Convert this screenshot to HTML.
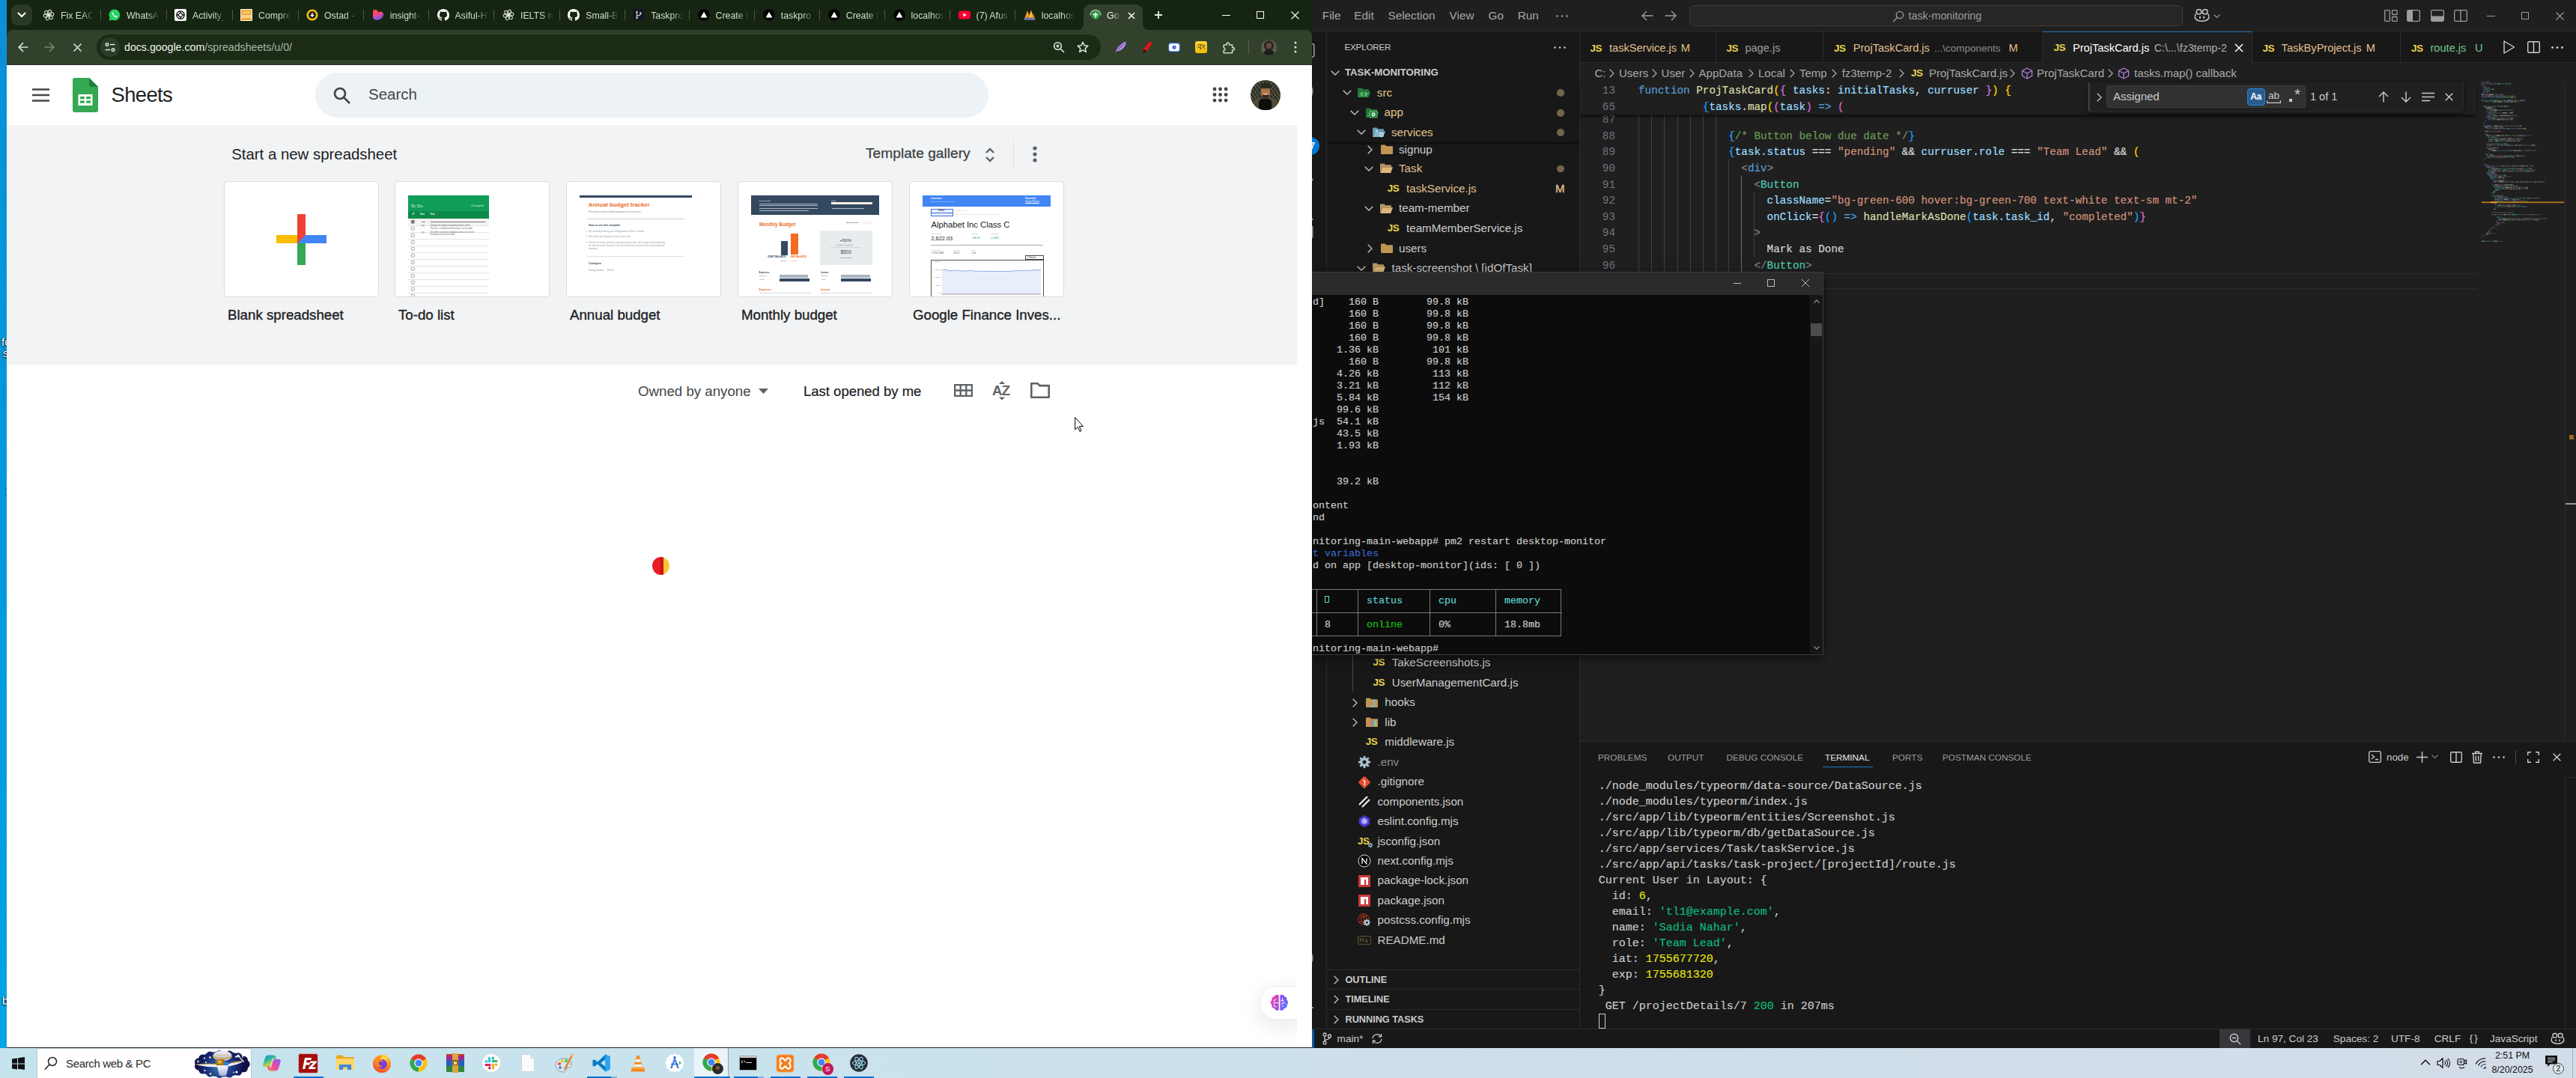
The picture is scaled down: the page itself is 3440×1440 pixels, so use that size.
<!DOCTYPE html>
<html lang="en"><head><meta charset="utf-8"><title>Desktop</title>
<style>
*{box-sizing:border-box;margin:0;padding:0}
html,body{width:3440px;height:1440px;overflow:hidden;background:#0096da;font-family:"Liberation Sans",sans-serif}
.a{position:absolute}
svg{position:absolute;overflow:visible}
#desk{left:0;top:0;width:12px;height:1400px;background:linear-gradient(180deg,#0a90d6 0%,#0098dc 45%,#00a4e4 100%);overflow:hidden}
#desk span{position:absolute;color:#fff;font-size:15px;text-shadow:0 1px 2px #000,0 0 2px #000}

#vs{left:1752px;top:0;width:1688px;height:1400px;background:#1f1f1f;overflow:hidden;color:#ccc;font-size:15.2px}
#vs .title{left:0;top:0;width:1688px;height:42px;background:#1f1f1f;border-bottom:1px solid #2b2b2b}
#vs .menu{position:absolute;top:0;line-height:41px;font-size:15.3px;color:#a6a6a6}
#vs .cc{left:504px;top:6.500px;width:659px;height:28px;border-radius:7px;background:#262626;border:1px solid #3e3e3e}
#vs .actb{left:0;top:42px;width:20px;height:1332px;background:#181818;border-right:1px solid #2b2b2b}
#vs .side{left:20px;top:42px;width:338px;height:1332px;background:#181818;border-right:1px solid #2b2b2b}
#vs .row{position:absolute;left:20px;width:337px;height:26.4px;line-height:26px;white-space:nowrap}
#vs .row .n{position:absolute;top:0}
#vs .row .m{position:absolute;left:307px;top:8.700px;width:9.500px;height:9.500px;border-radius:50%;background:#73654b}
#vs .mod{color:#e2c08d}
#vs .js{position:absolute;font-weight:700;font-size:12px;color:#e8d44d;letter-spacing:-.6px;top:0}
#vs .tabs{left:358px;top:42px;width:1330px;height:42px;background:#181818;border-bottom:1px solid #2b2b2b}
#vs .tab{position:absolute;top:42px;height:42px;border-right:1px solid #2b2b2b;line-height:45px;white-space:nowrap;font-size:14.6px}
#vs .tab span{position:absolute;top:0}
#vs .tab .d{font-size:13.5px;color:#8d8d8d}
#vs .bc{position:absolute;top:84.500px;line-height:26px;font-size:15px;color:#a9a9a9;white-space:nowrap}
#vs .code{position:absolute;left:436px;height:21.6px;line-height:21.6px;font-family:"Liberation Mono",monospace;font-size:14.3px;white-space:pre;color:#d4d4d4;-webkit-text-stroke:.2px}
#vs .ln{position:absolute;left:358px;width:47px;text-align:right;height:21.6px;line-height:21.6px;font-family:"Liberation Mono",monospace;font-size:14.3px;color:#6e7681}
#vs .g{position:absolute;width:1px;background:#404040}
#vs .k{color:#569cd6}#vs .f{color:#dcdcaa}#vs .v{color:#9cdcfe}#vs .s{color:#ce9178}#vs .c{color:#6a9955}#vs .t{color:#4ec9b0}#vs .gr{color:#808080}
#vs .b1{color:#ffd700}#vs .b2{color:#da70d6}#vs .b3{color:#179fff}
#vs .sticky{left:358px;top:110px;width:1197px;height:43.2px;background:#1f1f1f;box-shadow:0 3px 4px rgba(0,0,0,.55)}
#vs .find{left:1036px;top:110px;width:502px;height:40px;background:#202020;border:1px solid #2b2b2b;border-top:none;border-left:3px solid #3a3a3a;border-radius:0 0 5px 5px;box-shadow:0 2px 8px rgba(0,0,0,.5)}
#vs .panel{left:358px;top:990px;width:1330px;height:384px;background:#181818;border-top:1px solid #2b2b2b}
#vs .pt{position:absolute;top:1001px;line-height:22px;font-size:11.75px;color:#9d9d9d;white-space:nowrap}
#vs .tl{position:absolute;left:382.7px;height:21px;line-height:21px;font-family:"Liberation Mono",monospace;font-size:15px;white-space:pre;color:#cccccc;-webkit-text-stroke:.15px}
#vs .y{color:#e5e510}#vs .gn{color:#0dbc79}
#vs .status{left:0;top:1374px;width:1688px;height:26px;background:#181818;border-top:1px solid #2b2b2b}
#vs .st{position:absolute;top:1375px;line-height:25px;font-size:13.6px;color:#ccc;white-space:nowrap}
#vs .sec{position:absolute;left:20px;width:337px;height:26.4px;border-top:1px solid #2b2b2b;font-weight:700;font-size:12.7px;line-height:26px;color:#ccc}
#vs .sec span{position:absolute;left:24.500px}

#tw{left:1752px;top:363px;width:683px;height:512px;background:#0c0c0c;border-right:1px solid #3c3c3c;border-bottom:1px solid #3c3c3c;box-shadow:0 4px 14px rgba(0,0,0,.5);overflow:hidden}
#tw .tt{left:0;top:0;width:683px;height:31px;background:#2b2b2b;border-top:1px solid #3a3a3a}
#tw .sb{left:665px;top:31px;width:17px;height:479px;background:#171717}
#tw .l{position:absolute;left:1px;height:16px;line-height:16px;font-family:"Liberation Mono",monospace;font-size:13.33px;white-space:pre;color:#cccccc;-webkit-text-stroke:.15px}
#tw .bl{color:#3a68cc}#tw .cy{color:#61d6d6}#tw .gn{color:#16c60c}
#tw .tb{position:absolute;border:1px solid #7a7a7a}

#ch{left:9px;top:0;width:1743px;height:1400px;background:#fff;overflow:hidden}
#ch .strip{left:0;top:0;width:1743px;height:52px;background:#152511}
#ch .tsb{left:6px;top:6px;width:28px;height:28px;border-radius:9px;background:#2b3a27}
#ch .tab{position:absolute;top:6px;height:34px;width:87.3px}
#ch .tab .t{position:absolute;left:35px;top:4px;width:46px;height:22px;overflow:hidden;white-space:nowrap;font-size:12.3px;line-height:22px;color:#d3dfcf;-webkit-mask-image:linear-gradient(90deg,#000 62%,transparent 96%);mask-image:linear-gradient(90deg,#000 62%,transparent 96%)}
#ch .tab .sep{position:absolute;left:87px;top:6.500px;width:1px;height:14.500px;background:#48594a}
#ch .tab svg{left:10px;top:6px}
#ch .act{left:1438px;top:6px;width:79px;height:35px;background:#32412b;border-radius:9px 9px 0 0}
#ch .act:before,#ch .act:after{content:"";position:absolute;bottom:0;width:9px;height:9px}
#ch .act:before{left:-9px;background:radial-gradient(circle at 0 0,transparent 8.5px,#32412b 9px)}
#ch .act:after{right:-9px;background:radial-gradient(circle at 100% 0,transparent 8.5px,#32412b 9px)}
#ch .act .t{position:absolute;left:31px;top:4px;width:18px;overflow:hidden;white-space:nowrap;font-size:12.4px;line-height:22px;color:#eef3ec;-webkit-mask-image:linear-gradient(90deg,#000 50%,transparent 100%)}
#ch .bar{left:0;top:40px;width:1743px;height:47px;background:#32412b;border-radius:8px 8px 0 0}
#ch .omni{left:120px;top:46px;width:1341px;height:34px;border-radius:17px;background:#1b2b16}
#ch .omni .ic{position:absolute;left:5px;top:4px;width:26px;height:26px;border-radius:13px;background:#2e3d29}
#ch .omni .url{position:absolute;left:37px;top:0;line-height:34px;font-size:14.2px;color:#a9b6a7;white-space:nowrap}
#ch .omni .url b{font-weight:400;color:#eef3ea}
#ch .tbl{left:0;top:86px;width:1743px;height:1px;background:#2c3528}
#ch .page{left:0;top:87px;width:1743px;height:1313px;background:#fff}
#ch .grey{left:0;top:80px;width:1723px;height:320px;background:#f1f3f4}
#ch .sbox{left:412px;top:10px;width:899px;height:60px;border-radius:30px;background:#edf2f6}
#ch .sbox span{position:absolute;left:71px;top:0;line-height:58px;font-size:20.5px;color:#444746}
#ch .logo-t{left:139.5px;top:17px;font-size:27.4px;line-height:46px;color:#202124;letter-spacing:-.6px}
#ch .h1{left:300.200px;top:104px;font-size:20.4px;line-height:30px;color:#202124}
#ch .tg{left:1147px;top:103px;font-size:19.2px;line-height:30px;color:#3c4043;-webkit-text-stroke:.25px #3c4043}
#ch .vsep{left:1343.5px;top:100px;width:1px;height:39px;background:#dfe1e5}
#ch .card{position:absolute;top:155px;width:207px;height:155px;background:#fff;border:1px solid #dadce0;border-radius:4px;overflow:hidden}
#ch .lbl{position:absolute;top:320px;font-size:18.7px;line-height:28px;color:#202124;font-weight:400;white-space:nowrap;-webkit-text-stroke:.35px #202124}
#ch .flt{position:absolute;top:422px;font-size:18.7px;line-height:28px;white-space:nowrap}
#ch .bclip{left:1560px;top:1160px;width:163px;height:238px;overflow:hidden}
#ch .brain{left:113px;top:69.500px;width:60px;height:45.500px;border-radius:22.500px 0 0 22.500px;background:#fff;border:1px solid #f1f1f1;box-shadow:0 8px 26px 4px rgba(0,0,0,.075)}
#ch .btm{left:0;top:1398.500px;width:1743px;height:1.500px;background:#222}

#tb{left:0;top:1400px;width:3440px;height:40px;background:linear-gradient(90deg,#c5e3ed 0%,#c9e3ed 30%,#cfdfea 60%,#d3dde9 100%)}
#tb .srch{left:49px;top:0;width:287px;height:40px;background:#fff;border:1px solid #b7cbd4;border-bottom:none}
#tb .srch span{position:absolute;left:38px;top:0;line-height:39px;font-size:15px;letter-spacing:-.35px;color:#2b2b2b}
#tb .ul{position:absolute;top:38px;height:2px;background:#0a6fd0}
#tb .clk{position:absolute;left:3305px;width:100px;text-align:center;font-size:12.4px;color:#111;line-height:19px;top:1px}
#tb .ic{position:absolute;top:5px;width:30px;height:30px}
</style></head>
<body>
<div id="desk" class="a"><span style="left:-7px;top:61px">c</span><span style="left:2px;top:448px">fc</span><span style="left:4px;top:463px">s</span><span style="left:7px;top:645px">;</span><span style="left:3px;top:1328px">b</span></div>
<div id="vs" class="a">
<div class="a title"></div>
<div class="menu" style="left:13.8px">File</div>
<div class="menu" style="left:56.3px">Edit</div>
<div class="menu" style="left:101.5px">Selection</div>
<div class="menu" style="left:183.6px">View</div>
<div class="menu" style="left:235.6px">Go</div>
<div class="menu" style="left:274.8px">Run</div>
<svg style="left:326px;top:19.5px" width="16" height="3" viewBox="0 0 16 3"><circle cx="1.500" cy="1.500" r="1.300" fill="#9d9d9d"/><circle cx="8" cy="1.500" r="1.300" fill="#9d9d9d"/><circle cx="14.500" cy="1.500" r="1.300" fill="#9d9d9d"/></svg>
<svg style="left:440px;top:14px" width="16" height="14" viewBox="0 0 16 14"><path d="M15.500 7H1.500M7 1L1 7l6 6" fill="none" stroke="#9d9d9d" stroke-width="1.400"/></svg>
<svg style="left:471px;top:14px" width="16" height="14" viewBox="0 0 16 14"><path d="M.5 7h14M9 1l6 6-6 6" fill="none" stroke="#9d9d9d" stroke-width="1.400"/></svg>
<div class="a cc"><svg style="left:270px;top:6px" width="16" height="16" viewBox="0 0 16 16"><g fill="none" stroke="#9d9d9d" stroke-width="1.300"><circle cx="10" cy="6" r="4.700"/><path d="M6.700 9.300L1 15"/></g></svg><div style="position:absolute;left:291.500px;top:0;line-height:27px;font-size:14.300px;color:#9d9d9d">task-monitoring</div></div>
<svg style="left:1178px;top:11px" width="21" height="19" viewBox="0 0 21 19"><g fill="none" stroke="#c8c8c8" stroke-width="1.500"><rect x="3.200" y="1.800" width="6.400" height="6" rx="2.500"/><rect x="11.400" y="1.800" width="6.400" height="6" rx="2.500"/><path d="M2.500 7.500C1 9 1 11 1.200 13c2 3 5.500 4.300 9.300 4.300s7.300-1.300 9.300-4.300c.200-2 .200-4-1.300-5.500"/></g><rect x="7" y="10.500" width="1.800" height="3.500" rx=".9" fill="#c8c8c8"/><rect x="12.200" y="10.500" width="1.800" height="3.500" rx=".9" fill="#c8c8c8"/></svg>
<svg style="left:1204px;top:18.5px" width="9" height="5.5" viewBox="0 0 9 5.5"><path d="M.6 .6L4.500 4.500 8.400 .6" fill="none" stroke="#9d9d9d" stroke-width="1.200"/></svg>
<svg style="left:1432px;top:13px" width="18" height="16" viewBox="0 0 18 16"><g fill="none" stroke="#9d9d9d" stroke-width="1.300"><rect x=".7" y=".7" width="6.600" height="14.600" rx="1"/><rect x="10.500" y=".7" width="6.600" height="5.800" rx="1"/><rect x="10.500" y="9.500" width="6.600" height="5.800" rx="1"/></g></svg>
<svg style="left:1462px;top:13px" width="18" height="16" viewBox="0 0 18 16"><rect x=".7" y=".7" width="16.600" height="14.600" rx="1.500" fill="none" stroke="#9d9d9d" stroke-width="1.300"/><path d="M1 1h7v14H1z" fill="#9d9d9d"/></svg>
<svg style="left:1493.5px;top:13px" width="18" height="16" viewBox="0 0 18 16"><rect x=".7" y=".7" width="16.600" height="14.600" rx="1.500" fill="none" stroke="#9d9d9d" stroke-width="1.300"/><path d="M1 8.500h16V15H1z" fill="#9d9d9d"/></svg>
<svg style="left:1525px;top:13px" width="18" height="16" viewBox="0 0 18 16"><rect x=".7" y=".7" width="16.600" height="14.600" rx="1.500" fill="none" stroke="#9d9d9d" stroke-width="1.300"/><path d="M9 .7v14.600" stroke="#9d9d9d" stroke-width="1.300"/></svg>
<svg style="left:1568.5px;top:21px" width="11" height="1" viewBox="0 0 11 1"><rect width="11" height="1" fill="#9d9d9d"/></svg>
<svg style="left:1615px;top:16px" width="10" height="10" viewBox="0 0 10 10"><rect x=".5" y=".5" width="9" height="9" fill="none" stroke="#9d9d9d"/></svg>
<svg style="left:1660.5px;top:15.5px" width="11" height="11" viewBox="0 0 11 11"><path d="M.5 .5l10 10M10.500 .5l-10 10" stroke="#9d9d9d" stroke-width="1.100"/></svg>
<div class="a actb"></div><div class="a side"></div>
<svg style="left:-10px;top:58px" width="14" height="20" viewBox="0 0 14 20"><rect x=".8" y=".8" width="12" height="17" rx="2" fill="none" stroke="#9a9a9a" stroke-width="1.600"/></svg>
<svg style="left:-14px;top:108px" width="18" height="30" viewBox="0 0 18 30"><circle cx="4" cy="14" r="11" fill="none" stroke="#8a8a8a" stroke-width="1.600"/></svg>
<div class="a" style="left:-14px;top:183px;width:24px;height:24px;border-radius:50%;background:#0078d4;color:#fff;font-size:12px;line-height:24px;text-align:right;padding-right:6px;font-weight:700">7</div>
<svg style="left:-6px;top:233px" width="8" height="14" viewBox="0 0 8 14"><path d="M1 1l6 6-6 6" fill="none" stroke="#8a8a8a" stroke-width="1.500"/></svg>
<svg style="left:-6px;top:286px" width="8" height="14" viewBox="0 0 8 14"><path d="M1 1l6 6-6 6" fill="none" stroke="#8a8a8a" stroke-width="1.500"/></svg>
<svg style="left:-12px;top:301px" width="14" height="18" viewBox="0 0 14 18"><rect x=".8" y=".8" width="12" height="16" rx="2" fill="none" stroke="#8a8a8a" stroke-width="1.600"/></svg>
<svg style="left:-14px;top:1266px" width="18" height="30" viewBox="0 0 18 30"><circle cx="4" cy="14" r="11" fill="none" stroke="#8a8a8a" stroke-width="1.600"/></svg>
<svg style="left:-10px;top:1334px" width="14" height="26" viewBox="0 0 14 26"><path d="M2 4h6v8h4M8 20H2" fill="none" stroke="#8a8a8a" stroke-width="2.200"/></svg>
<div class="a" style="left:43.5px;top:52px;line-height:22px;font-size:11.700px;color:#ccc;letter-spacing:-.25px">EXPLORER</div>
<svg style="left:323px;top:61.5px" width="16" height="3" viewBox="0 0 16 3"><circle cx="1.500" cy="1.500" r="1.300" fill="#c5c5c5"/><circle cx="8" cy="1.500" r="1.300" fill="#c5c5c5"/><circle cx="14.500" cy="1.500" r="1.300" fill="#c5c5c5"/></svg>
<svg style="left:25px;top:94.0px" width="12" height="7" viewBox="0 0 12 7"><path d="M.7 .7L6 6l5.300-5.300" fill="none" stroke="#c5c5c5" stroke-width="1.300"/></svg>
<div class="a" style="left:44px;top:84px;line-height:26px;font-size:13.200px;font-weight:700;color:#ccc">TASK-MONITORING</div>
<div class="row" style="top:110.8px"><svg style="left:20.6px;top:9.7px" width="12" height="7" viewBox="0 0 12 7"><path d="M.7 .7L6 6l5.300-5.300" fill="none" stroke="#c5c5c5" stroke-width="1.300"/></svg><svg style="left:40px;top:5.199999999999999px" width="18" height="16" viewBox="0 0 18 16"><path d="M1 2.500a1 1 0 0 1 1-1h4.500l1.700 1.800H15a1 1 0 0 1 1 1V6H4.500L1 13z" fill="#2c8f47" opacity=".8"/><path d="M4.300 6.300H18l-2.800 7.700H1z" fill="#2c8f47"/><path d="M7.500 7L5.500 9.500l2 2.500M11 7l2 2.500-2 2.500" fill="none" stroke="#7ee08a" stroke-width="1.200"/></svg><span class="n mod" style="left:66.8px">src</span><span class="m"></span></div>
<div class="row" style="top:137.4px"><svg style="left:31px;top:9.7px" width="12" height="7" viewBox="0 0 12 7"><path d="M.7 .7L6 6l5.300-5.300" fill="none" stroke="#c5c5c5" stroke-width="1.300"/></svg><svg style="left:50.8px;top:5.199999999999999px" width="18" height="16" viewBox="0 0 18 16"><path d="M1 2.500a1 1 0 0 1 1-1h4.500l1.700 1.800H15a1 1 0 0 1 1 1V6H4.500L1 13z" fill="#2c8f47" opacity=".8"/><path d="M4.300 6.300H18l-2.800 7.700H1z" fill="#2c8f47"/><rect x="6.500" y="5.500" width="9.500" height="8.500" fill="#1d7a3a" stroke="#5fd07a" stroke-width=".8"/><rect x="10.72" y="6.83" width="0.97" height="5.94" fill="#d9f5df" transform="rotate(0 11.2 9.8)"/><rect x="10.72" y="6.83" width="0.97" height="5.94" fill="#d9f5df" transform="rotate(45 11.2 9.8)"/><rect x="10.72" y="6.83" width="0.97" height="5.94" fill="#d9f5df" transform="rotate(90 11.2 9.8)"/><rect x="10.72" y="6.83" width="0.97" height="5.94" fill="#d9f5df" transform="rotate(135 11.2 9.8)"/><circle cx="11.2" cy="9.8" r="2.2" fill="#d9f5df"/><circle cx="11.2" cy="9.8" r="0.92" fill="#1d7a3a"/></svg><span class="n mod" style="left:76.6px">app</span><span class="m"></span></div>
<div class="row" style="top:163.8px"><svg style="left:40px;top:9.7px" width="12" height="7" viewBox="0 0 12 7"><path d="M.7 .7L6 6l5.300-5.300" fill="none" stroke="#c5c5c5" stroke-width="1.300"/></svg><svg style="left:60px;top:5.199999999999999px" width="18" height="16" viewBox="0 0 18 16"><path d="M1 2.500a1 1 0 0 1 1-1h4.500l1.700 1.800H15a1 1 0 0 1 1 1V6H4.500L1 13z" fill="#7fb7d6" opacity=".8"/><path d="M4.300 6.300H18l-2.800 7.700H1z" fill="#7fb7d6"/><rect x="11.95" y="7.62" width="1.10" height="6.75" fill="#cfd8dc" transform="rotate(0 12.5 11)"/><rect x="11.95" y="7.62" width="1.10" height="6.75" fill="#cfd8dc" transform="rotate(45 12.5 11)"/><rect x="11.95" y="7.62" width="1.10" height="6.75" fill="#cfd8dc" transform="rotate(90 12.5 11)"/><rect x="11.95" y="7.62" width="1.10" height="6.75" fill="#cfd8dc" transform="rotate(135 12.5 11)"/><circle cx="12.5" cy="11" r="2.5" fill="#cfd8dc"/><circle cx="12.5" cy="11" r="1.05" fill="#6b93ad"/><rect x="6.15" y="3.84" width="0.70" height="4.32" fill="#cfd8dc" transform="rotate(0 6.5 6)"/><rect x="6.15" y="3.84" width="0.70" height="4.32" fill="#cfd8dc" transform="rotate(45 6.5 6)"/><rect x="6.15" y="3.84" width="0.70" height="4.32" fill="#cfd8dc" transform="rotate(90 6.5 6)"/><rect x="6.15" y="3.84" width="0.70" height="4.32" fill="#cfd8dc" transform="rotate(135 6.5 6)"/><circle cx="6.5" cy="6" r="1.6" fill="#cfd8dc"/><circle cx="6.5" cy="6" r="0.67" fill="#6b93ad"/></svg><span class="n mod" style="left:86px">services</span><span class="m"></span></div>
<div class="a" style="left:20px;top:190px;width:337px;height:4px;background:linear-gradient(180deg,rgba(0,0,0,.55),transparent)"></div>
<div class="row" style="top:186.8px"><svg style="left:53.5px;top:7.199999999999999px" width="7" height="12" viewBox="0 0 7 12"><path d="M.7 .7L6 6 .7 11.300" fill="none" stroke="#c5c5c5" stroke-width="1.300"/></svg><svg style="left:71px;top:5.199999999999999px" width="18" height="16" viewBox="0 0 18 16"><path d="M1 2.500a1 1 0 0 1 1-1h4.500l1.700 1.800H16a1 1 0 0 1 1 1V13a1 1 0 0 1-1 1H2a1 1 0 0 1-1-1z" fill="#c09553"/></svg><span class="n" style="left:96px">signup</span></div>
<div class="row" style="top:212.2px"><svg style="left:50px;top:9.7px" width="12" height="7" viewBox="0 0 12 7"><path d="M.7 .7L6 6l5.300-5.300" fill="none" stroke="#c5c5c5" stroke-width="1.300"/></svg><svg style="left:70px;top:5.199999999999999px" width="18" height="16" viewBox="0 0 18 16"><path d="M1 2.500a1 1 0 0 1 1-1h4.500l1.700 1.800H15a1 1 0 0 1 1 1V6H4.500L1 13z" fill="#dcb67a" opacity=".8"/><path d="M4.300 6.300H18l-2.800 7.700H1z" fill="#dcb67a"/></svg><span class="n mod" style="left:96px">Task</span><span class="m"></span></div>
<div class="row" style="top:238.8px"><span class="js" style="left:80.8px;font-size:13.5px">JS</span><span class="n mod" style="left:106px">taskService.js</span><span class="n mod" style="left:305px;font-size:15px;-webkit-text-stroke:.35px">M</span></div>
<div class="row" style="top:265.4px"><svg style="left:50px;top:9.7px" width="12" height="7" viewBox="0 0 12 7"><path d="M.7 .7L6 6l5.300-5.300" fill="none" stroke="#c5c5c5" stroke-width="1.300"/></svg><svg style="left:70px;top:5.199999999999999px" width="18" height="16" viewBox="0 0 18 16"><path d="M1 2.500a1 1 0 0 1 1-1h4.500l1.700 1.800H15a1 1 0 0 1 1 1V6H4.500L1 13z" fill="#dcb67a" opacity=".8"/><path d="M4.300 6.300H18l-2.800 7.700H1z" fill="#dcb67a"/></svg><span class="n" style="left:96px">team-member</span></div>
<div class="row" style="top:292.2px"><span class="js" style="left:80.8px;font-size:13.5px">JS</span><span class="n" style="left:106px">teamMemberService.js</span></div>
<div class="row" style="top:318.6px"><svg style="left:53.5px;top:7.199999999999999px" width="7" height="12" viewBox="0 0 7 12"><path d="M.7 .7L6 6 .7 11.300" fill="none" stroke="#c5c5c5" stroke-width="1.300"/></svg><svg style="left:71px;top:5.199999999999999px" width="18" height="16" viewBox="0 0 18 16"><path d="M1 2.500a1 1 0 0 1 1-1h4.500l1.700 1.800H16a1 1 0 0 1 1 1V13a1 1 0 0 1-1 1H2a1 1 0 0 1-1-1z" fill="#c09553"/></svg><span class="n" style="left:96px">users</span></div>
<div class="row" style="top:345.0px"><svg style="left:40px;top:9.7px" width="12" height="7" viewBox="0 0 12 7"><path d="M.7 .7L6 6l5.300-5.300" fill="none" stroke="#c5c5c5" stroke-width="1.300"/></svg><svg style="left:60px;top:5.199999999999999px" width="18" height="16" viewBox="0 0 18 16"><path d="M1 2.500a1 1 0 0 1 1-1h4.500l1.700 1.800H15a1 1 0 0 1 1 1V6H4.500L1 13z" fill="#dcb67a" opacity=".8"/><path d="M4.300 6.300H18l-2.800 7.700H1z" fill="#dcb67a"/></svg><span class="n" style="left:86.5px">task-screenshot \ [idOfTask]</span></div>
<div class="a" style="left:54.3px;top:870px;width:1px;height:54px;background:#4a4a4a"></div>
<div class="row" style="top:872.3px"><span class="js" style="left:61.599999999999994px;font-size:13.5px">JS</span><span class="n" style="left:86.7px">TakeScreenshots.js</span></div>
<div class="row" style="top:899.0px"><span class="js" style="left:61.599999999999994px;font-size:13.5px">JS</span><span class="n" style="left:86.7px">UserManagementCard.js</span></div>
<div class="row" style="top:925.4px"><svg style="left:33.9px;top:7.199999999999999px" width="7" height="12" viewBox="0 0 7 12"><path d="M.7 .7L6 6 .7 11.300" fill="none" stroke="#c5c5c5" stroke-width="1.300"/></svg><svg style="left:50.8px;top:5.199999999999999px" width="18" height="16" viewBox="0 0 18 16"><path d="M1 2.500a1 1 0 0 1 1-1h4.500l1.700 1.800H16a1 1 0 0 1 1 1V13a1 1 0 0 1-1 1H2a1 1 0 0 1-1-1z" fill="#c09553"/><path d="M12 6v5a2.200 2.200 0 0 1-4.400 0" fill="none" stroke="#6ec1e4" stroke-width="1.400"/><circle cx="12" cy="5" r="1.300" fill="none" stroke="#6ec1e4" stroke-width="1"/></svg><span class="n" style="left:77.3px">hooks</span></div>
<div class="row" style="top:952.0px"><svg style="left:33.9px;top:7.199999999999999px" width="7" height="12" viewBox="0 0 7 12"><path d="M.7 .7L6 6 .7 11.300" fill="none" stroke="#c5c5c5" stroke-width="1.300"/></svg><svg style="left:50.8px;top:5.199999999999999px" width="18" height="16" viewBox="0 0 18 16"><path d="M1 2.500a1 1 0 0 1 1-1h4.500l1.700 1.800H16a1 1 0 0 1 1 1V13a1 1 0 0 1-1 1H2a1 1 0 0 1-1-1z" fill="#c09553"/><rect x="8" y="5.500" width="2" height="8" fill="#e05aa0"/><rect x="10.500" y="5.500" width="2" height="8" fill="#4fb3e8"/><rect x="13" y="5.500" width="2" height="8" fill="#8bd450"/></svg><span class="n" style="left:77.3px">lib</span></div>
<div class="row" style="top:978.4px"><span class="js" style="left:51.8px;font-size:13.5px">JS</span><span class="n" style="left:77.3px">middleware.js</span></div>
<div class="row" style="top:1004.8px"><svg style="left:41.400000000000006px;top:4.199999999999999px" width="18" height="18" viewBox="0 0 18 18"><rect x="7.68" y="0.90" width="2.64" height="16.20" fill="#a9c1cc" transform="rotate(0 9 9)"/><rect x="7.68" y="0.90" width="2.64" height="16.20" fill="#a9c1cc" transform="rotate(45 9 9)"/><rect x="7.68" y="0.90" width="2.64" height="16.20" fill="#a9c1cc" transform="rotate(90 9 9)"/><rect x="7.68" y="0.90" width="2.64" height="16.20" fill="#a9c1cc" transform="rotate(135 9 9)"/><circle cx="9" cy="9" r="6" fill="#a9c1cc"/><circle cx="9" cy="9" r="2.52" fill="#181818"/></svg><span class="n" style="left:67.5px;color:#8c8c8c">.env</span></div>
<div class="row" style="top:1031.4px"><svg style="left:41.400000000000006px;top:4.199999999999999px" width="18" height="18" viewBox="0 0 18 18"><rect x="3" y="3" width="12" height="12" rx="1.500" fill="#e64a33" transform="rotate(45 9 9)"/><path d="M7.500 5.500l3 3M9.300 7.200v5.300" stroke="#fff" stroke-width="1.200" fill="none"/><circle cx="9.300" cy="12.300" r="1" fill="#fff"/></svg><span class="n" style="left:67.5px">.gitignore</span></div>
<div class="row" style="top:1057.8px"><svg style="left:41.400000000000006px;top:4.199999999999999px" width="18" height="18" viewBox="0 0 18 18"><path d="M2 13L13 2M6 16L16 6" stroke="#eee" stroke-width="2.200" fill="none"/></svg><span class="n" style="left:67.5px">components.json</span></div>
<div class="row" style="top:1084.2px"><svg style="left:41.400000000000006px;top:4.199999999999999px" width="18" height="18" viewBox="0 0 18 18"><path d="M9 .8l7.200 4.100v8.200L9 17.200l-7.200-4.100V4.900z" fill="#4b32c3"/><path d="M9 4l4.400 2.500v5L9 14l-4.400-2.500v-5z" fill="#8080f2"/><path d="M9 5.800l2.800 1.600v3.200L9 12.200l-2.800-1.600V7.400z" fill="#b4b4fa"/></svg><span class="n" style="left:67.5px">eslint.config.mjs</span></div>
<div class="row" style="top:1110.6px"><span class="js" style="left:41px;font-size:13.5px">JS</span><svg style="left:54px;top:14px" width="8" height="8" viewBox="0 0 8 8"><rect x="3.47" y="0.76" width="1.06" height="6.48" fill="#8fb5c7" transform="rotate(0 4 4)"/><rect x="3.47" y="0.76" width="1.06" height="6.48" fill="#8fb5c7" transform="rotate(45 4 4)"/><rect x="3.47" y="0.76" width="1.06" height="6.48" fill="#8fb5c7" transform="rotate(90 4 4)"/><rect x="3.47" y="0.76" width="1.06" height="6.48" fill="#8fb5c7" transform="rotate(135 4 4)"/><circle cx="4" cy="4" r="2.4" fill="#8fb5c7"/><circle cx="4" cy="4" r="1.01" fill="#181818"/></svg><span class="n" style="left:67.5px">jsconfig.json</span></div>
<div class="row" style="top:1137.0px"><svg style="left:41.400000000000006px;top:4.199999999999999px" width="18" height="18" viewBox="0 0 18 18"><circle cx="9" cy="9" r="8" fill="#000" stroke="#ddd" stroke-width="1"/><path d="M6 13V5.500l6.500 8M12 5.500v5" stroke="#fff" stroke-width="1.300" fill="none"/></svg><span class="n" style="left:67.5px">next.config.mjs</span></div>
<div class="row" style="top:1163.4px"><svg style="left:41.400000000000006px;top:4.199999999999999px" width="18" height="18" viewBox="0 0 18 18"><rect x="1" y="1" width="16" height="16" fill="#cb3837"/><path d="M4 4h10v10h-2.800V7H9v7H4z" fill="#fff"/></svg><span class="n" style="left:67.5px">package-lock.json</span></div>
<div class="row" style="top:1189.8px"><svg style="left:41.400000000000006px;top:4.199999999999999px" width="18" height="18" viewBox="0 0 18 18"><rect x="1" y="1" width="16" height="16" fill="#cb3837"/><path d="M4 4h10v10h-2.800V7H9v7H4z" fill="#fff"/></svg><span class="n" style="left:67.5px">package.json</span></div>
<div class="row" style="top:1216.2px"><svg style="left:41.400000000000006px;top:4.199999999999999px" width="18" height="18" viewBox="0 0 18 18"><circle cx="8" cy="8" r="7.200" fill="none" stroke="#c3361c" stroke-width="1"/><circle cx="8" cy="8" r="3.800" fill="none" stroke="#c3361c" stroke-width=".9"/><path d="M8 1v14M2 11.500h12M3 4l10 0" stroke="#c3361c" stroke-width=".8"/><rect x="11.55" y="7.71" width="1.50" height="9.18" fill="#b9d0dc" transform="rotate(0 12.3 12.3)"/><rect x="11.55" y="7.71" width="1.50" height="9.18" fill="#b9d0dc" transform="rotate(45 12.3 12.3)"/><rect x="11.55" y="7.71" width="1.50" height="9.18" fill="#b9d0dc" transform="rotate(90 12.3 12.3)"/><rect x="11.55" y="7.71" width="1.50" height="9.18" fill="#b9d0dc" transform="rotate(135 12.3 12.3)"/><circle cx="12.3" cy="12.3" r="3.4" fill="#b9d0dc"/><circle cx="12.3" cy="12.3" r="1.43" fill="#181818"/></svg><span class="n" style="left:67.5px">postcss.config.mjs</span></div>
<div class="row" style="top:1242.6px"><svg style="left:41.400000000000006px;top:7.199999999999999px" width="18" height="12" viewBox="0 0 18 12"><rect x=".6" y=".6" width="16.800" height="10.800" rx="1.500" fill="none" stroke="#5a4a30" stroke-width="1.200"/><path d="M3.500 8.500v-5l2 2.500 2-2.500v5M12 3.500v4.500M10 6.300l2 2.200 2-2.200" fill="none" stroke="#5a4a30" stroke-width="1.200"/></svg><span class="n" style="left:67.5px">README.md</span></div>
<div class="sec" style="top:1295px"><svg style="left:8.5px;top:7px" width="7" height="12" viewBox="0 0 7 12"><path d="M.7 .7L6 6 .7 11.300" fill="none" stroke="#c5c5c5" stroke-width="1.300"/></svg><span>OUTLINE</span></div>
<div class="sec" style="top:1320.5px"><svg style="left:8.5px;top:7px" width="7" height="12" viewBox="0 0 7 12"><path d="M.7 .7L6 6 .7 11.300" fill="none" stroke="#c5c5c5" stroke-width="1.300"/></svg><span>TIMELINE</span></div>
<div class="sec" style="top:1348px"><svg style="left:8.5px;top:7px" width="7" height="12" viewBox="0 0 7 12"><path d="M.7 .7L6 6 .7 11.300" fill="none" stroke="#c5c5c5" stroke-width="1.300"/></svg><span>RUNNING TASKS</span></div>
<div class="a tabs"></div>
<div class="tab" style="left:358px;width:181.6px;"><span class="" style="left:13.5px;font-weight:700;font-size:13.500px;color:#e8d44d;letter-spacing:-.6px">JS</span><span class="mod" style="left:39.0px;">taskService.js</span><span class="mod" style="left:134.7px;">M</span></div>
<div class="tab" style="left:539.6px;width:143.4px;"><span class="" style="left:13.9px;font-weight:700;font-size:13.500px;color:#e8d44d;letter-spacing:-.6px">JS</span><span class="" style="left:38.8px;color:#9d9d9d">page.js</span></div>
<div class="tab" style="left:683px;width:293.0px;"><span class="" style="left:14.0px;font-weight:700;font-size:13.500px;color:#e8d44d;letter-spacing:-.6px">JS</span><span class="mod" style="left:39.7px;">ProjTaskCard.js</span><span class="d" style="left:148.0px;">...\components</span><span class="mod" style="left:247.5px;">M</span></div>
<div class="tab" style="left:976px;width:279.5px;background:#1f1f1f;border-top:1.200px solid #1a6fb5;height:43px;line-height:42px;"><span class="" style="left:14.5px;font-weight:700;font-size:13.500px;color:#e8d44d;letter-spacing:-.6px">JS</span><span class="" style="left:40.0px;color:#fff">ProjTaskCard.js</span><span class="d" style="left:148.8px;color:#b0b0b0;font-size:14.200px">C:\...\fz3temp-2</span></div>
<svg style="left:1232px;top:58px" width="12" height="12" viewBox="0 0 12 12"><path d="M1 1l10 10M11 1L1 11" stroke="#fff" stroke-width="1.500"/></svg>
<div class="tab" style="left:1255.5px;width:198.5px;"><span class="" style="left:14.0px;font-weight:700;font-size:13.500px;color:#e8d44d;letter-spacing:-.6px">JS</span><span class="mod" style="left:39.1px;">TaskByProject.js</span><span class="mod" style="left:152.3px;">M</span></div>
<div class="tab" style="left:1454px;width:129.0px;"><span class="" style="left:14.0px;font-weight:700;font-size:13.500px;color:#e8d44d;letter-spacing:-.6px">JS</span><span class="" style="left:39.5px;color:#73c991">route.js</span><span class="" style="left:99.0px;color:#73c991">U</span></div>
<div class="a" style="left:1582px;top:42px;width:106px;height:41px;background:#181818"></div>
<svg style="left:1591px;top:54px" width="16" height="18" viewBox="0 0 16 18"><path d="M1 1l13.500 8L1 17z" fill="none" stroke="#d0d0d0" stroke-width="1.400" stroke-linejoin="round"/></svg>
<svg style="left:1623px;top:55px" width="17" height="16" viewBox="0 0 17 16"><rect x=".7" y=".7" width="15.600" height="14.600" rx="1.500" fill="none" stroke="#d0d0d0" stroke-width="1.400"/><path d="M8.500 .7v14.600" stroke="#d0d0d0" stroke-width="1.400"/></svg>
<svg style="left:1655px;top:62px" width="16" height="3" viewBox="0 0 16 3"><circle cx="1.500" cy="1.500" r="1.400" fill="#d0d0d0"/><circle cx="8" cy="1.500" r="1.400" fill="#d0d0d0"/><circle cx="14.500" cy="1.500" r="1.400" fill="#d0d0d0"/></svg>
<div class="bc" style="left:377.5px;">C:</div>
<div class="bc" style="left:410px;">Users</div>
<div class="bc" style="left:466.6px;">User</div>
<div class="bc" style="left:516.6px;">AppData</div>
<div class="bc" style="left:596px;">Local</div>
<div class="bc" style="left:651px;">Temp</div>
<div class="bc" style="left:707.7px;">fz3temp-2</div>
<div class="bc" style="left:824px;">ProjTaskCard.js</div>
<div class="bc" style="left:968px;">ProjTaskCard</div>
<div class="bc" style="left:1098px;">tasks.map() callback</div>
<svg style="left:396.5px;top:91.5px" width="7" height="12" viewBox="0 0 7 12"><path d="M.7 .7L6 6 .7 11.300" fill="none" stroke="#a9a9a9" stroke-width="1.300"/></svg>
<svg style="left:453.5px;top:91.5px" width="7" height="12" viewBox="0 0 7 12"><path d="M.7 .7L6 6 .7 11.300" fill="none" stroke="#a9a9a9" stroke-width="1.300"/></svg>
<svg style="left:503.5px;top:91.5px" width="7" height="12" viewBox="0 0 7 12"><path d="M.7 .7L6 6 .7 11.300" fill="none" stroke="#a9a9a9" stroke-width="1.300"/></svg>
<svg style="left:583.0px;top:91.5px" width="7" height="12" viewBox="0 0 7 12"><path d="M.7 .7L6 6 .7 11.300" fill="none" stroke="#a9a9a9" stroke-width="1.300"/></svg>
<svg style="left:637.5px;top:91.5px" width="7" height="12" viewBox="0 0 7 12"><path d="M.7 .7L6 6 .7 11.300" fill="none" stroke="#a9a9a9" stroke-width="1.300"/></svg>
<svg style="left:693.5px;top:91.5px" width="7" height="12" viewBox="0 0 7 12"><path d="M.7 .7L6 6 .7 11.300" fill="none" stroke="#a9a9a9" stroke-width="1.300"/></svg>
<svg style="left:784.0px;top:91.5px" width="7" height="12" viewBox="0 0 7 12"><path d="M.7 .7L6 6 .7 11.300" fill="none" stroke="#a9a9a9" stroke-width="1.300"/></svg>
<svg style="left:932.0px;top:91.5px" width="7" height="12" viewBox="0 0 7 12"><path d="M.7 .7L6 6 .7 11.300" fill="none" stroke="#a9a9a9" stroke-width="1.300"/></svg>
<svg style="left:1062.5px;top:91.5px" width="7" height="12" viewBox="0 0 7 12"><path d="M.7 .7L6 6 .7 11.300" fill="none" stroke="#a9a9a9" stroke-width="1.300"/></svg>
<div class="bc" style="left:800px;font-weight:700;font-size:13.500px;color:#e8d44d;letter-spacing:-.6px">JS</div>
<svg style="left:946.7px;top:89.5px" width="16" height="16" viewBox="0 0 16 16"><g fill="none" stroke="#b180d7" stroke-width="1.300" stroke-linejoin="round"><path d="M8 1l6.500 3.500v7L8 15l-6.500-3.500v-7z"/><path d="M1.500 4.500L8 8l6.500-3.500M8 8v7"/></g></svg>
<svg style="left:1076px;top:89.5px" width="16" height="16" viewBox="0 0 16 16"><g fill="none" stroke="#b180d7" stroke-width="1.300" stroke-linejoin="round"><path d="M8 1l6.500 3.500v7L8 15l-6.500-3.500v-7z"/><path d="M1.500 4.500L8 8l6.500-3.500M8 8v7"/></g></svg>
<div class="ln" style="top:150.1px">87</div><div class="code" style="top:150.1px"></div>
<div class="ln" style="top:171.7px">88</div><div class="code" style="top:171.7px">              <span class="b3">{</span><span class="c">/* Button below due date */</span><span class="b3">}</span></div>
<div class="ln" style="top:193.3px">89</div><div class="code" style="top:193.3px">              <span class="b3">{</span><span class="v">task.status</span> === <span class="s">"pending"</span> &amp;&amp; <span class="v">curruser.role</span> === <span class="s">"Team Lead"</span> &amp;&amp; <span class="b1">(</span></div>
<div class="ln" style="top:214.9px">90</div><div class="code" style="top:214.9px">                <span class="gr">&lt;</span><span class="k">div</span><span class="gr">&gt;</span></div>
<div class="ln" style="top:236.5px">91</div><div class="code" style="top:236.5px">                  <span class="gr">&lt;</span><span class="t">Button</span></div>
<div class="ln" style="top:258.1px">92</div><div class="code" style="top:258.1px">                    <span class="v">className</span>=<span class="s">"bg-green-600 hover:bg-green-700 text-white text-sm mt-2"</span></div>
<div class="ln" style="top:279.7px">93</div><div class="code" style="top:279.7px">                    <span class="v">onClick</span>=<span class="b2">{</span><span class="b3">()</span> <span class="k">=&gt;</span> <span class="f">handleMarkAsDone</span><span class="b3">(</span><span class="v">task.task_id</span>, <span class="s">"completed"</span><span class="b3">)</span><span class="b2">}</span></div>
<div class="ln" style="top:301.3px">94</div><div class="code" style="top:301.3px">                  <span class="gr">&gt;</span></div>
<div class="ln" style="top:322.9px">95</div><div class="code" style="top:322.9px">                    Mark as Done</div>
<div class="ln" style="top:344.5px">96</div><div class="code" style="top:344.5px">                  <span class="gr">&lt;/</span><span class="t">Button</span><span class="gr">&gt;</span></div>
<div class="g" style="left:436.0px;top:148px;height:217px;background:#404040"></div>
<div class="g" style="left:453.2px;top:148px;height:217px;background:#404040"></div>
<div class="g" style="left:470.3px;top:148px;height:217px;background:#404040"></div>
<div class="g" style="left:487.5px;top:148px;height:217px;background:#404040"></div>
<div class="g" style="left:504.6px;top:148px;height:217px;background:#404040"></div>
<div class="g" style="left:521.8px;top:148px;height:217px;background:#404040"></div>
<div class="g" style="left:538.9px;top:148px;height:217px;background:#404040"></div>
<div class="g" style="left:556.1px;top:213.4px;height:151.6px;background:#404040"></div>
<div class="g" style="left:573.2px;top:235px;height:130px;background:#6a6a6a"></div>
<div class="g" style="left:590.4px;top:256.6px;height:86.59999999999997px;background:#404040"></div>
<div class="a" style="left:358px;top:364.600px;width:1197px;height:21.600px;border-top:1.500px solid #2c2c2c;border-bottom:1.500px solid #2c2c2c"></div>
<div class="a sticky"></div>
<div class="ln" style="top:111.2px">13</div><div class="code" style="top:111.2px"><span class="k">function</span> <span class="f">ProjTaskCard</span><span class="b1">(</span><span class="b2">{</span> <span class="v">tasks</span>: <span class="v">initialTasks</span>, <span class="v">curruser</span> <span class="b2">}</span><span class="b1">)</span> <span class="b1">{</span></div>
<div class="ln" style="top:132.8px">65</div><div class="code" style="top:132.8px">          <span class="b3">{</span><span class="v">tasks</span>.<span class="f">map</span><span class="b1">(</span><span class="b2">(</span><span class="v">task</span><span class="b2">)</span> <span class="k">=&gt;</span> <span class="b2">(</span></div>
<div class="a find"><svg style="left:9.0px;top:14px" width="7" height="12" viewBox="0 0 7 12"><path d="M.7 .7L6 6 .7 11.300" fill="none" stroke="#c5c5c5" stroke-width="1.300"/></svg><div style="position:absolute;left:22px;top:4px;width:266px;height:30px;background:#313131;border:1px solid #3c3c3c;border-radius:3px"></div><div style="position:absolute;left:31px;top:4px;line-height:29px;font-size:15px;color:#ccc">Assigned</div><div style="position:absolute;left:209.500px;top:8px;width:24px;height:23px;border-radius:4px;background:#2a5d8f;border:1px solid #2488db;color:#fff;font-size:12px;font-weight:700;line-height:21px;text-align:center;letter-spacing:-.5px">Aa</div><div style="position:absolute;left:238px;top:6.500px;font-size:13.500px;line-height:22px;color:#ccc">ab</div><svg style="left:235.5px;top:24px" width="19" height="4" viewBox="0 0 19 4"><path d="M.6 0v3.400h17.800V0" fill="none" stroke="#ccc" stroke-width="1.200"/></svg><div style="position:absolute;left:271px;top:8px;font-size:20px;line-height:22px;color:#ccc;font-family:'Liberation Mono',monospace">*</div><div style="position:absolute;left:265.500px;top:21.500px;width:4.500px;height:4.500px;background:#ccc"></div><div style="position:absolute;left:294px;top:5px;line-height:29px;font-size:14.500px;color:#ccc">1 of 1</div><svg style="left:385px;top:12px" width="14" height="15" viewBox="0 0 14 15"><path d="M7 14.500V1.500M1 7l6-6 6 6" fill="none" stroke="#ccc" stroke-width="1.400"/></svg><svg style="left:415px;top:12px" width="14" height="15" viewBox="0 0 14 15"><path d="M7 .5v13M1 8l6 6 6-6" fill="none" stroke="#ccc" stroke-width="1.400"/></svg><svg style="left:443px;top:13px" width="17" height="13" viewBox="0 0 17 13"><path d="M0 1.500h17M0 6.500h17M0 11.500h11" stroke="#ccc" stroke-width="1.400"/></svg><svg style="left:474px;top:14px" width="11" height="11" viewBox="0 0 11 11"><path d="M.7 .7l9.600 9.600M10.300 .7L.7 10.300" stroke="#ccc" stroke-width="1.400"/></svg></div>
<svg style="left:1555px;top:0" width="118" height="400" viewBox="0 0 118 400"><rect x="6.8" y="109.0" width="2.4" height="1.300" fill="#c586c0" opacity="0.43"/><rect x="10.1" y="109.0" width="0.9" height="1.300" fill="#9cdcfe" opacity="0.42"/><rect x="11.9" y="109.0" width="0.9" height="1.300" fill="#dcdcaa" opacity="0.31"/><rect x="13.7" y="109.0" width="3.0" height="1.300" fill="#9cdcfe" opacity="0.38"/><rect x="17.6" y="109.0" width="0.8" height="1.300" fill="#569cd6" opacity="0.56"/><rect x="6.8" y="111.2" width="1.3" height="1.300" fill="#c586c0" opacity="0.50"/><rect x="9.0" y="111.2" width="3.8" height="1.300" fill="#569cd6" opacity="0.48"/><rect x="13.7" y="111.2" width="2.8" height="1.300" fill="#dcdcaa" opacity="0.31"/><rect x="17.4" y="111.2" width="5.3" height="1.300" fill="#c586c0" opacity="0.43"/><rect x="23.6" y="111.2" width="3.6" height="1.300" fill="#c586c0" opacity="0.48"/><rect x="28.1" y="111.2" width="4.4" height="1.300" fill="#9cdcfe" opacity="0.49"/><rect x="33.3" y="111.2" width="4.1" height="1.300" fill="#4ec9b0" opacity="0.33"/><rect x="38.3" y="111.2" width="4.5" height="1.300" fill="#569cd6" opacity="0.50"/><rect x="43.8" y="111.2" width="1.8" height="1.300" fill="#d4d4d4" opacity="0.55"/><rect x="6.8" y="113.0" width="2.0" height="1.300" fill="#4ec9b0" opacity="0.42"/><rect x="9.3" y="115.0" width="2.0" height="1.300" fill="#c586c0" opacity="0.52"/><rect x="12.1" y="115.0" width="0.8" height="1.300" fill="#c586c0" opacity="0.47"/><rect x="9.3" y="116.8" width="5.4" height="1.300" fill="#4ec9b0" opacity="0.39"/><rect x="15.6" y="116.8" width="2.1" height="1.300" fill="#9cdcfe" opacity="0.46"/><rect x="9.3" y="118.6" width="1.5" height="1.300" fill="#9cdcfe" opacity="0.35"/><rect x="11.7" y="118.6" width="3.3" height="1.300" fill="#569cd6" opacity="0.61"/><rect x="15.9" y="118.6" width="1.0" height="1.300" fill="#4ec9b0" opacity="0.41"/><rect x="17.8" y="118.6" width="2.5" height="1.300" fill="#6a9955" opacity="0.49"/><rect x="21.2" y="118.6" width="2.1" height="1.300" fill="#9cdcfe" opacity="0.60"/><rect x="9.3" y="120.4" width="3.2" height="1.300" fill="#569cd6" opacity="0.32"/><rect x="13.4" y="120.4" width="4.3" height="1.300" fill="#6a9955" opacity="0.39"/><rect x="9.3" y="122.1" width="2.7" height="1.300" fill="#9cdcfe" opacity="0.31"/><rect x="12.9" y="122.1" width="3.1" height="1.300" fill="#ce9178" opacity="0.50"/><rect x="16.9" y="122.1" width="0.8" height="1.300" fill="#dcdcaa" opacity="0.55"/><rect x="6.8" y="123.9" width="1.3" height="1.300" fill="#c586c0" opacity="0.43"/><rect x="9.0" y="123.9" width="2.0" height="1.300" fill="#6a9955" opacity="0.33"/><rect x="6.8" y="125.7" width="3.1" height="1.300" fill="#9cdcfe" opacity="0.58"/><rect x="10.8" y="125.7" width="5.1" height="1.300" fill="#c586c0" opacity="0.53"/><rect x="16.8" y="125.7" width="6.0" height="1.300" fill="#d4d4d4" opacity="0.61"/><rect x="23.7" y="125.7" width="1.4" height="1.300" fill="#ce9178" opacity="0.35"/><rect x="26.0" y="125.7" width="4.2" height="1.300" fill="#569cd6" opacity="0.46"/><rect x="31.2" y="125.7" width="3.8" height="1.300" fill="#c586c0" opacity="0.39"/><rect x="35.9" y="125.7" width="0.8" height="1.300" fill="#4ec9b0" opacity="0.50"/><rect x="6.8" y="127.5" width="2.4" height="1.300" fill="#c586c0" opacity="0.52"/><rect x="10.1" y="127.5" width="3.4" height="1.300" fill="#569cd6" opacity="0.45"/><rect x="14.4" y="127.5" width="5.4" height="1.300" fill="#d4d4d4" opacity="0.43"/><rect x="20.7" y="127.5" width="2.8" height="1.300" fill="#6a9955" opacity="0.50"/><rect x="24.4" y="127.5" width="0.9" height="1.300" fill="#9cdcfe" opacity="0.62"/><rect x="26.2" y="127.5" width="3.0" height="1.300" fill="#9cdcfe" opacity="0.41"/><rect x="30.1" y="127.5" width="0.9" height="1.300" fill="#569cd6" opacity="0.48"/><rect x="31.9" y="127.5" width="3.6" height="1.300" fill="#4ec9b0" opacity="0.50"/><rect x="36.4" y="127.5" width="1.0" height="1.300" fill="#dcdcaa" opacity="0.50"/><rect x="38.3" y="127.5" width="1.4" height="1.300" fill="#c586c0" opacity="0.61"/><rect x="40.6" y="127.5" width="3.9" height="1.300" fill="#6a9955" opacity="0.34"/><rect x="45.4" y="127.5" width="5.3" height="1.300" fill="#6a9955" opacity="0.45"/><rect x="6.8" y="129.3" width="2.3" height="1.300" fill="#c586c0" opacity="0.33"/><rect x="10.0" y="129.3" width="2.5" height="1.300" fill="#c586c0" opacity="0.45"/><rect x="13.4" y="129.3" width="4.4" height="1.300" fill="#569cd6" opacity="0.37"/><rect x="18.7" y="129.3" width="5.8" height="1.300" fill="#4ec9b0" opacity="0.35"/><rect x="25.5" y="129.3" width="3.6" height="1.300" fill="#569cd6" opacity="0.54"/><rect x="29.9" y="129.3" width="2.2" height="1.300" fill="#9cdcfe" opacity="0.52"/><rect x="33.1" y="129.3" width="2.0" height="1.300" fill="#4ec9b0" opacity="0.59"/><rect x="36.0" y="129.3" width="2.6" height="1.300" fill="#dcdcaa" opacity="0.47"/><rect x="39.5" y="129.3" width="4.9" height="1.300" fill="#4ec9b0" opacity="0.50"/><rect x="45.3" y="129.3" width="4.0" height="1.300" fill="#dcdcaa" opacity="0.56"/><rect x="50.1" y="129.3" width="3.2" height="1.300" fill="#dcdcaa" opacity="0.36"/><rect x="6.8" y="133.5" width="3.3" height="1.300" fill="#569cd6" opacity="0.62"/><rect x="11.0" y="133.5" width="4.9" height="1.300" fill="#6a9955" opacity="0.38"/><rect x="16.9" y="133.5" width="4.4" height="1.300" fill="#4ec9b0" opacity="0.44"/><rect x="22.2" y="133.5" width="5.8" height="1.300" fill="#4ec9b0" opacity="0.61"/><rect x="28.8" y="133.5" width="2.6" height="1.300" fill="#dcdcaa" opacity="0.33"/><rect x="32.3" y="133.5" width="3.2" height="1.300" fill="#4ec9b0" opacity="0.37"/><rect x="36.4" y="133.5" width="4.0" height="1.300" fill="#569cd6" opacity="0.45"/><rect x="41.4" y="133.5" width="4.2" height="1.300" fill="#9cdcfe" opacity="0.57"/><rect x="46.4" y="133.5" width="1.3" height="1.300" fill="#d4d4d4" opacity="0.55"/><rect x="48.6" y="133.5" width="4.7" height="1.300" fill="#6a9955" opacity="0.58"/><rect x="54.2" y="133.5" width="3.0" height="1.300" fill="#4ec9b0" opacity="0.33"/><rect x="58.1" y="133.5" width="5.8" height="1.300" fill="#d4d4d4" opacity="0.45"/><rect x="64.8" y="133.5" width="0.8" height="1.300" fill="#9cdcfe" opacity="0.53"/><rect x="9.3" y="135.3" width="1.5" height="1.300" fill="#c586c0" opacity="0.31"/><rect x="11.7" y="135.3" width="3.8" height="1.300" fill="#6a9955" opacity="0.56"/><rect x="16.4" y="135.3" width="1.4" height="1.300" fill="#6a9955" opacity="0.51"/><rect x="18.8" y="135.3" width="2.5" height="1.300" fill="#ce9178" opacity="0.31"/><rect x="22.2" y="135.3" width="5.0" height="1.300" fill="#9cdcfe" opacity="0.47"/><rect x="28.1" y="135.3" width="5.7" height="1.300" fill="#d4d4d4" opacity="0.62"/><rect x="34.7" y="135.3" width="1.7" height="1.300" fill="#dcdcaa" opacity="0.31"/><rect x="37.3" y="135.3" width="1.8" height="1.300" fill="#dcdcaa" opacity="0.54"/><rect x="40.0" y="135.3" width="2.4" height="1.300" fill="#d4d4d4" opacity="0.57"/><rect x="43.2" y="135.3" width="0.9" height="1.300" fill="#4ec9b0" opacity="0.59"/><rect x="45.1" y="135.3" width="4.2" height="1.300" fill="#d4d4d4" opacity="0.56"/><rect x="50.2" y="135.3" width="5.4" height="1.300" fill="#ce9178" opacity="0.47"/><rect x="56.6" y="135.3" width="0.8" height="1.300" fill="#569cd6" opacity="0.58"/><rect x="9.3" y="141.3" width="4.9" height="1.300" fill="#569cd6" opacity="0.55"/><rect x="15.0" y="141.3" width="1.4" height="1.300" fill="#ce9178" opacity="0.45"/><rect x="17.4" y="141.3" width="4.6" height="1.300" fill="#569cd6" opacity="0.40"/><rect x="22.8" y="141.3" width="3.5" height="1.300" fill="#6a9955" opacity="0.55"/><rect x="27.2" y="141.3" width="1.2" height="1.300" fill="#569cd6" opacity="0.38"/><rect x="29.3" y="141.3" width="2.1" height="1.300" fill="#9cdcfe" opacity="0.46"/><rect x="32.3" y="141.3" width="3.7" height="1.300" fill="#9cdcfe" opacity="0.44"/><rect x="36.9" y="141.3" width="4.0" height="1.300" fill="#dcdcaa" opacity="0.52"/><rect x="41.8" y="141.3" width="2.7" height="1.300" fill="#6a9955" opacity="0.46"/><rect x="11.5" y="143.1" width="2.0" height="1.300" fill="#9cdcfe" opacity="0.60"/><rect x="14.4" y="143.1" width="5.5" height="1.300" fill="#dcdcaa" opacity="0.57"/><rect x="20.8" y="143.1" width="1.4" height="1.300" fill="#9cdcfe" opacity="0.43"/><rect x="23.0" y="143.1" width="0.8" height="1.300" fill="#dcdcaa" opacity="0.44"/><rect x="13.7" y="144.8" width="1.8" height="1.300" fill="#9cdcfe" opacity="0.55"/><rect x="16.4" y="144.8" width="5.5" height="1.300" fill="#ce9178" opacity="0.60"/><rect x="22.8" y="144.8" width="3.8" height="1.300" fill="#4ec9b0" opacity="0.35"/><rect x="15.9" y="146.6" width="5.5" height="1.300" fill="#4ec9b0" opacity="0.37"/><rect x="22.3" y="146.6" width="5.8" height="1.300" fill="#d4d4d4" opacity="0.58"/><rect x="29.0" y="146.6" width="1.5" height="1.300" fill="#dcdcaa" opacity="0.35"/><rect x="31.4" y="146.6" width="3.0" height="1.300" fill="#d4d4d4" opacity="0.41"/><rect x="35.3" y="146.6" width="1.7" height="1.300" fill="#4ec9b0" opacity="0.33"/><rect x="37.9" y="146.6" width="2.6" height="1.300" fill="#4ec9b0" opacity="0.48"/><rect x="41.4" y="146.6" width="3.0" height="1.300" fill="#569cd6" opacity="0.42"/><rect x="45.3" y="146.6" width="3.4" height="1.300" fill="#c586c0" opacity="0.46"/><rect x="13.7" y="148.4" width="1.0" height="1.300" fill="#c586c0" opacity="0.61"/><rect x="15.6" y="148.4" width="1.2" height="1.300" fill="#c586c0" opacity="0.39"/><rect x="17.6" y="148.4" width="5.6" height="1.300" fill="#ce9178" opacity="0.39"/><rect x="24.1" y="148.4" width="1.3" height="1.300" fill="#d4d4d4" opacity="0.57"/><rect x="26.3" y="148.4" width="0.8" height="1.300" fill="#c586c0" opacity="0.43"/><rect x="15.9" y="150.2" width="3.6" height="1.300" fill="#4ec9b0" opacity="0.52"/><rect x="20.4" y="150.2" width="1.1" height="1.300" fill="#569cd6" opacity="0.56"/><rect x="22.4" y="150.2" width="1.6" height="1.300" fill="#9cdcfe" opacity="0.39"/><rect x="24.9" y="150.2" width="0.8" height="1.300" fill="#9cdcfe" opacity="0.56"/><rect x="26.5" y="150.2" width="1.1" height="1.300" fill="#dcdcaa" opacity="0.32"/><rect x="28.4" y="150.2" width="5.3" height="1.300" fill="#6a9955" opacity="0.30"/><rect x="34.7" y="150.2" width="6.1" height="1.300" fill="#d4d4d4" opacity="0.60"/><rect x="41.7" y="150.2" width="2.1" height="1.300" fill="#ce9178" opacity="0.31"/><rect x="44.6" y="150.2" width="4.2" height="1.300" fill="#9cdcfe" opacity="0.61"/><rect x="13.7" y="152.0" width="2.0" height="1.300" fill="#c586c0" opacity="0.36"/><rect x="16.7" y="152.0" width="2.3" height="1.300" fill="#c586c0" opacity="0.47"/><rect x="19.9" y="152.0" width="1.7" height="1.300" fill="#6a9955" opacity="0.46"/><rect x="22.5" y="152.0" width="1.6" height="1.300" fill="#4ec9b0" opacity="0.56"/><rect x="15.9" y="153.8" width="6.1" height="1.300" fill="#569cd6" opacity="0.30"/><rect x="22.9" y="153.8" width="4.6" height="1.300" fill="#dcdcaa" opacity="0.46"/><rect x="28.4" y="153.8" width="2.0" height="1.300" fill="#6a9955" opacity="0.33"/><rect x="31.3" y="153.8" width="5.1" height="1.300" fill="#d4d4d4" opacity="0.51"/><rect x="37.3" y="153.8" width="3.6" height="1.300" fill="#d4d4d4" opacity="0.61"/><rect x="41.8" y="153.8" width="2.3" height="1.300" fill="#dcdcaa" opacity="0.61"/><rect x="45.0" y="153.8" width="2.5" height="1.300" fill="#ce9178" opacity="0.43"/><rect x="48.4" y="153.8" width="2.5" height="1.300" fill="#569cd6" opacity="0.57"/><rect x="51.8" y="153.8" width="0.8" height="1.300" fill="#c586c0" opacity="0.44"/><rect x="53.4" y="153.8" width="0.8" height="1.300" fill="#d4d4d4" opacity="0.58"/><rect x="13.7" y="155.5" width="4.3" height="1.300" fill="#9cdcfe" opacity="0.49"/><rect x="18.9" y="155.5" width="4.4" height="1.300" fill="#569cd6" opacity="0.45"/><rect x="24.2" y="155.5" width="1.5" height="1.300" fill="#6a9955" opacity="0.30"/><rect x="26.6" y="155.5" width="0.8" height="1.300" fill="#4ec9b0" opacity="0.61"/><rect x="15.9" y="157.3" width="3.6" height="1.300" fill="#c586c0" opacity="0.31"/><rect x="20.4" y="157.3" width="5.5" height="1.300" fill="#dcdcaa" opacity="0.41"/><rect x="26.8" y="157.3" width="0.8" height="1.300" fill="#d4d4d4" opacity="0.33"/><rect x="28.3" y="157.3" width="2.1" height="1.300" fill="#dcdcaa" opacity="0.38"/><rect x="31.3" y="157.3" width="4.9" height="1.300" fill="#9cdcfe" opacity="0.38"/><rect x="37.1" y="157.3" width="1.1" height="1.300" fill="#d4d4d4" opacity="0.49"/><rect x="39.1" y="157.3" width="2.8" height="1.300" fill="#c586c0" opacity="0.40"/><rect x="42.8" y="157.3" width="1.9" height="1.300" fill="#ce9178" opacity="0.51"/><rect x="45.6" y="157.3" width="3.3" height="1.300" fill="#d4d4d4" opacity="0.54"/><rect x="15.9" y="159.1" width="4.6" height="1.300" fill="#4ec9b0" opacity="0.35"/><rect x="21.4" y="159.1" width="4.6" height="1.300" fill="#ce9178" opacity="0.31"/><rect x="26.9" y="159.1" width="5.2" height="1.300" fill="#d4d4d4" opacity="0.53"/><rect x="33.0" y="159.1" width="5.1" height="1.300" fill="#ce9178" opacity="0.59"/><rect x="38.9" y="159.1" width="4.7" height="1.300" fill="#569cd6" opacity="0.56"/><rect x="44.6" y="159.1" width="3.8" height="1.300" fill="#dcdcaa" opacity="0.33"/><rect x="11.5" y="161.3" width="0.8" height="1.300" fill="#9cdcfe" opacity="0.61"/><rect x="9.3" y="163.5" width="0.8" height="1.300" fill="#4ec9b0" opacity="0.48"/><rect x="9.3" y="167.6" width="4.1" height="1.300" fill="#c586c0" opacity="0.46"/><rect x="14.2" y="167.6" width="0.8" height="1.300" fill="#9cdcfe" opacity="0.54"/><rect x="15.7" y="167.6" width="3.4" height="1.300" fill="#9cdcfe" opacity="0.51"/><rect x="20.0" y="167.6" width="1.0" height="1.300" fill="#6a9955" opacity="0.38"/><rect x="21.9" y="167.6" width="1.0" height="1.300" fill="#c586c0" opacity="0.38"/><rect x="23.8" y="167.6" width="4.8" height="1.300" fill="#dcdcaa" opacity="0.54"/><rect x="29.4" y="167.6" width="6.0" height="1.300" fill="#6a9955" opacity="0.57"/><rect x="36.3" y="167.6" width="1.0" height="1.300" fill="#c586c0" opacity="0.55"/><rect x="38.2" y="167.6" width="4.0" height="1.300" fill="#dcdcaa" opacity="0.32"/><rect x="43.1" y="167.6" width="1.4" height="1.300" fill="#c586c0" opacity="0.51"/><rect x="45.4" y="167.6" width="4.4" height="1.300" fill="#ce9178" opacity="0.30"/><rect x="50.7" y="167.6" width="0.9" height="1.300" fill="#c586c0" opacity="0.61"/><rect x="52.6" y="167.6" width="1.1" height="1.300" fill="#dcdcaa" opacity="0.52"/><rect x="54.6" y="167.6" width="2.2" height="1.300" fill="#c586c0" opacity="0.45"/><rect x="57.7" y="167.6" width="2.3" height="1.300" fill="#9cdcfe" opacity="0.62"/><rect x="11.5" y="169.3" width="3.6" height="1.300" fill="#9cdcfe" opacity="0.61"/><rect x="16.0" y="169.3" width="5.7" height="1.300" fill="#569cd6" opacity="0.39"/><rect x="22.7" y="169.3" width="1.0" height="1.300" fill="#6a9955" opacity="0.62"/><rect x="24.6" y="169.3" width="2.7" height="1.300" fill="#dcdcaa" opacity="0.32"/><rect x="28.2" y="169.3" width="1.1" height="1.300" fill="#c586c0" opacity="0.60"/><rect x="30.2" y="169.3" width="1.3" height="1.300" fill="#c586c0" opacity="0.58"/><rect x="32.4" y="169.3" width="3.1" height="1.300" fill="#dcdcaa" opacity="0.46"/><rect x="13.7" y="171.1" width="5.4" height="1.300" fill="#4ec9b0" opacity="0.31"/><rect x="20.0" y="171.1" width="0.8" height="1.300" fill="#6a9955" opacity="0.52"/><rect x="21.6" y="171.1" width="2.8" height="1.300" fill="#ce9178" opacity="0.43"/><rect x="25.3" y="171.1" width="2.7" height="1.300" fill="#9cdcfe" opacity="0.57"/><rect x="28.9" y="171.1" width="0.8" height="1.300" fill="#4ec9b0" opacity="0.57"/><rect x="30.4" y="171.1" width="1.3" height="1.300" fill="#dcdcaa" opacity="0.53"/><rect x="32.5" y="171.1" width="5.6" height="1.300" fill="#c586c0" opacity="0.38"/><rect x="39.0" y="171.1" width="1.0" height="1.300" fill="#d4d4d4" opacity="0.62"/><rect x="40.8" y="171.1" width="3.8" height="1.300" fill="#4ec9b0" opacity="0.60"/><rect x="45.6" y="171.1" width="4.8" height="1.300" fill="#569cd6" opacity="0.39"/><rect x="51.2" y="171.1" width="0.9" height="1.300" fill="#c586c0" opacity="0.50"/><rect x="53.0" y="171.1" width="1.4" height="1.300" fill="#c586c0" opacity="0.44"/><rect x="55.3" y="171.1" width="2.3" height="1.300" fill="#4ec9b0" opacity="0.55"/><rect x="58.6" y="171.1" width="3.0" height="1.300" fill="#569cd6" opacity="0.56"/><rect x="62.4" y="171.1" width="4.1" height="1.300" fill="#dcdcaa" opacity="0.53"/><rect x="11.5" y="173.1" width="0.8" height="1.300" fill="#4ec9b0" opacity="0.44"/><rect x="11.5" y="174.9" width="4.7" height="1.300" fill="#9cdcfe" opacity="0.46"/><rect x="17.1" y="174.9" width="5.6" height="1.300" fill="#ce9178" opacity="0.35"/><rect x="23.6" y="174.9" width="2.9" height="1.300" fill="#c586c0" opacity="0.40"/><rect x="27.4" y="174.9" width="4.7" height="1.300" fill="#c586c0" opacity="0.43"/><rect x="33.0" y="174.9" width="0.8" height="1.300" fill="#6a9955" opacity="0.48"/><rect x="11.5" y="178.7" width="2.8" height="1.300" fill="#c586c0" opacity="0.51"/><rect x="15.2" y="178.7" width="0.8" height="1.300" fill="#6a9955" opacity="0.48"/><rect x="13.7" y="180.5" width="3.1" height="1.300" fill="#9cdcfe" opacity="0.62"/><rect x="17.7" y="180.5" width="3.1" height="1.300" fill="#ce9178" opacity="0.48"/><rect x="21.7" y="180.5" width="1.9" height="1.300" fill="#ce9178" opacity="0.41"/><rect x="24.5" y="180.5" width="1.1" height="1.300" fill="#dcdcaa" opacity="0.42"/><rect x="26.5" y="180.5" width="5.1" height="1.300" fill="#dcdcaa" opacity="0.58"/><rect x="32.5" y="180.5" width="4.7" height="1.300" fill="#d4d4d4" opacity="0.42"/><rect x="38.1" y="180.5" width="4.7" height="1.300" fill="#dcdcaa" opacity="0.42"/><rect x="43.7" y="180.5" width="2.5" height="1.300" fill="#569cd6" opacity="0.46"/><rect x="47.1" y="180.5" width="3.8" height="1.300" fill="#4ec9b0" opacity="0.34"/><rect x="51.7" y="180.5" width="3.4" height="1.300" fill="#dcdcaa" opacity="0.33"/><rect x="56.0" y="180.5" width="5.5" height="1.300" fill="#d4d4d4" opacity="0.43"/><rect x="62.4" y="180.5" width="3.1" height="1.300" fill="#c586c0" opacity="0.57"/><rect x="66.4" y="180.5" width="5.4" height="1.300" fill="#569cd6" opacity="0.34"/><rect x="72.7" y="180.5" width="0.8" height="1.300" fill="#6a9955" opacity="0.61"/><rect x="15.9" y="182.5" width="3.3" height="1.300" fill="#569cd6" opacity="0.43"/><rect x="20.1" y="182.5" width="5.7" height="1.300" fill="#6a9955" opacity="0.61"/><rect x="26.7" y="182.5" width="0.8" height="1.300" fill="#9cdcfe" opacity="0.37"/><rect x="15.9" y="184.2" width="1.4" height="1.300" fill="#569cd6" opacity="0.60"/><rect x="18.3" y="184.2" width="4.6" height="1.300" fill="#6a9955" opacity="0.33"/><rect x="23.7" y="184.2" width="4.9" height="1.300" fill="#569cd6" opacity="0.55"/><rect x="29.5" y="184.2" width="1.9" height="1.300" fill="#569cd6" opacity="0.51"/><rect x="32.3" y="184.2" width="2.3" height="1.300" fill="#ce9178" opacity="0.50"/><rect x="35.5" y="184.2" width="3.5" height="1.300" fill="#d4d4d4" opacity="0.52"/><rect x="39.9" y="184.2" width="1.2" height="1.300" fill="#9cdcfe" opacity="0.40"/><rect x="42.0" y="184.2" width="5.8" height="1.300" fill="#dcdcaa" opacity="0.42"/><rect x="48.7" y="184.2" width="1.8" height="1.300" fill="#569cd6" opacity="0.30"/><rect x="51.4" y="184.2" width="2.3" height="1.300" fill="#6a9955" opacity="0.39"/><rect x="54.6" y="184.2" width="2.3" height="1.300" fill="#dcdcaa" opacity="0.45"/><rect x="57.8" y="184.2" width="1.9" height="1.300" fill="#dcdcaa" opacity="0.31"/><rect x="60.6" y="184.2" width="1.6" height="1.300" fill="#c586c0" opacity="0.32"/><rect x="15.9" y="186.0" width="1.7" height="1.300" fill="#4ec9b0" opacity="0.33"/><rect x="18.5" y="186.0" width="1.9" height="1.300" fill="#d4d4d4" opacity="0.60"/><rect x="21.3" y="186.0" width="1.8" height="1.300" fill="#569cd6" opacity="0.52"/><rect x="24.0" y="186.0" width="4.6" height="1.300" fill="#4ec9b0" opacity="0.52"/><rect x="29.5" y="186.0" width="1.7" height="1.300" fill="#c586c0" opacity="0.54"/><rect x="32.0" y="186.0" width="3.4" height="1.300" fill="#dcdcaa" opacity="0.46"/><rect x="36.3" y="186.0" width="1.7" height="1.300" fill="#dcdcaa" opacity="0.37"/><rect x="38.9" y="186.0" width="1.8" height="1.300" fill="#c586c0" opacity="0.33"/><rect x="41.6" y="186.0" width="4.0" height="1.300" fill="#ce9178" opacity="0.59"/><rect x="46.6" y="186.0" width="3.3" height="1.300" fill="#569cd6" opacity="0.60"/><rect x="50.7" y="186.0" width="1.4" height="1.300" fill="#d4d4d4" opacity="0.32"/><rect x="53.0" y="186.0" width="0.8" height="1.300" fill="#ce9178" opacity="0.43"/><rect x="54.7" y="186.0" width="4.5" height="1.300" fill="#ce9178" opacity="0.43"/><rect x="60.1" y="186.0" width="0.8" height="1.300" fill="#4ec9b0" opacity="0.53"/><rect x="15.9" y="187.8" width="6.1" height="1.300" fill="#c586c0" opacity="0.41"/><rect x="22.9" y="187.8" width="1.6" height="1.300" fill="#6a9955" opacity="0.31"/><rect x="25.4" y="187.8" width="4.3" height="1.300" fill="#d4d4d4" opacity="0.57"/><rect x="30.6" y="187.8" width="6.0" height="1.300" fill="#6a9955" opacity="0.35"/><rect x="37.5" y="187.8" width="0.8" height="1.300" fill="#c586c0" opacity="0.33"/><rect x="39.0" y="187.8" width="2.9" height="1.300" fill="#9cdcfe" opacity="0.48"/><rect x="42.8" y="187.8" width="4.8" height="1.300" fill="#d4d4d4" opacity="0.41"/><rect x="48.5" y="187.8" width="5.1" height="1.300" fill="#d4d4d4" opacity="0.33"/><rect x="54.5" y="187.8" width="3.2" height="1.300" fill="#dcdcaa" opacity="0.42"/><rect x="13.7" y="189.8" width="0.8" height="1.300" fill="#c586c0" opacity="0.40"/><rect x="13.7" y="191.6" width="4.7" height="1.300" fill="#4ec9b0" opacity="0.31"/><rect x="19.3" y="191.6" width="2.9" height="1.300" fill="#d4d4d4" opacity="0.31"/><rect x="23.0" y="191.6" width="0.8" height="1.300" fill="#9cdcfe" opacity="0.56"/><rect x="24.7" y="191.6" width="0.9" height="1.300" fill="#dcdcaa" opacity="0.54"/><rect x="26.6" y="191.6" width="5.5" height="1.300" fill="#4ec9b0" opacity="0.42"/><rect x="33.0" y="191.6" width="2.4" height="1.300" fill="#569cd6" opacity="0.38"/><rect x="36.3" y="191.6" width="4.5" height="1.300" fill="#4ec9b0" opacity="0.60"/><rect x="41.8" y="191.6" width="0.8" height="1.300" fill="#9cdcfe" opacity="0.31"/><rect x="13.7" y="193.4" width="1.9" height="1.300" fill="#4ec9b0" opacity="0.53"/><rect x="16.5" y="193.4" width="3.2" height="1.300" fill="#d4d4d4" opacity="0.55"/><rect x="20.6" y="193.4" width="5.6" height="1.300" fill="#6a9955" opacity="0.34"/><rect x="27.1" y="193.4" width="3.3" height="1.300" fill="#569cd6" opacity="0.56"/><rect x="31.3" y="193.4" width="4.7" height="1.300" fill="#ce9178" opacity="0.49"/><rect x="36.9" y="193.4" width="2.4" height="1.300" fill="#4ec9b0" opacity="0.45"/><rect x="40.2" y="193.4" width="4.9" height="1.300" fill="#9cdcfe" opacity="0.46"/><rect x="46.0" y="193.4" width="2.8" height="1.300" fill="#ce9178" opacity="0.38"/><rect x="49.6" y="193.4" width="1.0" height="1.300" fill="#569cd6" opacity="0.45"/><rect x="51.5" y="193.4" width="3.6" height="1.300" fill="#ce9178" opacity="0.61"/><rect x="56.0" y="193.4" width="5.5" height="1.300" fill="#9cdcfe" opacity="0.38"/><rect x="62.4" y="193.4" width="1.1" height="1.300" fill="#9cdcfe" opacity="0.43"/><rect x="64.3" y="193.4" width="6.0" height="1.300" fill="#6a9955" opacity="0.36"/><rect x="71.3" y="193.4" width="1.3" height="1.300" fill="#6a9955" opacity="0.50"/><rect x="73.5" y="193.4" width="4.3" height="1.300" fill="#9cdcfe" opacity="0.55"/><rect x="78.7" y="193.4" width="1.3" height="1.300" fill="#c586c0" opacity="0.48"/><rect x="13.7" y="196.9" width="2.7" height="1.300" fill="#9cdcfe" opacity="0.36"/><rect x="17.3" y="196.9" width="2.0" height="1.300" fill="#dcdcaa" opacity="0.38"/><rect x="20.1" y="196.9" width="2.1" height="1.300" fill="#dcdcaa" opacity="0.40"/><rect x="23.2" y="196.9" width="2.8" height="1.300" fill="#dcdcaa" opacity="0.46"/><rect x="26.9" y="196.9" width="1.9" height="1.300" fill="#9cdcfe" opacity="0.51"/><rect x="29.6" y="196.9" width="0.8" height="1.300" fill="#9cdcfe" opacity="0.30"/><rect x="15.9" y="198.7" width="5.5" height="1.300" fill="#c586c0" opacity="0.57"/><rect x="22.3" y="198.7" width="2.1" height="1.300" fill="#569cd6" opacity="0.58"/><rect x="18.2" y="200.5" width="1.9" height="1.300" fill="#569cd6" opacity="0.36"/><rect x="20.9" y="200.5" width="6.0" height="1.300" fill="#dcdcaa" opacity="0.60"/><rect x="27.8" y="200.5" width="2.6" height="1.300" fill="#ce9178" opacity="0.44"/><rect x="31.3" y="200.5" width="2.0" height="1.300" fill="#569cd6" opacity="0.33"/><rect x="34.3" y="200.5" width="3.9" height="1.300" fill="#4ec9b0" opacity="0.37"/><rect x="39.1" y="200.5" width="2.6" height="1.300" fill="#ce9178" opacity="0.31"/><rect x="42.6" y="200.5" width="6.1" height="1.300" fill="#569cd6" opacity="0.49"/><rect x="49.6" y="200.5" width="4.2" height="1.300" fill="#dcdcaa" opacity="0.56"/><rect x="54.7" y="200.5" width="5.1" height="1.300" fill="#d4d4d4" opacity="0.52"/><rect x="60.7" y="200.5" width="1.6" height="1.300" fill="#c586c0" opacity="0.32"/><rect x="63.2" y="200.5" width="0.8" height="1.300" fill="#6a9955" opacity="0.48"/><rect x="64.9" y="200.5" width="0.9" height="1.300" fill="#9cdcfe" opacity="0.55"/><rect x="66.7" y="200.5" width="4.3" height="1.300" fill="#ce9178" opacity="0.50"/><rect x="71.9" y="200.5" width="1.1" height="1.300" fill="#ce9178" opacity="0.43"/><rect x="73.9" y="200.5" width="2.1" height="1.300" fill="#c586c0" opacity="0.51"/><rect x="76.9" y="200.5" width="2.9" height="1.300" fill="#569cd6" opacity="0.40"/><rect x="15.9" y="202.3" width="0.8" height="1.300" fill="#9cdcfe" opacity="0.43"/><rect x="11.5" y="205.8" width="0.8" height="1.300" fill="#9cdcfe" opacity="0.51"/><rect x="13.1" y="205.8" width="2.7" height="1.300" fill="#d4d4d4" opacity="0.37"/><rect x="16.7" y="205.8" width="0.8" height="1.300" fill="#ce9178" opacity="0.44"/><rect x="18.3" y="205.8" width="2.8" height="1.300" fill="#d4d4d4" opacity="0.48"/><rect x="13.7" y="207.6" width="2.6" height="1.300" fill="#c586c0" opacity="0.34"/><rect x="17.2" y="207.6" width="0.9" height="1.300" fill="#ce9178" opacity="0.51"/><rect x="19.0" y="207.6" width="5.6" height="1.300" fill="#9cdcfe" opacity="0.48"/><rect x="25.5" y="207.6" width="5.7" height="1.300" fill="#ce9178" opacity="0.35"/><rect x="32.1" y="207.6" width="2.2" height="1.300" fill="#ce9178" opacity="0.60"/><rect x="35.2" y="207.6" width="1.2" height="1.300" fill="#6a9955" opacity="0.54"/><rect x="37.3" y="207.6" width="5.0" height="1.300" fill="#dcdcaa" opacity="0.40"/><rect x="43.1" y="207.6" width="5.2" height="1.300" fill="#569cd6" opacity="0.61"/><rect x="49.2" y="207.6" width="3.3" height="1.300" fill="#569cd6" opacity="0.49"/><rect x="53.4" y="207.6" width="4.1" height="1.300" fill="#9cdcfe" opacity="0.59"/><rect x="58.4" y="207.6" width="4.0" height="1.300" fill="#ce9178" opacity="0.50"/><rect x="63.3" y="207.6" width="1.2" height="1.300" fill="#d4d4d4" opacity="0.50"/><rect x="13.7" y="209.4" width="1.7" height="1.300" fill="#4ec9b0" opacity="0.36"/><rect x="16.3" y="209.4" width="1.8" height="1.300" fill="#d4d4d4" opacity="0.60"/><rect x="19.0" y="209.4" width="1.5" height="1.300" fill="#4ec9b0" opacity="0.34"/><rect x="21.4" y="209.4" width="2.0" height="1.300" fill="#dcdcaa" opacity="0.31"/><rect x="24.2" y="209.4" width="3.7" height="1.300" fill="#569cd6" opacity="0.51"/><rect x="28.8" y="209.4" width="2.4" height="1.300" fill="#d4d4d4" opacity="0.49"/><rect x="32.1" y="209.4" width="3.6" height="1.300" fill="#c586c0" opacity="0.51"/><rect x="36.6" y="209.4" width="2.3" height="1.300" fill="#dcdcaa" opacity="0.44"/><rect x="39.8" y="209.4" width="4.2" height="1.300" fill="#6a9955" opacity="0.46"/><rect x="44.9" y="209.4" width="1.6" height="1.300" fill="#569cd6" opacity="0.50"/><rect x="47.4" y="209.4" width="2.6" height="1.300" fill="#dcdcaa" opacity="0.44"/><rect x="11.5" y="211.2" width="0.8" height="1.300" fill="#4ec9b0" opacity="0.57"/><rect x="9.3" y="213.0" width="0.8" height="1.300" fill="#4ec9b0" opacity="0.33"/><rect x="9.3" y="219.2" width="1.3" height="1.300" fill="#4ec9b0" opacity="0.42"/><rect x="11.5" y="219.2" width="4.0" height="1.300" fill="#569cd6" opacity="0.31"/><rect x="11.5" y="221.0" width="1.3" height="1.300" fill="#9cdcfe" opacity="0.55"/><rect x="13.7" y="221.0" width="3.4" height="1.300" fill="#569cd6" opacity="0.54"/><rect x="18.0" y="221.0" width="5.5" height="1.300" fill="#ce9178" opacity="0.31"/><rect x="24.4" y="221.0" width="1.0" height="1.300" fill="#9cdcfe" opacity="0.36"/><rect x="26.3" y="221.0" width="6.0" height="1.300" fill="#6a9955" opacity="0.39"/><rect x="33.2" y="221.0" width="5.1" height="1.300" fill="#ce9178" opacity="0.52"/><rect x="39.2" y="221.0" width="4.6" height="1.300" fill="#dcdcaa" opacity="0.32"/><rect x="44.6" y="221.0" width="2.5" height="1.300" fill="#c586c0" opacity="0.35"/><rect x="48.1" y="221.0" width="5.5" height="1.300" fill="#c586c0" opacity="0.59"/><rect x="54.5" y="221.0" width="3.1" height="1.300" fill="#c586c0" opacity="0.46"/><rect x="58.5" y="221.0" width="5.7" height="1.300" fill="#dcdcaa" opacity="0.49"/><rect x="65.1" y="221.0" width="4.0" height="1.300" fill="#dcdcaa" opacity="0.40"/><rect x="69.9" y="221.0" width="0.8" height="1.300" fill="#ce9178" opacity="0.43"/><rect x="71.7" y="221.0" width="3.9" height="1.300" fill="#c586c0" opacity="0.52"/><rect x="13.7" y="222.7" width="5.5" height="1.300" fill="#c586c0" opacity="0.55"/><rect x="20.1" y="222.7" width="2.1" height="1.300" fill="#569cd6" opacity="0.50"/><rect x="23.1" y="222.7" width="1.3" height="1.300" fill="#6a9955" opacity="0.48"/><rect x="15.9" y="224.5" width="3.8" height="1.300" fill="#569cd6" opacity="0.38"/><rect x="20.6" y="224.5" width="3.5" height="1.300" fill="#d4d4d4" opacity="0.54"/><rect x="25.1" y="224.5" width="2.6" height="1.300" fill="#d4d4d4" opacity="0.62"/><rect x="28.6" y="224.5" width="3.8" height="1.300" fill="#4ec9b0" opacity="0.41"/><rect x="33.3" y="224.5" width="1.0" height="1.300" fill="#dcdcaa" opacity="0.36"/><rect x="35.2" y="224.5" width="4.7" height="1.300" fill="#569cd6" opacity="0.39"/><rect x="40.8" y="224.5" width="3.4" height="1.300" fill="#c586c0" opacity="0.50"/><rect x="45.2" y="224.5" width="6.0" height="1.300" fill="#4ec9b0" opacity="0.53"/><rect x="52.1" y="224.5" width="4.7" height="1.300" fill="#dcdcaa" opacity="0.35"/><rect x="57.7" y="224.5" width="4.0" height="1.300" fill="#d4d4d4" opacity="0.43"/><rect x="62.6" y="224.5" width="2.6" height="1.300" fill="#569cd6" opacity="0.34"/><rect x="66.1" y="224.5" width="1.8" height="1.300" fill="#569cd6" opacity="0.31"/><rect x="68.8" y="224.5" width="0.8" height="1.300" fill="#4ec9b0" opacity="0.40"/><rect x="70.3" y="224.5" width="3.5" height="1.300" fill="#dcdcaa" opacity="0.43"/><rect x="74.7" y="224.5" width="0.9" height="1.300" fill="#ce9178" opacity="0.37"/><rect x="15.9" y="226.3" width="4.0" height="1.300" fill="#4ec9b0" opacity="0.35"/><rect x="20.9" y="226.3" width="0.8" height="1.300" fill="#dcdcaa" opacity="0.53"/><rect x="22.4" y="226.3" width="3.1" height="1.300" fill="#9cdcfe" opacity="0.50"/><rect x="26.4" y="226.3" width="5.4" height="1.300" fill="#c586c0" opacity="0.43"/><rect x="32.7" y="226.3" width="2.1" height="1.300" fill="#569cd6" opacity="0.32"/><rect x="35.7" y="226.3" width="5.1" height="1.300" fill="#4ec9b0" opacity="0.49"/><rect x="41.7" y="226.3" width="3.8" height="1.300" fill="#6a9955" opacity="0.38"/><rect x="46.4" y="226.3" width="5.6" height="1.300" fill="#569cd6" opacity="0.32"/><rect x="52.8" y="226.3" width="0.8" height="1.300" fill="#ce9178" opacity="0.38"/><rect x="54.5" y="226.3" width="0.9" height="1.300" fill="#9cdcfe" opacity="0.30"/><rect x="56.3" y="226.3" width="3.6" height="1.300" fill="#dcdcaa" opacity="0.35"/><rect x="60.8" y="226.3" width="1.7" height="1.300" fill="#d4d4d4" opacity="0.56"/><rect x="63.4" y="226.3" width="1.6" height="1.300" fill="#c586c0" opacity="0.32"/><rect x="65.9" y="226.3" width="4.0" height="1.300" fill="#6a9955" opacity="0.53"/><rect x="70.8" y="226.3" width="0.8" height="1.300" fill="#d4d4d4" opacity="0.54"/><rect x="72.4" y="226.3" width="3.2" height="1.300" fill="#6a9955" opacity="0.36"/><rect x="76.4" y="226.3" width="2.5" height="1.300" fill="#c586c0" opacity="0.37"/><rect x="15.9" y="228.1" width="0.8" height="1.300" fill="#9cdcfe" opacity="0.59"/><rect x="17.7" y="228.1" width="5.7" height="1.300" fill="#c586c0" opacity="0.53"/><rect x="24.2" y="228.1" width="2.1" height="1.300" fill="#d4d4d4" opacity="0.52"/><rect x="27.2" y="228.1" width="5.6" height="1.300" fill="#c586c0" opacity="0.39"/><rect x="33.8" y="228.1" width="5.7" height="1.300" fill="#dcdcaa" opacity="0.33"/><rect x="40.4" y="228.1" width="3.4" height="1.300" fill="#ce9178" opacity="0.38"/><rect x="44.6" y="228.1" width="1.9" height="1.300" fill="#dcdcaa" opacity="0.60"/><rect x="47.4" y="228.1" width="4.7" height="1.300" fill="#4ec9b0" opacity="0.36"/><rect x="53.1" y="228.1" width="2.7" height="1.300" fill="#dcdcaa" opacity="0.42"/><rect x="56.7" y="228.1" width="5.3" height="1.300" fill="#6a9955" opacity="0.45"/><rect x="62.9" y="228.1" width="3.5" height="1.300" fill="#569cd6" opacity="0.57"/><rect x="67.3" y="228.1" width="3.0" height="1.300" fill="#dcdcaa" opacity="0.48"/><rect x="71.2" y="228.1" width="2.3" height="1.300" fill="#dcdcaa" opacity="0.43"/><rect x="74.4" y="228.1" width="3.4" height="1.300" fill="#ce9178" opacity="0.35"/><rect x="13.7" y="229.9" width="0.8" height="1.300" fill="#569cd6" opacity="0.50"/><rect x="15.4" y="229.9" width="1.5" height="1.300" fill="#ce9178" opacity="0.52"/><rect x="17.8" y="229.9" width="0.8" height="1.300" fill="#ce9178" opacity="0.52"/><rect x="19.4" y="229.9" width="4.1" height="1.300" fill="#9cdcfe" opacity="0.54"/><rect x="24.4" y="229.9" width="0.8" height="1.300" fill="#4ec9b0" opacity="0.36"/><rect x="13.7" y="231.7" width="5.9" height="1.300" fill="#569cd6" opacity="0.58"/><rect x="20.5" y="231.7" width="4.8" height="1.300" fill="#d4d4d4" opacity="0.33"/><rect x="26.1" y="231.7" width="0.8" height="1.300" fill="#9cdcfe" opacity="0.31"/><rect x="15.9" y="233.4" width="5.8" height="1.300" fill="#569cd6" opacity="0.56"/><rect x="22.7" y="233.4" width="4.1" height="1.300" fill="#c586c0" opacity="0.45"/><rect x="27.6" y="233.4" width="1.3" height="1.300" fill="#dcdcaa" opacity="0.39"/><rect x="29.9" y="233.4" width="2.5" height="1.300" fill="#c586c0" opacity="0.31"/><rect x="33.2" y="233.4" width="2.0" height="1.300" fill="#c586c0" opacity="0.32"/><rect x="36.1" y="233.4" width="3.8" height="1.300" fill="#4ec9b0" opacity="0.55"/><rect x="18.2" y="235.2" width="3.9" height="1.300" fill="#4ec9b0" opacity="0.57"/><rect x="23.0" y="235.2" width="4.0" height="1.300" fill="#569cd6" opacity="0.55"/><rect x="27.9" y="235.2" width="0.8" height="1.300" fill="#9cdcfe" opacity="0.41"/><rect x="29.5" y="235.2" width="4.5" height="1.300" fill="#dcdcaa" opacity="0.53"/><rect x="34.9" y="235.2" width="5.2" height="1.300" fill="#c586c0" opacity="0.35"/><rect x="41.0" y="235.2" width="0.8" height="1.300" fill="#dcdcaa" opacity="0.39"/><rect x="42.5" y="235.2" width="4.2" height="1.300" fill="#569cd6" opacity="0.30"/><rect x="18.2" y="237.0" width="3.3" height="1.300" fill="#4ec9b0" opacity="0.52"/><rect x="22.4" y="237.0" width="5.1" height="1.300" fill="#6a9955" opacity="0.49"/><rect x="28.4" y="237.0" width="5.9" height="1.300" fill="#c586c0" opacity="0.48"/><rect x="35.2" y="237.0" width="1.5" height="1.300" fill="#dcdcaa" opacity="0.60"/><rect x="37.5" y="237.0" width="0.8" height="1.300" fill="#ce9178" opacity="0.34"/><rect x="20.4" y="238.8" width="2.9" height="1.300" fill="#569cd6" opacity="0.46"/><rect x="22.6" y="240.6" width="6.1" height="1.300" fill="#569cd6" opacity="0.50"/><rect x="29.6" y="240.6" width="2.6" height="1.300" fill="#d4d4d4" opacity="0.60"/><rect x="33.0" y="240.6" width="4.7" height="1.300" fill="#9cdcfe" opacity="0.44"/><rect x="22.6" y="242.3" width="4.2" height="1.300" fill="#9cdcfe" opacity="0.37"/><rect x="27.7" y="242.3" width="2.0" height="1.300" fill="#ce9178" opacity="0.42"/><rect x="30.6" y="242.3" width="5.5" height="1.300" fill="#dcdcaa" opacity="0.60"/><rect x="37.0" y="242.3" width="1.3" height="1.300" fill="#569cd6" opacity="0.41"/><rect x="39.2" y="242.3" width="2.4" height="1.300" fill="#ce9178" opacity="0.58"/><rect x="42.5" y="242.3" width="3.1" height="1.300" fill="#4ec9b0" opacity="0.35"/><rect x="46.5" y="242.3" width="3.0" height="1.300" fill="#c586c0" opacity="0.49"/><rect x="50.4" y="242.3" width="1.3" height="1.300" fill="#6a9955" opacity="0.51"/><rect x="52.6" y="242.3" width="4.4" height="1.300" fill="#dcdcaa" opacity="0.39"/><rect x="57.9" y="242.3" width="4.8" height="1.300" fill="#ce9178" opacity="0.53"/><rect x="63.5" y="242.3" width="6.0" height="1.300" fill="#4ec9b0" opacity="0.49"/><rect x="70.4" y="242.3" width="2.5" height="1.300" fill="#dcdcaa" opacity="0.40"/><rect x="73.8" y="242.3" width="1.6" height="1.300" fill="#9cdcfe" opacity="0.35"/><rect x="76.4" y="242.3" width="4.2" height="1.300" fill="#dcdcaa" opacity="0.42"/><rect x="81.5" y="242.3" width="6.0" height="1.300" fill="#c586c0" opacity="0.53"/><rect x="88.4" y="242.3" width="2.8" height="1.300" fill="#dcdcaa" opacity="0.33"/><rect x="20.4" y="244.1" width="0.8" height="1.300" fill="#9cdcfe" opacity="0.37"/><rect x="20.4" y="246.3" width="2.7" height="1.300" fill="#569cd6" opacity="0.30"/><rect x="24.0" y="246.3" width="5.3" height="1.300" fill="#d4d4d4" opacity="0.52"/><rect x="30.2" y="246.3" width="3.4" height="1.300" fill="#c586c0" opacity="0.45"/><rect x="34.5" y="246.3" width="1.4" height="1.300" fill="#d4d4d4" opacity="0.30"/><rect x="36.8" y="246.3" width="1.9" height="1.300" fill="#d4d4d4" opacity="0.52"/><rect x="39.6" y="246.3" width="3.8" height="1.300" fill="#d4d4d4" opacity="0.57"/><rect x="44.3" y="246.3" width="4.3" height="1.300" fill="#dcdcaa" opacity="0.52"/><rect x="49.5" y="246.3" width="0.8" height="1.300" fill="#6a9955" opacity="0.44"/><rect x="22.6" y="248.1" width="2.0" height="1.300" fill="#569cd6" opacity="0.59"/><rect x="25.5" y="248.1" width="1.9" height="1.300" fill="#d4d4d4" opacity="0.53"/><rect x="28.4" y="248.1" width="4.1" height="1.300" fill="#c586c0" opacity="0.57"/><rect x="33.3" y="248.1" width="3.3" height="1.300" fill="#569cd6" opacity="0.50"/><rect x="37.5" y="248.1" width="2.9" height="1.300" fill="#ce9178" opacity="0.59"/><rect x="41.2" y="248.1" width="2.4" height="1.300" fill="#569cd6" opacity="0.42"/><rect x="44.6" y="248.1" width="3.3" height="1.300" fill="#9cdcfe" opacity="0.31"/><rect x="48.7" y="248.1" width="3.6" height="1.300" fill="#ce9178" opacity="0.53"/><rect x="53.2" y="248.1" width="2.3" height="1.300" fill="#dcdcaa" opacity="0.47"/><rect x="24.8" y="249.9" width="1.2" height="1.300" fill="#4ec9b0" opacity="0.47"/><rect x="26.9" y="249.9" width="4.5" height="1.300" fill="#569cd6" opacity="0.50"/><rect x="32.3" y="249.9" width="5.2" height="1.300" fill="#4ec9b0" opacity="0.43"/><rect x="38.4" y="249.9" width="5.8" height="1.300" fill="#dcdcaa" opacity="0.62"/><rect x="45.1" y="249.9" width="1.6" height="1.300" fill="#9cdcfe" opacity="0.53"/><rect x="47.6" y="249.9" width="4.0" height="1.300" fill="#569cd6" opacity="0.38"/><rect x="52.5" y="249.9" width="2.7" height="1.300" fill="#569cd6" opacity="0.30"/><rect x="56.1" y="249.9" width="2.9" height="1.300" fill="#d4d4d4" opacity="0.50"/><rect x="59.9" y="249.9" width="4.3" height="1.300" fill="#c586c0" opacity="0.33"/><rect x="65.1" y="249.9" width="2.3" height="1.300" fill="#d4d4d4" opacity="0.60"/><rect x="68.3" y="249.9" width="0.8" height="1.300" fill="#dcdcaa" opacity="0.62"/><rect x="24.8" y="251.7" width="5.9" height="1.300" fill="#4ec9b0" opacity="0.37"/><rect x="31.6" y="251.7" width="1.3" height="1.300" fill="#9cdcfe" opacity="0.56"/><rect x="33.8" y="251.7" width="4.1" height="1.300" fill="#6a9955" opacity="0.51"/><rect x="38.8" y="251.7" width="4.6" height="1.300" fill="#ce9178" opacity="0.41"/><rect x="44.3" y="251.7" width="4.1" height="1.300" fill="#d4d4d4" opacity="0.45"/><rect x="49.3" y="251.7" width="2.2" height="1.300" fill="#ce9178" opacity="0.55"/><rect x="52.4" y="251.7" width="3.2" height="1.300" fill="#dcdcaa" opacity="0.39"/><rect x="56.5" y="251.7" width="2.7" height="1.300" fill="#c586c0" opacity="0.61"/><rect x="60.1" y="251.7" width="4.3" height="1.300" fill="#6a9955" opacity="0.30"/><rect x="65.3" y="251.7" width="3.6" height="1.300" fill="#c586c0" opacity="0.41"/><rect x="24.8" y="253.5" width="4.2" height="1.300" fill="#9cdcfe" opacity="0.45"/><rect x="29.9" y="253.5" width="0.8" height="1.300" fill="#9cdcfe" opacity="0.51"/><rect x="22.6" y="255.2" width="2.6" height="1.300" fill="#9cdcfe" opacity="0.57"/><rect x="20.4" y="257.0" width="0.9" height="1.300" fill="#9cdcfe" opacity="0.55"/><rect x="22.2" y="257.0" width="1.4" height="1.300" fill="#4ec9b0" opacity="0.50"/><rect x="24.5" y="257.0" width="0.8" height="1.300" fill="#569cd6" opacity="0.37"/><rect x="20.4" y="260.6" width="1.0" height="1.300" fill="#9cdcfe" opacity="0.38"/><rect x="22.3" y="260.6" width="1.2" height="1.300" fill="#ce9178" opacity="0.57"/><rect x="24.3" y="260.6" width="1.6" height="1.300" fill="#6a9955" opacity="0.41"/><rect x="26.9" y="260.6" width="1.4" height="1.300" fill="#d4d4d4" opacity="0.55"/><rect x="29.2" y="260.6" width="1.5" height="1.300" fill="#9cdcfe" opacity="0.51"/><rect x="31.6" y="260.6" width="5.0" height="1.300" fill="#c586c0" opacity="0.36"/><rect x="22.6" y="262.4" width="4.4" height="1.300" fill="#569cd6" opacity="0.54"/><rect x="27.9" y="262.4" width="3.0" height="1.300" fill="#9cdcfe" opacity="0.48"/><rect x="31.8" y="262.4" width="2.1" height="1.300" fill="#dcdcaa" opacity="0.56"/><rect x="34.8" y="262.4" width="3.2" height="1.300" fill="#569cd6" opacity="0.45"/><rect x="38.9" y="262.4" width="3.3" height="1.300" fill="#6a9955" opacity="0.38"/><rect x="24.8" y="264.1" width="1.5" height="1.300" fill="#569cd6" opacity="0.35"/><rect x="27.2" y="264.1" width="2.4" height="1.300" fill="#6a9955" opacity="0.51"/><rect x="30.5" y="264.1" width="5.2" height="1.300" fill="#4ec9b0" opacity="0.44"/><rect x="36.6" y="264.1" width="6.1" height="1.300" fill="#9cdcfe" opacity="0.36"/><rect x="43.6" y="264.1" width="2.6" height="1.300" fill="#569cd6" opacity="0.31"/><rect x="47.1" y="264.1" width="0.9" height="1.300" fill="#4ec9b0" opacity="0.56"/><rect x="48.9" y="264.1" width="1.1" height="1.300" fill="#6a9955" opacity="0.46"/><rect x="50.9" y="264.1" width="5.5" height="1.300" fill="#569cd6" opacity="0.37"/><rect x="57.3" y="264.1" width="2.9" height="1.300" fill="#ce9178" opacity="0.41"/><rect x="61.1" y="264.1" width="5.3" height="1.300" fill="#4ec9b0" opacity="0.41"/><rect x="67.3" y="264.1" width="4.9" height="1.300" fill="#dcdcaa" opacity="0.39"/><rect x="73.1" y="264.1" width="2.5" height="1.300" fill="#c586c0" opacity="0.48"/><rect x="76.5" y="264.1" width="5.1" height="1.300" fill="#c586c0" opacity="0.41"/><rect x="82.6" y="264.1" width="1.9" height="1.300" fill="#4ec9b0" opacity="0.46"/><rect x="24.8" y="265.9" width="2.1" height="1.300" fill="#9cdcfe" opacity="0.61"/><rect x="27.8" y="265.9" width="4.2" height="1.300" fill="#9cdcfe" opacity="0.41"/><rect x="32.9" y="265.9" width="2.3" height="1.300" fill="#c586c0" opacity="0.34"/><rect x="36.2" y="265.9" width="6.0" height="1.300" fill="#9cdcfe" opacity="0.55"/><rect x="43.0" y="265.9" width="0.8" height="1.300" fill="#d4d4d4" opacity="0.47"/><rect x="44.8" y="265.9" width="0.9" height="1.300" fill="#c586c0" opacity="0.33"/><rect x="46.5" y="265.9" width="0.9" height="1.300" fill="#6a9955" opacity="0.49"/><rect x="48.3" y="265.9" width="4.2" height="1.300" fill="#d4d4d4" opacity="0.50"/><rect x="53.4" y="265.9" width="4.0" height="1.300" fill="#9cdcfe" opacity="0.37"/><rect x="58.3" y="265.9" width="0.8" height="1.300" fill="#6a9955" opacity="0.50"/><rect x="24.8" y="268.2" width="1.6" height="1.300" fill="#c586c0" opacity="0.58"/><rect x="27.3" y="268.2" width="2.9" height="1.300" fill="#9cdcfe" opacity="0.59"/><rect x="31.1" y="268.2" width="4.2" height="1.300" fill="#4ec9b0" opacity="0.58"/><rect x="36.2" y="268.2" width="1.4" height="1.300" fill="#c586c0" opacity="0.48"/><rect x="38.5" y="268.2" width="2.0" height="1.300" fill="#c586c0" opacity="0.36"/><rect x="41.4" y="268.2" width="0.8" height="1.300" fill="#569cd6" opacity="0.44"/><rect x="43.1" y="268.2" width="4.1" height="1.300" fill="#569cd6" opacity="0.46"/><rect x="48.1" y="268.2" width="3.5" height="1.300" fill="#9cdcfe" opacity="0.55"/><rect x="52.5" y="268.2" width="2.9" height="1.300" fill="#d4d4d4" opacity="0.44"/><rect x="56.3" y="268.2" width="0.8" height="1.300" fill="#d4d4d4" opacity="0.49"/><rect x="57.9" y="268.2" width="6.1" height="1.300" fill="#ce9178" opacity="0.45"/><rect x="64.9" y="268.2" width="2.9" height="1.300" fill="#9cdcfe" opacity="0.33"/><rect x="68.6" y="268.2" width="0.8" height="1.300" fill="#ce9178" opacity="0.50"/><rect x="24.8" y="271.7" width="1.8" height="1.300" fill="#569cd6" opacity="0.52"/><rect x="24.8" y="273.5" width="1.3" height="1.300" fill="#569cd6" opacity="0.37"/><rect x="27.0" y="273.5" width="1.3" height="1.300" fill="#6a9955" opacity="0.31"/><rect x="29.2" y="273.5" width="4.6" height="1.300" fill="#dcdcaa" opacity="0.44"/><rect x="34.6" y="273.5" width="4.7" height="1.300" fill="#569cd6" opacity="0.42"/><rect x="40.2" y="273.5" width="4.7" height="1.300" fill="#ce9178" opacity="0.53"/><rect x="45.8" y="273.5" width="1.1" height="1.300" fill="#6a9955" opacity="0.45"/><rect x="47.8" y="273.5" width="5.7" height="1.300" fill="#c586c0" opacity="0.59"/><rect x="54.4" y="273.5" width="0.9" height="1.300" fill="#569cd6" opacity="0.30"/><rect x="56.2" y="273.5" width="0.8" height="1.300" fill="#9cdcfe" opacity="0.42"/><rect x="57.8" y="273.5" width="1.1" height="1.300" fill="#ce9178" opacity="0.61"/><rect x="27.1" y="275.3" width="5.2" height="1.300" fill="#569cd6" opacity="0.40"/><rect x="33.2" y="275.3" width="5.8" height="1.300" fill="#6a9955" opacity="0.45"/><rect x="39.9" y="275.3" width="1.5" height="1.300" fill="#9cdcfe" opacity="0.42"/><rect x="42.3" y="275.3" width="4.1" height="1.300" fill="#d4d4d4" opacity="0.45"/><rect x="47.3" y="275.3" width="4.9" height="1.300" fill="#6a9955" opacity="0.60"/><rect x="53.1" y="275.3" width="4.9" height="1.300" fill="#4ec9b0" opacity="0.39"/><rect x="58.9" y="275.3" width="0.9" height="1.300" fill="#4ec9b0" opacity="0.58"/><rect x="60.8" y="275.3" width="4.6" height="1.300" fill="#569cd6" opacity="0.57"/><rect x="66.3" y="275.3" width="1.5" height="1.300" fill="#c586c0" opacity="0.49"/><rect x="24.8" y="277.1" width="1.8" height="1.300" fill="#c586c0" opacity="0.42"/><rect x="22.6" y="278.8" width="2.9" height="1.300" fill="#c586c0" opacity="0.56"/><rect x="20.4" y="283.3" width="2.2" height="1.300" fill="#569cd6" opacity="0.40"/><rect x="23.4" y="283.3" width="2.1" height="1.300" fill="#ce9178" opacity="0.49"/><rect x="26.4" y="283.3" width="5.1" height="1.300" fill="#569cd6" opacity="0.39"/><rect x="32.4" y="283.3" width="1.4" height="1.300" fill="#ce9178" opacity="0.39"/><rect x="34.7" y="283.3" width="5.3" height="1.300" fill="#6a9955" opacity="0.41"/><rect x="40.9" y="283.3" width="1.1" height="1.300" fill="#6a9955" opacity="0.56"/><rect x="42.8" y="283.3" width="1.7" height="1.300" fill="#dcdcaa" opacity="0.40"/><rect x="45.4" y="283.3" width="0.9" height="1.300" fill="#d4d4d4" opacity="0.45"/><rect x="47.3" y="283.3" width="1.6" height="1.300" fill="#c586c0" opacity="0.49"/><rect x="20.4" y="286.0" width="0.8" height="1.300" fill="#4ec9b0" opacity="0.45"/><rect x="21.9" y="286.0" width="1.1" height="1.300" fill="#4ec9b0" opacity="0.55"/><rect x="23.9" y="286.0" width="1.9" height="1.300" fill="#c586c0" opacity="0.58"/><rect x="26.7" y="286.0" width="3.5" height="1.300" fill="#6a9955" opacity="0.46"/><rect x="31.1" y="286.0" width="1.7" height="1.300" fill="#dcdcaa" opacity="0.36"/><rect x="33.7" y="286.0" width="1.6" height="1.300" fill="#c586c0" opacity="0.42"/><rect x="36.2" y="286.0" width="3.7" height="1.300" fill="#d4d4d4" opacity="0.55"/><rect x="40.8" y="286.0" width="5.3" height="1.300" fill="#dcdcaa" opacity="0.31"/><rect x="47.0" y="286.0" width="6.1" height="1.300" fill="#4ec9b0" opacity="0.58"/><rect x="54.0" y="286.0" width="2.6" height="1.300" fill="#6a9955" opacity="0.55"/><rect x="57.5" y="286.0" width="1.5" height="1.300" fill="#569cd6" opacity="0.41"/><rect x="59.9" y="286.0" width="3.5" height="1.300" fill="#569cd6" opacity="0.33"/><rect x="64.2" y="286.0" width="1.7" height="1.300" fill="#6a9955" opacity="0.49"/><rect x="66.9" y="286.0" width="1.8" height="1.300" fill="#c586c0" opacity="0.44"/><rect x="69.5" y="286.0" width="5.8" height="1.300" fill="#ce9178" opacity="0.38"/><rect x="76.2" y="286.0" width="0.8" height="1.300" fill="#dcdcaa" opacity="0.62"/><rect x="78.0" y="286.0" width="2.7" height="1.300" fill="#569cd6" opacity="0.32"/><rect x="81.5" y="286.0" width="2.9" height="1.300" fill="#6a9955" opacity="0.46"/><rect x="24.8" y="287.7" width="0.8" height="1.300" fill="#569cd6" opacity="0.58"/><rect x="27.1" y="289.5" width="4.1" height="1.300" fill="#569cd6" opacity="0.53"/><rect x="32.1" y="289.5" width="0.8" height="1.300" fill="#4ec9b0" opacity="0.48"/><rect x="29.3" y="291.3" width="4.1" height="1.300" fill="#4ec9b0" opacity="0.36"/><rect x="34.3" y="291.3" width="5.3" height="1.300" fill="#4ec9b0" opacity="0.61"/><rect x="40.5" y="291.3" width="6.1" height="1.300" fill="#dcdcaa" opacity="0.36"/><rect x="47.4" y="291.3" width="5.8" height="1.300" fill="#4ec9b0" opacity="0.32"/><rect x="54.1" y="291.3" width="3.6" height="1.300" fill="#569cd6" opacity="0.57"/><rect x="58.7" y="291.3" width="0.9" height="1.300" fill="#6a9955" opacity="0.32"/><rect x="60.4" y="291.3" width="1.4" height="1.300" fill="#569cd6" opacity="0.60"/><rect x="62.7" y="291.3" width="4.3" height="1.300" fill="#c586c0" opacity="0.49"/><rect x="67.9" y="291.3" width="3.0" height="1.300" fill="#9cdcfe" opacity="0.45"/><rect x="71.9" y="291.3" width="2.6" height="1.300" fill="#d4d4d4" opacity="0.34"/><rect x="75.4" y="291.3" width="3.2" height="1.300" fill="#ce9178" opacity="0.44"/><rect x="79.6" y="291.3" width="5.0" height="1.300" fill="#569cd6" opacity="0.45"/><rect x="85.5" y="291.3" width="5.6" height="1.300" fill="#569cd6" opacity="0.35"/><rect x="92.0" y="291.3" width="1.4" height="1.300" fill="#9cdcfe" opacity="0.60"/><rect x="29.3" y="293.1" width="5.4" height="1.300" fill="#c586c0" opacity="0.55"/><rect x="35.6" y="293.1" width="5.9" height="1.300" fill="#d4d4d4" opacity="0.57"/><rect x="42.3" y="293.1" width="4.1" height="1.300" fill="#6a9955" opacity="0.61"/><rect x="47.3" y="293.1" width="2.4" height="1.300" fill="#dcdcaa" opacity="0.45"/><rect x="50.6" y="293.1" width="4.1" height="1.300" fill="#ce9178" opacity="0.41"/><rect x="55.5" y="293.1" width="4.6" height="1.300" fill="#ce9178" opacity="0.53"/><rect x="61.1" y="293.1" width="3.6" height="1.300" fill="#ce9178" opacity="0.44"/><rect x="65.6" y="293.1" width="1.4" height="1.300" fill="#d4d4d4" opacity="0.43"/><rect x="67.9" y="293.1" width="1.5" height="1.300" fill="#c586c0" opacity="0.48"/><rect x="70.3" y="293.1" width="2.2" height="1.300" fill="#ce9178" opacity="0.38"/><rect x="73.4" y="293.1" width="1.2" height="1.300" fill="#6a9955" opacity="0.59"/><rect x="75.5" y="293.1" width="1.2" height="1.300" fill="#569cd6" opacity="0.50"/><rect x="77.6" y="293.1" width="4.9" height="1.300" fill="#dcdcaa" opacity="0.48"/><rect x="83.5" y="293.1" width="1.0" height="1.300" fill="#9cdcfe" opacity="0.38"/><rect x="27.1" y="294.9" width="0.8" height="1.300" fill="#9cdcfe" opacity="0.44"/><rect x="27.1" y="296.6" width="2.0" height="1.300" fill="#c586c0" opacity="0.60"/><rect x="30.0" y="296.6" width="1.1" height="1.300" fill="#c586c0" opacity="0.43"/><rect x="32.0" y="296.6" width="1.5" height="1.300" fill="#c586c0" opacity="0.35"/><rect x="34.4" y="296.6" width="3.3" height="1.300" fill="#6a9955" opacity="0.56"/><rect x="27.1" y="298.4" width="2.5" height="1.300" fill="#c586c0" opacity="0.44"/><rect x="30.4" y="298.4" width="1.7" height="1.300" fill="#c586c0" opacity="0.36"/><rect x="24.8" y="300.2" width="3.0" height="1.300" fill="#4ec9b0" opacity="0.37"/><rect x="28.7" y="300.2" width="0.8" height="1.300" fill="#ce9178" opacity="0.57"/><rect x="22.6" y="302.0" width="0.8" height="1.300" fill="#c586c0" opacity="0.53"/><rect x="20.4" y="303.8" width="1.7" height="1.300" fill="#569cd6" opacity="0.57"/><rect x="23.0" y="303.8" width="1.4" height="1.300" fill="#6a9955" opacity="0.54"/><rect x="18.2" y="305.5" width="1.6" height="1.300" fill="#c586c0" opacity="0.50"/><rect x="15.9" y="307.3" width="1.8" height="1.300" fill="#c586c0" opacity="0.49"/><rect x="15.9" y="309.1" width="1.7" height="1.300" fill="#569cd6" opacity="0.52"/><rect x="18.6" y="309.1" width="0.8" height="1.300" fill="#569cd6" opacity="0.47"/><rect x="13.7" y="310.9" width="2.5" height="1.300" fill="#9cdcfe" opacity="0.57"/><rect x="17.1" y="310.9" width="5.4" height="1.300" fill="#6a9955" opacity="0.33"/><rect x="23.4" y="310.9" width="2.1" height="1.300" fill="#6a9955" opacity="0.34"/><rect x="11.5" y="312.7" width="4.3" height="1.300" fill="#c586c0" opacity="0.36"/><rect x="16.6" y="312.7" width="1.1" height="1.300" fill="#4ec9b0" opacity="0.31"/><rect x="9.3" y="314.4" width="1.8" height="1.300" fill="#569cd6" opacity="0.41"/><rect x="6.8" y="316.2" width="0.9" height="1.300" fill="#569cd6" opacity="0.34"/><rect x="6.8" y="321.6" width="4.5" height="1.300" fill="#9cdcfe" opacity="0.55"/><rect x="12.2" y="321.6" width="5.4" height="1.300" fill="#569cd6" opacity="0.39"/><rect x="18.5" y="321.6" width="1.2" height="1.300" fill="#6a9955" opacity="0.44"/><rect x="20.6" y="321.6" width="0.8" height="1.300" fill="#ce9178" opacity="0.31"/><rect x="22.3" y="321.6" width="5.9" height="1.300" fill="#dcdcaa" opacity="0.50"/><rect x="29.1" y="321.6" width="1.5" height="1.300" fill="#c586c0" opacity="0.38"/><rect x="31.5" y="321.6" width="2.9" height="1.300" fill="#569cd6" opacity="0.31"/><rect x="6.800" y="269.4" width="110.200" height="1.800" fill="#b8771f"/><rect x="19" y="269.4" width="8" height="1.800" fill="#e8a030"/></svg>
<div class="a" style="left:1673px;top:110px;width:15px;height:880px;border-left:1px solid #2b2b2b"></div>
<div class="a" style="left:1679px;top:581px;width:6px;height:6px;background:#9a6a1f"></div>
<div class="a" style="left:1674px;top:672px;width:14px;height:2px;background:#9a9a9a"></div>
<div class="a panel"></div>
<div class="pt" style="left:382px">PROBLEMS</div>
<div class="pt" style="left:475px">OUTPUT</div>
<div class="pt" style="left:553.6px">DEBUG CONSOLE</div>
<div class="pt" style="left:775px">PORTS</div>
<div class="pt" style="left:842px">POSTMAN CONSOLE</div>
<div class="pt" style="left:685px;color:#e7e7e7">TERMINAL</div>
<div class="a" style="left:682px;top:1024px;width:67px;height:1.200px;background:#1a78c8"></div>
<svg style="left:1411px;top:1003px" width="17" height="16" viewBox="0 0 17 16"><rect x=".7" y=".7" width="15.600" height="14.600" rx="2" fill="none" stroke="#ccc" stroke-width="1.300"/><path d="M4 5l3.500 3L4 11M9 11.500h4" fill="none" stroke="#ccc" stroke-width="1.300"/></svg>
<div class="pt" style="left:1435px;color:#ccc;font-size:13.300px;top:1000.500px">node</div>
<svg style="left:1475px;top:1003.5px" width="15" height="15" viewBox="0 0 15 15"><path d="M7.500 0v15M0 7.500h15" stroke="#ccc" stroke-width="1.400"/></svg>
<svg style="left:1495px;top:1007.5px" width="9" height="5.300" viewBox="0 0 12 7"><path d="M.7 .7L6 6l5.300-5.300" fill="none" stroke="#ccc" stroke-width="1.300"/></svg>
<svg style="left:1520px;top:1003.5px" width="16" height="15" viewBox="0 0 16 15"><rect x=".7" y=".7" width="14.600" height="13.600" rx="1.500" fill="none" stroke="#ccc" stroke-width="1.400"/><path d="M8 .7v13.600" stroke="#ccc" stroke-width="1.400"/></svg>
<svg style="left:1549px;top:1002.5px" width="14" height="17" viewBox="0 0 14 17"><path d="M0 3.500h14M4.500 3.500V1.200h5v2.300M1.800 3.500l.7 12.500h9l.7-12.500M5.300 6.500v7M8.700 6.500v7" fill="none" stroke="#ccc" stroke-width="1.400"/></svg>
<svg style="left:1577px;top:1010px" width="16" height="3" viewBox="0 0 16 3"><circle cx="1.500" cy="1.500" r="1.300" fill="#ccc"/><circle cx="8" cy="1.500" r="1.300" fill="#ccc"/><circle cx="14.500" cy="1.500" r="1.300" fill="#ccc"/></svg>
<div class="a" style="left:1607px;top:1002px;width:1px;height:19px;background:#4a4a4a"></div>
<svg style="left:1623px;top:1004px" width="16" height="15" viewBox="0 0 16 15"><path d="M.7 5V.7H5M11 .7h4.300V5M15.300 10v4.300H11M5 14.300H.7V10" fill="none" stroke="#ccc" stroke-width="1.400"/></svg>
<svg style="left:1656.5px;top:1006px" width="11" height="11" viewBox="0 0 11 11"><path d="M.7 .7l9.600 9.600M10.300 .7L.7 10.300" stroke="#ccc" stroke-width="1.400"/></svg>
<div class="a" style="left:1673px;top:1038px;width:15px;height:336px;border-left:1px solid #2b2b2b;border-top:1px solid #2b2b2b"></div>
<div class="tl" style="top:1040.2px">./node_modules/typeorm/data-source/DataSource.js</div>
<div class="tl" style="top:1061.2px">./node_modules/typeorm/index.js</div>
<div class="tl" style="top:1082.2px">./src/app/lib/typeorm/entities/Screenshot.js</div>
<div class="tl" style="top:1103.2px">./src/app/lib/typeorm/db/getDataSource.js</div>
<div class="tl" style="top:1124.2px">./src/app/services/Task/taskService.js</div>
<div class="tl" style="top:1145.2px">./src/app/api/tasks/task-project/[projectId]/route.js</div>
<div class="tl" style="top:1166.2px">Current User in Layout: {</div>
<div class="tl" style="top:1187.2px">  id: <span class="y">6</span>,</div>
<div class="tl" style="top:1208.2px">  email: <span class="gn">'tl1@example.com'</span>,</div>
<div class="tl" style="top:1229.2px">  name: <span class="gn">'Sadia Nahar'</span>,</div>
<div class="tl" style="top:1250.2px">  role: <span class="gn">'Team Lead'</span>,</div>
<div class="tl" style="top:1271.2px">  iat: <span class="y">1755677720</span>,</div>
<div class="tl" style="top:1292.2px">  exp: <span class="y">1755681320</span></div>
<div class="tl" style="top:1313.2px">}</div>
<div class="tl" style="top:1334.2px"> GET /projectDetails/7 <span class="gn">200</span> in 207ms</div>
<div class="a" style="left:383px;top:1354px;width:9px;height:20px;border:1px solid #ccc"></div>
<div class="a status"></div>
<div class="a" style="left:0;top:1375px;width:3px;height:25px;background:#0a5a9c"></div>
<svg style="left:14px;top:1379px" width="12" height="17" viewBox="0 0 12 17"><g fill="none" stroke="#ccc" stroke-width="1.300"><circle cx="3" cy="3" r="2"/><circle cx="3" cy="14" r="2"/><circle cx="9.500" cy="5" r="2"/><path d="M3 5v7M9.500 7c0 3-6.500 2-6.500 5"/></g></svg>
<div class="st" style="left:33.6px">main*</div>
<svg style="left:79px;top:1380px" width="16" height="15" viewBox="0 0 16 15"><g fill="none" stroke="#ccc" stroke-width="1.300"><path d="M2 7a6 6 0 0 1 11-2.500M14 8a6 6 0 0 1-11 2.500"/><path d="M13.500 1v3.800H9.800M2.500 14v-3.800h3.700"/></g></svg>
<div class="a" style="left:1212px;top:1375px;width:41px;height:25px;background:#35373a"></div>
<svg style="left:1225px;top:1380px" width="16" height="16" viewBox="0 0 16 16"><g fill="none" stroke="#ccc" stroke-width="1.400"><circle cx="6.500" cy="6.500" r="5.200"/><path d="M10.500 10.500L15 15M4 6.500h5"/></g></svg>
<div class="st" style="left:1263px">Ln 97, Col 23</div>
<div class="st" style="left:1363.8px">Spaces: 2</div>
<div class="st" style="left:1441px">UTF-8</div>
<div class="st" style="left:1498.7px">CRLF</div>
<div class="st" style="left:1573px">JavaScript</div>
<div class="st" style="left:1545.8px;font-size:13.500px;letter-spacing:2px;top:1374px">{}</div>
<svg style="left:1654px;top:1379px" width="19" height="17" viewBox="0 0 19 17"><g fill="none" stroke="#ccc" stroke-width="1.400"><rect x="3" y="1.500" width="5.600" height="5.400" rx="2.200"/><rect x="10.400" y="1.500" width="5.600" height="5.400" rx="2.200"/><path d="M2.300 6.800C1 8 1 10 1.200 11.500c1.800 2.700 5 3.800 8.300 3.800s6.500-1.100 8.300-3.800c.2-1.500.2-3.500-1.100-4.700"/></g><rect x="6.300" y="9.300" width="1.600" height="3" rx=".8" fill="#ccc"/><rect x="11.100" y="9.300" width="1.600" height="3" rx=".8" fill="#ccc"/></svg>
</div>
<div id="tw" class="a">
<div class="a tt"></div>
<div class="a sb"></div>
<svg style="left:563px;top:15px" width="10" height="1" viewBox="0 0 10 1"><rect width="10" height="1" fill="#bbb"/></svg>
<svg style="left:608px;top:10px" width="10" height="10" viewBox="0 0 10 10"><rect x=".5" y=".5" width="9" height="9" fill="none" stroke="#bbb"/></svg>
<svg style="left:654px;top:10px" width="10" height="10" viewBox="0 0 10 10"><path d="M0 0l10 10M10 0L0 10" stroke="#bbb" stroke-width="1"/></svg>
<svg style="left:669.5px;top:37px" width="8" height="5" viewBox="0 0 8 5"><path d="M.5 4.500L4 1l3.500 3.500" fill="none" stroke="#8a8a8a" stroke-width="1.300"/></svg>
<svg style="left:669.5px;top:500px" width="8" height="5" viewBox="0 0 8 5"><path d="M.5 .5L4 4l3.500-3.500" fill="none" stroke="#8a8a8a" stroke-width="1.300"/></svg>
<div class="a" style="left:666px;top:69px;width:15px;height:17px;background:#4d4d4d"></div>
<div class="l" style="top:32.7px">d]    160 B        99.8 kB</div>
<div class="l" style="top:48.7px">      160 B        99.8 kB</div>
<div class="l" style="top:64.7px">      160 B        99.8 kB</div>
<div class="l" style="top:80.7px">      160 B        99.8 kB</div>
<div class="l" style="top:96.7px">    1.36 kB         101 kB</div>
<div class="l" style="top:112.7px">      160 B        99.8 kB</div>
<div class="l" style="top:128.7px">    4.26 kB         113 kB</div>
<div class="l" style="top:144.7px">    3.21 kB         112 kB</div>
<div class="l" style="top:160.7px">    5.84 kB         154 kB</div>
<div class="l" style="top:176.7px">    99.6 kB</div>
<div class="l" style="top:192.7px">js  54.1 kB</div>
<div class="l" style="top:208.7px">    43.5 kB</div>
<div class="l" style="top:224.7px">    1.93 kB</div>
<div class="l" style="top:272.7px">    39.2 kB</div>
<div class="l" style="top:304.7px">ontent</div>
<div class="l" style="top:320.7px">nd</div>
<div class="l" style="top:352.7px">nitoring-main-webapp# pm2 restart desktop-monitor</div>
<div class="l bl" style="top:368.7px">t variables</div>
<div class="l" style="top:384.7px">d on app [desktop-monitor](ids: [ 0 ])</div>
<div class="tb" style="left:5.599999999999909px;top:423.5px;width:327.9000000000001px;height:63.799999999999955px"></div>
<div class="a" style="left:-5px;top:423.5px;width:10.599999999999909px;height:63.799999999999955px;border-top:1px solid #7a7a7a;border-bottom:1px solid #7a7a7a"></div>
<div class="a" style="left:-5px;top:455.29999999999995px;width:338.5px;height:1px;background:#7a7a7a"></div>
<div class="a" style="left:61px;top:423.5px;width:1px;height:63.799999999999955px;background:#7a7a7a"></div>
<div class="a" style="left:157px;top:423.5px;width:1px;height:63.799999999999955px;background:#7a7a7a"></div>
<div class="a" style="left:245px;top:423.5px;width:1px;height:63.799999999999955px;background:#7a7a7a"></div>
<div class="l cy" style="left:17px;top:432.20000000000005px"><span style="font-size:9px;border:1px solid #61d6d6;line-height:9px;display:inline-block;width:6px;height:9px;vertical-align:1px"></span></div>
<div class="l cy" style="left:73px;top:432.20000000000005px">status</div>
<div class="l cy" style="left:169px;top:432.20000000000005px">cpu</div>
<div class="l cy" style="left:257px;top:432.20000000000005px">memory</div>
<div class="l " style="left:17px;top:464.20000000000005px">8</div>
<div class="l gn" style="left:73px;top:464.20000000000005px">online</div>
<div class="l " style="left:169px;top:464.20000000000005px">0%</div>
<div class="l " style="left:257px;top:464.20000000000005px">18.8mb</div>
<div class="l" style="top:496px">nitoring-main-webapp#</div>
</div>
<div id="ch" class="a">
<div class="a strip"></div>
<div class="a tsb"><svg style="left:8px;top:10px" width="12" height="8" viewBox="0 0 12 8" ><path d="M1.500 1.500L6 6l4.500-4.500" fill="none" stroke="#fff" stroke-width="2" stroke-linecap="round" stroke-linejoin="round"/></svg></div>
<div class="tab" style="left:37.0px"><svg style="left:11px;top:6px" width="16" height="16" viewBox="0 0 16 16" ><g fill="none" stroke="#e8efe6" stroke-width="1"><ellipse cx="8" cy="4.700" rx="2.300" ry="3.700" transform="rotate(18 8 8)"/><ellipse cx="8" cy="4.700" rx="2.300" ry="3.700" transform="rotate(78 8 8)"/><ellipse cx="8" cy="4.700" rx="2.300" ry="3.700" transform="rotate(138 8 8)"/><ellipse cx="8" cy="4.700" rx="2.300" ry="3.700" transform="rotate(198 8 8)"/><ellipse cx="8" cy="4.700" rx="2.300" ry="3.700" transform="rotate(258 8 8)"/><ellipse cx="8" cy="4.700" rx="2.300" ry="3.700" transform="rotate(318 8 8)"/></g></svg><div class="t">Fix EAC(</div><div class="sep" style="left:87.5px"></div></div>
<div class="tab" style="left:125.0px"><svg style="left:11px;top:6px" width="16" height="16" viewBox="0 0 16 16" ><path d="M8 .5a7.4 7.4 0 0 0-6.4 11.2L.5 15.6l4-1.1A7.4 7.4 0 1 0 8 .5z" fill="#25d366"/><path d="M5.6 4.3c-.5.3-1 1-.8 2 .3 1.600 2 3.800 4.200 4.700 1 .4 1.800 0 2.200-.600.3-.5.200-.9-.100-1l-1.400-.7c-.3-.1-.5 0-.7.300-.2.300-.5.300-.800.100-.800-.400-1.600-1.200-2-2-.1-.3 0-.5.200-.7.300-.3.300-.5.200-.8l-.5-1.200c-.100-.3-.3-.3-.5-.1z" fill="#fff"/></svg><div class="t">WhatsA</div><div class="sep" style="left:87.5px"></div></div>
<div class="tab" style="left:213.0px"><svg style="left:11px;top:6px" width="16" height="16" viewBox="0 0 16 16" ><rect width="16" height="16" rx="2" fill="#fff"/><g fill="none" stroke="#111" stroke-width="1.3"><circle cx="8" cy="8" r="5.200"/><path d="M8 4.600l3.400 3.400L8 11.400 4.600 8z"/><path d="M8 2.800v1.800M8 11.400v1.800M2.800 8h1.800M11.400 8h1.800"/></g></svg><div class="t">Activity_</div><div class="sep" style="left:87.5px"></div></div>
<div class="tab" style="left:301.0px"><svg style="left:11px;top:6px" width="16" height="16" viewBox="0 0 16 16" ><rect width="16" height="16" rx="1" fill="#fdf6e8"/><rect x="1.200" y="1.200" width="13.600" height="13.600" fill="#f5a21f"/><rect x="3" y="3.200" width="10" height="3.200" fill="#f9c877"/><text x="8" y="12" font-size="4.800" font-weight="700" fill="#fff" text-anchor="middle" font-family="Liberation Sans,sans-serif">JOBS</text></svg><div class="t">Compre</div><div class="sep" style="left:87.5px"></div></div>
<div class="tab" style="left:389.0px"><svg style="left:11px;top:6px" width="16" height="16" viewBox="0 0 16 16" ><circle cx="8" cy="8" r="7.600" fill="#f6c21a"/><circle cx="8" cy="8" r="5" fill="#1c1c1c"/><path d="M8 5v4.500M5.800 7.800L8 10l2.200-2.200" stroke="#fff" stroke-width="1.400" fill="none"/></svg><div class="t">Ostad -</div><div class="sep" style="left:87.2px"></div></div>
<div class="tab" style="left:476.7px"><svg style="left:11px;top:6px" width="16" height="16" viewBox="0 0 16 16" ><defs><linearGradient id="lgI" x1=".3" y1="0" x2=".6" y2="1"><stop offset="0" stop-color="#ff4a3d"/><stop offset=".45" stop-color="#f2468c"/><stop offset="1" stop-color="#5a5cf9"/></linearGradient></defs><path d="M3.500 .8c3.200 0 4.600 2.200 4.600 4.200 1-1.200 2.600-1.700 4.200-1.200 2.400.8 3.400 3.200 2.400 5.400-1.200 2.600-4.200 5.600-8.400 5.600-3.200 0-5.300-1.700-5.300-4.400V3.800C1 2 2 .8 3.500 .8z" fill="url(#lgI)"/></svg><div class="t">insight-</div><div class="sep" style="left:86.4px"></div></div>
<div class="tab" style="left:563.6px"><svg style="left:11px;top:6px" width="16" height="16" viewBox="0 0 16 16" ><path d="M8 0C3.58 0 0 3.58 0 8c0 3.54 2.29 6.53 5.47 7.59.4.070.55-.17.55-.38 0-.19-.010-.82-.010-1.490-2.010.37-2.530-.49-2.690-.94-.090-.23-.48-.94-.82-1.130-.28-.15-.68-.52-.010-.53.63-.010 1.080.58 1.230.82.72 1.210 1.870.87 2.330.66.070-.52.28-.87.51-1.070-1.780-.2-3.640-.89-3.640-3.950 0-.87.31-1.590.82-2.150-.080-.2-.36-1.020.080-2.120 0 0 .67-.21 2.200.82.64-.18 1.320-.27 2-.27.68 0 1.360.090 2 .27 1.530-1.040 2.200-.82 2.200-.82.44 1.100.16 1.920.080 2.120.51.56.82 1.270.82 2.150 0 3.070-1.870 3.750-3.650 3.950.29.25.54.73.54 1.480 0 1.070-.010 1.930-.010 2.200 0 .21.15.46.55.38A8.013 8.013 0 0 0 16 8c0-4.420-3.580-8-8-8z" fill="#fff"/></svg><div class="t">Asiful-H</div><div class="sep" style="left:86.9px"></div></div>
<div class="tab" style="left:651.0px"><svg style="left:11px;top:6px" width="16" height="16" viewBox="0 0 16 16" ><g fill="none" stroke="#e8efe6" stroke-width="1"><ellipse cx="8" cy="4.700" rx="2.300" ry="3.700" transform="rotate(18 8 8)"/><ellipse cx="8" cy="4.700" rx="2.300" ry="3.700" transform="rotate(78 8 8)"/><ellipse cx="8" cy="4.700" rx="2.300" ry="3.700" transform="rotate(138 8 8)"/><ellipse cx="8" cy="4.700" rx="2.300" ry="3.700" transform="rotate(198 8 8)"/><ellipse cx="8" cy="4.700" rx="2.300" ry="3.700" transform="rotate(258 8 8)"/><ellipse cx="8" cy="4.700" rx="2.300" ry="3.700" transform="rotate(318 8 8)"/></g></svg><div class="t">IELTS re</div><div class="sep" style="left:86.7px"></div></div>
<div class="tab" style="left:738.2px"><svg style="left:11px;top:6px" width="16" height="16" viewBox="0 0 16 16" ><path d="M8 0C3.58 0 0 3.58 0 8c0 3.54 2.29 6.53 5.47 7.59.4.070.55-.17.55-.38 0-.19-.010-.82-.010-1.490-2.010.37-2.530-.49-2.690-.94-.090-.23-.48-.94-.82-1.130-.28-.15-.68-.52-.010-.53.63-.010 1.080.58 1.230.82.72 1.210 1.870.87 2.330.66.070-.52.28-.87.51-1.070-1.780-.2-3.640-.89-3.640-3.950 0-.87.31-1.590.82-2.150-.080-.2-.36-1.020.080-2.120 0 0 .67-.21 2.200.82.64-.18 1.320-.27 2-.27.68 0 1.360.090 2 .27 1.530-1.040 2.200-.82 2.200-.82.44 1.100.16 1.920.080 2.120.51.56.82 1.270.82 2.150 0 3.070-1.870 3.750-3.650 3.950.29.25.54.73.54 1.480 0 1.070-.010 1.930-.010 2.200 0 .21.15.46.55.38A8.013 8.013 0 0 0 16 8c0-4.420-3.580-8-8-8z" fill="#fff"/></svg><div class="t">Small-B</div><div class="sep" style="left:86.5px"></div></div>
<div class="tab" style="left:825.2px"><svg style="left:11px;top:6px" width="16" height="16" viewBox="0 0 16 16" ><rect width="16" height="16" rx="3" fill="#161822"/><g stroke="#d8dbe8" stroke-width="1.200" fill="none"><path d="M5.500 4.500v7M5.500 9c3 0 5-.5 5-3"/></g><circle cx="5.500" cy="4" r="1.200" fill="#d8dbe8"/><circle cx="5.500" cy="12" r="1.200" fill="#d8dbe8"/><circle cx="10.500" cy="5.500" r="1.200" fill="#d8dbe8"/></svg><div class="t">Taskpro</div><div class="sep" style="left:85.9px"></div></div>
<div class="tab" style="left:911.6px"><svg style="left:11px;top:6px" width="16" height="16" viewBox="0 0 16 16" ><circle cx="8" cy="8" r="7.800" fill="#000"/><path d="M8 3.800l4.400 7.600H3.600z" fill="#fff"/></svg><div class="t">Create I</div><div class="sep" style="left:86.7px"></div></div>
<div class="tab" style="left:998.8px"><svg style="left:11px;top:6px" width="16" height="16" viewBox="0 0 16 16" ><circle cx="8" cy="8" r="7.800" fill="#000"/><path d="M8 3.800l4.400 7.600H3.600z" fill="#fff"/></svg><div class="t">taskpro</div><div class="sep" style="left:86.5px"></div></div>
<div class="tab" style="left:1085.8px"><svg style="left:11px;top:6px" width="16" height="16" viewBox="0 0 16 16" ><circle cx="8" cy="8" r="7.800" fill="#000"/><path d="M8 3.800l4.400 7.600H3.600z" fill="#fff"/></svg><div class="t">Create I</div><div class="sep" style="left:86.3px"></div></div>
<div class="tab" style="left:1172.6px"><svg style="left:11px;top:6px" width="16" height="16" viewBox="0 0 16 16" ><circle cx="8" cy="8" r="7.800" fill="#000"/><path d="M8 3.800l4.400 7.600H3.600z" fill="#fff"/></svg><div class="t">localhos</div><div class="sep" style="left:86.5px"></div></div>
<div class="tab" style="left:1259.6px"><svg style="left:11px;top:6px" width="16" height="16" viewBox="0 0 16 16" ><rect x="0" y="2.400" width="16" height="11.200" rx="3" fill="#ff0033"/><path d="M6.400 5.400l4.400 2.600-4.400 2.600z" fill="#fff"/></svg><div class="t">(7) Afus</div><div class="sep" style="left:86.7px"></div></div>
<div class="tab" style="left:1346.8px"><svg style="left:11px;top:6px" width="16" height="16" viewBox="0 0 16 16" ><path d="M.5 14.500L5 2l3 8z" fill="#f39a1e"/><path d="M5.500 14.500L10 1.500l3.500 10z" fill="#f7b648"/><path d="M10.500 14.500l2.500-8 2.500 8z" fill="#e8861a"/><rect x="1" y="11.500" width="14" height="3.500" fill="#6c78af" opacity=".85"/></svg><div class="t">localhos</div></div>
<div class="a bar"></div>
<div class="a act"><svg style="left:7.5px;top:5px" width="16" height="16" viewBox="0 0 16 16" ><path d="M1 9.500a7 7 0 0 1 14 0" fill="none" stroke="#9fdc9a" stroke-width="1.400"/><circle cx="8" cy="9.300" r="5.400" fill="#2ea44f"/><path d="M8 5.800v7M4.800 8.600h6.400" stroke="#fff" stroke-width="1.500"/></svg><div class="t">Goo</div><svg style="left:58.5px;top:9.5px" width="10" height="10" viewBox="0 0 10 10" ><path d="M1 1l8 8M9 1l-8 8" stroke="#fff" stroke-width="1.500"/></svg></div>
<svg style="left:1533px;top:15px" width="10" height="10" viewBox="0 0 10 10" ><path d="M5 0v10M0 5h10" stroke="#e6ede4" stroke-width="1.900"/></svg>
<svg style="left:1622.5px;top:20px" width="11" height="1" viewBox="0 0 11 1" ><rect width="11" height="1" fill="#fff"/></svg>
<svg style="left:1669px;top:15px" width="10" height="10" viewBox="0 0 10 10" ><rect x=".5" y=".5" width="9" height="9" fill="none" stroke="#fff" stroke-width="1"/></svg>
<svg style="left:1714.5px;top:14.5px" width="11" height="11" viewBox="0 0 11 11" ><path d="M.5 .5l10 10M10.500 .5l-10 10" stroke="#fff" stroke-width="1.100"/></svg>
<svg style="left:15px;top:56px" width="14" height="14" viewBox="0 0 14 14" ><path d="M13.500 7H1.500M7 1.200L1.200 7 7 12.800" fill="none" stroke="#d5dfd3" stroke-width="1.700"/></svg>
<svg style="left:50px;top:56px" width="14" height="14" viewBox="0 0 14 14" ><path d="M.5 7h12M7 1.200L12.800 7 7 12.800" fill="none" stroke="#75866f" stroke-width="1.700"/></svg>
<svg style="left:88.5px;top:57.5px" width="11" height="11" viewBox="0 0 11 11" ><path d="M.5 .5l10 10M10.500 .5l-10 10" stroke="#d5dfd3" stroke-width="1.700"/></svg>
<div class="a omni"><div class="ic"><svg style="left:6px;top:7px" width="14" height="12" viewBox="0 0 14 12" ><g fill="none" stroke="#e3ebe0" stroke-width="1.400"><circle cx="3" cy="2.500" r="1.800"/><path d="M7 2.500h6.500"/><circle cx="11" cy="9.500" r="1.800"/><path d="M.5 9.500H7"/></g></svg></div><div class="url"><b>docs.google.com</b>/spreadsheets/u/0/</div></div>
<svg style="left:1397px;top:55px" width="16" height="16" viewBox="0 0 16 16" ><g fill="none" stroke="#dfe8dc" stroke-width="1.600"><circle cx="6.500" cy="6.500" r="4.800"/><path d="M10.200 10.200L15 15M4.300 6.500h4.400M6.500 4.300v4.400"/></g></svg>
<svg style="left:1429px;top:55px" width="16" height="16" viewBox="0 0 16 16" ><path d="M8 1.300l2 4.500 4.900.5-3.700 3.300 1.100 4.800L8 11.900l-4.300 2.500 1.100-4.800L1.100 6.300l4.900-.5z" fill="none" stroke="#dfe8dc" stroke-width="1.500" stroke-linejoin="round"/></svg>
<svg style="left:1480px;top:55px" width="16" height="16" viewBox="0 0 16 16" ><path d="M.5 15.500C2 9 7 3 14.500 .5c.5 4-2 8.500-6 11-2 1.200-4 1.500-5.500 1.500z" fill="#a97fe0"/><path d="M.5 15.500L10 5" stroke="#6a3fb0" stroke-width=".9"/><path d="M3 13c4-1 8-4 11-9" stroke="#d9c2f5" stroke-width=".7" fill="none"/></svg>
<svg style="left:1517px;top:55px" width="14" height="17" viewBox="0 0 14 17" ><path d="M9.500 0l3.500 2.800-7.500 10.500-3.800-.8-.2-2.500z" fill="#e01515"/><path d="M1.500 10.500l3.500 2.800-4.500 3.200z" fill="#3a0a0a"/></svg>
<svg style="left:1551px;top:57px" width="16" height="12.5" viewBox="0 0 16 12.5" ><rect x=".6" y=".6" width="14.800" height="11.300" rx="3" fill="#fff" stroke="#2f6fe0" stroke-width="1.200"/><circle cx="8" cy="6.250" r="2.500" fill="#4a4fd8"/><circle cx="8" cy="6.250" r="1" fill="#8f93f0"/></svg>
<div class="a" style="left:1587px;top:55px;width:16px;height:15.500px;border-radius:3px;background:linear-gradient(180deg,#fcd535,#f2b90c);color:#222;font-size:11px;line-height:15.500px;text-align:center;font-family:'Liberation Sans','DejaVu Sans',sans-serif;font-weight:400">বং</div>
<svg style="left:1623.5px;top:54.5px" width="17" height="17" viewBox="0 0 17 17" ><path d="M1.200 5h4V3.700a1.700 1.700 0 1 1 3.400 0V5h4v3.600h1.200a1.700 1.700 0 1 1 0 3.400h-1.200v3.800H1.200v-3.600c2.200 0 2.200-3.400 0-3.400z" fill="none" stroke="#c9d7c4" stroke-width="1.600" stroke-linejoin="round"/></svg>
<div class="a" style="left:1657.500px;top:54px;width:1px;height:18px;background:#53644f"></div>
<div class="a" style="left:1675px;top:53px;width:21px;height:21px;border-radius:50%;background:radial-gradient(circle at 50% 38%,#6b4a36 0 22%,#2b2a25 23% 40%,#5a5d4f 41%);overflow:hidden"><div style="position:absolute;left:3px;top:13px;width:15px;height:12px;border-radius:7px 7px 0 0;background:#1d1d1b"></div></div>
<svg style="left:1719px;top:55px" width="4" height="16" viewBox="0 0 4 16" ><circle cx="2" cy="2" r="1.500" fill="#dfe8dc"/><circle cx="2" cy="8" r="1.500" fill="#dfe8dc"/><circle cx="2" cy="14" r="1.500" fill="#dfe8dc"/></svg>
<div class="a tbl"></div>
<div class="a page">
<div class="a grey"></div>
<svg style="left:34px;top:31px" width="23" height="18" viewBox="0 0 23 18" ><path d="M0 1.500h23M0 9h23M0 16.500h23" stroke="#444746" stroke-width="2.600"/></svg>
<svg style="left:88px;top:17px" width="34" height="46" viewBox="0 0 34 46" ><path d="M3 0h19l12 12v31a3 3 0 0 1-3 3H3a3 3 0 0 1-3-3V3a3 3 0 0 1 3-3z" fill="#34a853"/><path d="M22 0l12 12H25a3 3 0 0 1-3-3z" fill="#188038"/><path d="M7.500 22h19v15h-19z" fill="#fff"/><path d="M10 25h5.800v3.200H10zM18.200 25H24v3.200h-5.800zM10 30.600h5.800v3.200H10zM18.200 30.600H24v3.200h-5.800z" fill="#34a853"/></svg>
<div class="a logo-t">Sheets</div>
<div class="a sbox"><svg style="left:24px;top:19px" width="24" height="24" viewBox="0 0 24 24" ><g fill="none" stroke="#444746" stroke-width="2.700"><circle cx="9" cy="9" r="7"/><path d="M14 14l8 8"/></g></svg><span>Search</span></div>
<svg style="left:1610.3px;top:29.3px" width="22" height="22" viewBox="0 0 22 22" ><circle cx="3.00" cy="3.00" r="2.450" fill="#444746"/><circle cx="3.00" cy="10.55" r="2.450" fill="#444746"/><circle cx="3.00" cy="18.10" r="2.450" fill="#444746"/><circle cx="10.55" cy="3.00" r="2.450" fill="#444746"/><circle cx="10.55" cy="10.55" r="2.450" fill="#444746"/><circle cx="10.55" cy="18.10" r="2.450" fill="#444746"/><circle cx="18.10" cy="3.00" r="2.450" fill="#444746"/><circle cx="18.10" cy="10.55" r="2.450" fill="#444746"/><circle cx="18.10" cy="18.10" r="2.450" fill="#444746"/></svg>
<div class="a" style="left:1661px;top:19.500px;width:40px;height:40.500px;border-radius:50%;overflow:hidden;background:repeating-linear-gradient(55deg,rgba(15,15,10,.6) 0 1.500px,transparent 1.500px 4px),repeating-linear-gradient(-50deg,rgba(140,140,110,.3) 0 1px,transparent 1px 4.500px),#47473a"><div style="position:absolute;left:-2px;top:24px;width:44px;height:22px;border-radius:16px 16px 0 0;background:#4f4b36"></div><div style="position:absolute;left:11px;top:25px;width:17px;height:20px;border-radius:5px 5px 0 0;background:#0d0d0c"></div><div style="position:absolute;left:13.500px;top:8px;width:12.500px;height:17px;border-radius:6px 6px 6.500px 6.500px;background:linear-gradient(180deg,#8a5d3c,#b37a52 45%,#8f5f40)"></div><div style="position:absolute;left:12.500px;top:4.500px;width:14.500px;height:7px;border-radius:7px 7px 2px 2px;background:#2b2a22"></div><div style="position:absolute;left:15px;top:20px;width:9.500px;height:5px;border-radius:0 0 5px 5px;background:#3a2a1e"></div><div style="position:absolute;left:16.500px;top:18px;width:6.500px;height:1.600px;border-radius:1px;background:#e8ddd0"></div></div>
<div class="a h1">Start a new spreadsheet</div>
<div class="a tg">Template gallery</div>
<svg style="left:1306px;top:109.5px" width="14" height="20" viewBox="0 0 14 20" ><path d="M2 7l5-5 5 5M2 13l5 5 5-5" fill="none" stroke="#5f6368" stroke-width="2.400"/></svg>
<div class="a vsep"></div>
<svg style="left:1370px;top:108px" width="6" height="22" viewBox="0 0 6 22" ><circle cx="3" cy="3" r="2.600" fill="#5f6368"/><circle cx="3" cy="11" r="2.600" fill="#5f6368"/><circle cx="3" cy="19" r="2.600" fill="#5f6368"/></svg>
<div class="card" style="left:290px"><div style="position:absolute;left:97.4px;top:42.7px;width:11.0px;height:28.0px;background:#ea4335;"></div><div style="position:absolute;left:97.4px;top:82.4px;width:11.0px;height:28.3px;background:#34a853;"></div><div style="position:absolute;left:69.3px;top:70.7px;width:28.1px;height:11.7px;background:#fbbc04;"></div><div style="position:absolute;left:97.4px;top:70.7px;width:39.1px;height:11.7px;background:#4285f4;"></div><div style="position:absolute;left:97.4px;top:70.7px;width:0;height:0;border-left:11px solid #ea4335;border-bottom:11.7px solid transparent"></div></div>
<div class="lbl" style="left:295px">Blank spreadsheet</div>
<div class="card" style="left:518px"><div style="position:absolute;left:17.0px;top:18.0px;width:108.0px;height:20.5px;background:#0f9d58;"></div><div style="position:absolute;left:17.0px;top:38.5px;width:108.0px;height:10.5px;background:#0b8a4b;"></div><div style="position:absolute;left:17.0px;top:49.0px;width:108.0px;height:9.0px;background:#f3f3f3;"></div><div style="position:absolute;left:20.5px;top:28.5px;font-size:6.2px;line-height:6.2px;color:#d9f2e4;white-space:nowrap;">To Do</div><div style="position:absolute;left:101.0px;top:31.5px;font-size:2.6px;line-height:2.6px;color:#d9f2e4;white-space:nowrap;">1/3 completed</div><div style="position:absolute;left:33.0px;top:42.0px;font-size:2.8px;line-height:2.8px;color:#e6f6ec;white-space:nowrap;font-weight:700">Date</div><div style="position:absolute;left:46.5px;top:42.0px;font-size:2.8px;line-height:2.8px;color:#e6f6ec;white-space:nowrap;font-weight:700">Task</div><div style="position:absolute;left:21.5px;top:42.0px;width:3.5px;height:1.0px;background:#fff;transform:rotate(-45deg)"></div><div style="position:absolute;left:17.0px;top:58.0px;width:108.0px;height:0.6px;background:#e4e4e4;"></div><div style="position:absolute;left:17.0px;top:67.0px;width:108.0px;height:0.6px;background:#e4e4e4;"></div><div style="position:absolute;left:17.0px;top:76.0px;width:108.0px;height:0.6px;background:#e4e4e4;"></div><div style="position:absolute;left:17.0px;top:85.0px;width:108.0px;height:0.6px;background:#e4e4e4;"></div><div style="position:absolute;left:17.0px;top:94.0px;width:108.0px;height:0.6px;background:#e4e4e4;"></div><div style="position:absolute;left:17.0px;top:103.0px;width:108.0px;height:0.6px;background:#e4e4e4;"></div><div style="position:absolute;left:17.0px;top:112.0px;width:108.0px;height:0.6px;background:#e4e4e4;"></div><div style="position:absolute;left:17.0px;top:121.0px;width:108.0px;height:0.6px;background:#e4e4e4;"></div><div style="position:absolute;left:17.0px;top:130.0px;width:108.0px;height:0.6px;background:#e4e4e4;"></div><div style="position:absolute;left:17.0px;top:139.0px;width:108.0px;height:0.6px;background:#e4e4e4;"></div><div style="position:absolute;left:17.0px;top:148.0px;width:108.0px;height:0.6px;background:#e4e4e4;"></div><div style="position:absolute;left:17.0px;top:157.0px;width:108.0px;height:0.6px;background:#e4e4e4;"></div><svg style="left:0px;top:-1px" width="60" height="160" viewBox="0 0 60 160"><rect x="21.300" y="52.3" width="4" height="4" rx=".6" fill="#777" stroke="#666" stroke-width=".55"/><rect x="21.300" y="61.3" width="4" height="4" rx=".6" fill="#fff" stroke="#666" stroke-width=".55"/><rect x="21.300" y="70.3" width="4" height="4" rx=".6" fill="#fff" stroke="#666" stroke-width=".55"/><rect x="21.300" y="79.3" width="4" height="4" rx=".6" fill="#fff" stroke="#666" stroke-width=".55"/><rect x="21.300" y="88.3" width="4" height="4" rx=".6" fill="#fff" stroke="#666" stroke-width=".55"/><rect x="21.300" y="97.3" width="4" height="4" rx=".6" fill="#fff" stroke="#666" stroke-width=".55"/><rect x="21.300" y="106.3" width="4" height="4" rx=".6" fill="#fff" stroke="#666" stroke-width=".55"/><rect x="21.300" y="115.3" width="4" height="4" rx=".6" fill="#fff" stroke="#666" stroke-width=".55"/><rect x="21.300" y="124.3" width="4" height="4" rx=".6" fill="#fff" stroke="#666" stroke-width=".55"/><rect x="21.300" y="133.3" width="4" height="4" rx=".6" fill="#fff" stroke="#666" stroke-width=".55"/><rect x="21.300" y="142.3" width="4" height="4" rx=".6" fill="#fff" stroke="#666" stroke-width=".55"/><rect x="21.300" y="151.3" width="4" height="4" rx=".6" fill="#fff" stroke="#666" stroke-width=".55"/></svg><div style="position:absolute;left:46.5px;top:53.0px;width:73.0px;height:0.7px;background:#777;"></div><div style="position:absolute;left:35.0px;top:53.0px;width:5.0px;height:0.7px;background:#888;"></div><div style="position:absolute;left:35.0px;top:58.8px;font-size:2.6px;line-height:2.6px;color:#777;white-space:nowrap;">8/9</div><div style="position:absolute;left:35.0px;top:67.8px;font-size:2.6px;line-height:2.6px;color:#777;white-space:nowrap;">8/9</div><div style="position:absolute;left:46.5px;top:57.5px;font-size:2.7px;line-height:2.7px;color:#666;white-space:nowrap;">Change the styling of completed items under</div><div style="position:absolute;left:46.5px;top:61.5px;font-size:2.7px;line-height:2.7px;color:#666;white-space:nowrap;">"Format &gt; Conditional Formatting" (on the web)</div><div style="position:absolute;left:46.5px;top:66.5px;font-size:2.7px;line-height:2.7px;color:#666;white-space:nowrap;">Sort items using the dropdown arrows next to the</div><div style="position:absolute;left:46.5px;top:70.3px;font-size:2.7px;line-height:2.7px;color:#666;white-space:nowrap;">heading name (on the web)</div></div>
<div class="lbl" style="left:523px">To-do list</div>
<div class="card" style="left:747px"><div style="position:absolute;left:17.3px;top:17.8px;width:149.7px;height:2.8px;background:#334960;"></div><div style="position:absolute;left:28.8px;top:26.8px;font-size:7.9px;line-height:7.9px;color:#e8702a;white-space:nowrap;font-weight:700;letter-spacing:-.1px">Annual budget tracker</div><div style="position:absolute;left:29.0px;top:38.5px;font-size:2.8px;line-height:2.8px;color:#7a8794;white-space:nowrap;">Plan and track your monthly spending for the entire year.</div><div style="position:absolute;left:27.0px;top:49.0px;width:130.0px;height:0.6px;background:#c9d1d8;"></div><div style="position:absolute;left:29.0px;top:56.5px;font-size:3.6px;line-height:3.6px;color:#334960;white-space:nowrap;font-weight:700">How to use this template</div><div style="position:absolute;left:25.0px;top:65.5px;font-size:2.7px;line-height:2.7px;color:#8a96a2;white-space:nowrap;">1.&nbsp; Get started by entering your starting balance in Row 1 3 below.</div><div style="position:absolute;left:25.0px;top:73.3px;font-size:2.7px;line-height:2.7px;color:#8a96a2;white-space:nowrap;">2.&nbsp; Then, fill out the "Expenses" and "Income" tabs.</div><div style="position:absolute;left:25.0px;top:81.0px;font-size:2.7px;line-height:2.7px;color:#8a96a2;white-space:nowrap;">3.&nbsp; Feel free to rename or delete categories in these tabs. Your changes will automatically</div><div style="position:absolute;left:29.0px;top:85.2px;font-size:2.7px;line-height:2.7px;color:#8a96a2;white-space:nowrap;">be reflected on the "Summary" tab, which shows an overview of your projected/actual</div><div style="position:absolute;left:29.0px;top:89.0px;font-size:2.7px;line-height:2.7px;color:#8a96a2;white-space:nowrap;">spending.</div><div style="position:absolute;left:27.0px;top:99.0px;width:130.0px;height:0.6px;background:#dde2e6;"></div><div style="position:absolute;left:29.0px;top:108.0px;font-size:3.6px;line-height:3.6px;color:#334960;white-space:nowrap;font-weight:700">Configure</div><div style="position:absolute;left:29.0px;top:116.5px;font-size:2.8px;line-height:2.8px;color:#8a96a2;white-space:nowrap;">Starting balance: &nbsp;&nbsp;&nbsp; $5,000</div></div>
<div class="lbl" style="left:752px">Annual budget</div>
<div class="card" style="left:976px"><div style="position:absolute;left:17.3px;top:17.8px;width:170.7px;height:26.4px;background:#334960;"></div><div style="position:absolute;left:27.5px;top:23.5px;font-size:2.2px;line-height:2.2px;color:#fff;white-space:nowrap;font-weight:700">GET STARTED</div><div style="position:absolute;left:27.5px;top:28.5px;width:78.0px;height:1.1px;background:#aeb8c4;"></div><div style="position:absolute;left:27.5px;top:31.0px;width:78.0px;height:1.1px;background:#aeb8c4;"></div><div style="position:absolute;left:27.5px;top:35.3px;width:78.0px;height:1.1px;background:#aeb8c4;"></div><div style="position:absolute;left:27.5px;top:38.0px;width:66.0px;height:1.1px;background:#aeb8c4;"></div><div style="position:absolute;left:124.0px;top:23.5px;font-size:2.2px;line-height:2.2px;color:#fff;white-space:nowrap;font-weight:700">NOTE</div><div style="position:absolute;left:123.5px;top:27.0px;width:55.0px;height:3.4px;background:#fdf0e8;"></div><div style="position:absolute;left:124.5px;top:34.5px;width:43.0px;height:1.0px;background:#aeb8c4;"></div><div style="position:absolute;left:28.0px;top:53.5px;font-size:6.4px;line-height:6.4px;color:#e8702a;white-space:nowrap;font-weight:700">Monthly Budget</div><div style="position:absolute;left:144.0px;top:53.0px;font-size:2.2px;line-height:2.2px;color:#334960;white-space:nowrap;font-weight:700">Monthly balance</div><div style="position:absolute;left:164.5px;top:52.5px;width:14.0px;height:3.6px;background:#fdf0e8;"></div><div style="position:absolute;left:56.6px;top:79.0px;width:9.6px;height:18.5px;background:#334960;"></div><div style="position:absolute;left:70.3px;top:68.7px;width:9.7px;height:28.8px;background:#f26b21;"></div><div style="position:absolute;left:39.0px;top:99.0px;font-size:2.9px;line-height:2.9px;color:#334960;white-space:nowrap;font-weight:700">START BALANCE</div><div style="position:absolute;left:70.0px;top:99.0px;font-size:2.9px;line-height:2.9px;color:#f26b21;white-space:nowrap;font-weight:700">END BALANCE</div><div style="position:absolute;left:57.0px;top:104.5px;font-size:2.5px;line-height:2.5px;color:#334960;white-space:nowrap;">$1,000</div><div style="position:absolute;left:71.0px;top:104.5px;font-size:2.5px;line-height:2.5px;color:#f26b21;white-space:nowrap;">$1,500</div><div style="position:absolute;left:109.0px;top:65.0px;width:70.4px;height:46.0px;background:#e8eced;"></div><div style="position:absolute;left:135.5px;top:74.5px;font-size:6px;line-height:6px;color:#334960;white-space:nowrap;">+50%</div><div style="position:absolute;left:131.0px;top:83.0px;font-size:2.1px;line-height:2.1px;color:#334960;white-space:nowrap;">Increase in total savings</div><div style="position:absolute;left:123.0px;top:87.0px;width:42.0px;height:0.5px;background:#d0d6da;"></div><div style="position:absolute;left:136.5px;top:90.5px;font-size:6.4px;line-height:6.4px;color:#334960;white-space:nowrap;">$500</div><div style="position:absolute;left:135.0px;top:99.5px;font-size:2.1px;line-height:2.1px;color:#334960;white-space:nowrap;">Saved this month</div><div style="position:absolute;left:27.5px;top:119.5px;font-size:3px;line-height:3px;color:#334960;white-space:nowrap;font-weight:700">Expenses</div><div style="position:absolute;left:110.0px;top:119.5px;font-size:3px;line-height:3px;color:#334960;white-space:nowrap;font-weight:700">Income</div><div style="position:absolute;left:27.5px;top:125.0px;font-size:2.4px;line-height:2.4px;color:#556;white-space:nowrap;">Planned</div><div style="position:absolute;left:27.5px;top:130.0px;font-size:2.4px;line-height:2.4px;color:#556;white-space:nowrap;">Actual</div><div style="position:absolute;left:110.0px;top:125.0px;font-size:2.4px;line-height:2.4px;color:#556;white-space:nowrap;">Planned</div><div style="position:absolute;left:110.0px;top:130.0px;font-size:2.4px;line-height:2.4px;color:#556;white-space:nowrap;">Actual</div><div style="position:absolute;left:55.3px;top:124.0px;width:38.0px;height:3.6px;background:#a9b3bd;"></div><div style="position:absolute;left:55.3px;top:129.0px;width:40.0px;height:3.6px;background:#334960;"></div><div style="position:absolute;left:137.4px;top:124.0px;width:38.8px;height:3.6px;background:#a9b3bd;"></div><div style="position:absolute;left:137.4px;top:129.0px;width:39.8px;height:3.6px;background:#334960;"></div><div style="position:absolute;left:27.5px;top:142.5px;font-size:3.6px;line-height:3.6px;color:#e8702a;white-space:nowrap;font-weight:700">Expenses</div><div style="position:absolute;left:110.0px;top:142.5px;font-size:3.6px;line-height:3.6px;color:#e8702a;white-space:nowrap;font-weight:700">Income</div><div style="position:absolute;left:27.5px;top:148.0px;width:69.0px;height:0.8px;background:#d5dade;"></div><div style="position:absolute;left:110.0px;top:148.0px;width:69.0px;height:0.8px;background:#d5dade;"></div></div>
<div class="lbl" style="left:981px">Monthly budget</div>
<div class="card" style="left:1205px"><div style="position:absolute;left:17.3px;top:17.8px;width:171.0px;height:14.8px;background:#4285f4;"></div><div style="position:absolute;left:28.0px;top:22.0px;font-size:2.6px;line-height:2.6px;color:#fff;white-space:nowrap;font-weight:700">Instructions</div><div style="position:absolute;left:28.0px;top:25.5px;font-size:2.5px;line-height:2.5px;color:#dbe7fd;white-space:nowrap;">Enter stock symbol in cell B4</div><div style="position:absolute;left:154.0px;top:22.0px;font-size:2.6px;line-height:2.6px;color:#fff;white-space:nowrap;font-weight:700">Powered by</div><div style="position:absolute;left:154.0px;top:26.0px;font-size:2.7px;line-height:2.7px;color:#fff;white-space:nowrap;text-decoration:underline">Google Finance</div><div style="position:absolute;left:27.5px;top:36px;width:30.500px;height:10.400px;border:.8px solid #3f6fd1;background:#e9effc"></div><div style="position:absolute;left:27.5px;top:40.5px;width:30.5px;height:0.8px;background:#3f6fd1;"></div><div style="position:absolute;left:38.0px;top:37.5px;font-size:2.6px;line-height:2.6px;color:#333;white-space:nowrap;font-weight:700">GOOG</div><div style="position:absolute;left:60.0px;top:37.8px;font-size:2.5px;line-height:2.5px;color:#bbb;white-space:nowrap;">&lt; enter a symbol</div><div style="position:absolute;left:60.0px;top:42.8px;font-size:2.5px;line-height:2.5px;color:#bbb;white-space:nowrap;">&lt; optionally, enter an exchange (ex: NASDAQ, NYSE)</div><div style="position:absolute;left:28.4px;top:51.5px;font-size:11.25px;line-height:11.25px;color:#202124;white-space:nowrap;">Alphabet Inc Class C</div><div style="position:absolute;left:28.5px;top:68.5px;font-size:2.4px;line-height:2.4px;color:#888;white-space:nowrap;">Current Price</div><div style="position:absolute;left:82.5px;top:68.5px;font-size:2.4px;line-height:2.4px;color:#888;white-space:nowrap;">Change</div><div style="position:absolute;left:107.0px;top:68.5px;font-size:2.4px;line-height:2.4px;color:#888;white-space:nowrap;">% Change</div><div style="position:absolute;left:28.4px;top:72.3px;font-size:7.4px;line-height:7.4px;color:#202124;white-space:nowrap;">2,622.03</div><div style="position:absolute;left:82.5px;top:74.3px;font-size:3.6px;line-height:3.6px;color:#0f9d58;white-space:nowrap;">+36.95</div><div style="position:absolute;left:107.0px;top:74.3px;font-size:3.6px;line-height:3.6px;color:#0f9d58;white-space:nowrap;">+1.43%</div><div style="position:absolute;left:27.7px;top:84.3px;width:150.6px;height:1.1px;background:#aaa;"></div><div style="position:absolute;left:28.5px;top:90.0px;font-size:2.3px;line-height:2.3px;color:#999;white-space:nowrap;">Market Cap</div><div style="position:absolute;left:58.5px;top:90.0px;font-size:2.3px;line-height:2.3px;color:#999;white-space:nowrap;">P/E Ratio</div><div style="position:absolute;left:82.5px;top:90.0px;font-size:2.3px;line-height:2.3px;color:#999;white-space:nowrap;">Beta</div><div style="position:absolute;left:28.5px;top:93.5px;font-size:3.1px;line-height:3.1px;color:#555;white-space:nowrap;">1,733,754M</div><div style="position:absolute;left:58.5px;top:93.5px;font-size:3.1px;line-height:3.1px;color:#555;white-space:nowrap;">33.15</div><div style="position:absolute;left:82.5px;top:93.5px;font-size:3.1px;line-height:3.1px;color:#555;white-space:nowrap;">1.00</div><div style="position:absolute;left:153.500px;top:97.500px;width:25.500px;height:6.500px;border:.8px solid #444;background:#fff;font-size:2.600px;line-height:5px;color:#333;padding-left:2px">12 Months</div><div style="position:absolute;left:27.700px;top:103.500px;width:151.300px;height:60px;border:.9px solid #555;background:#fff"></div><svg style="left:43.400px;top:107px" width="132" height="44" viewBox="0 0 132 44"><path d="M0 10.500 6 10 8 11.600 20 11.300 30 12 40 11.300 44 12.300 60 12.500 90 12.500 100 11.500 120 11.300 124 10.300 128 10.800 132 10V43H0z" fill="#e8eefb"/><path d="M0 10.500 6 10 8 11.600 20 11.300 30 12 40 11.300 44 12.300 60 12.500 90 12.500 100 11.500 120 11.300 124 10.300 128 10.800 132 10" fill="none" stroke="#4a86e8" stroke-width=".7"/><path d="M0 1.500H132M0 12H132M0 22.500H132M0 33H132" stroke="#e3e6ee" stroke-width=".4"/><path d="M0 43H132" stroke="#666" stroke-width=".7"/></svg><div style="position:absolute;left:30.0px;top:106.0px;font-size:2.4px;line-height:2.4px;color:#666;white-space:nowrap;width:12px;text-align:right">2000.00</div><div style="position:absolute;left:30.0px;top:116.5px;font-size:2.4px;line-height:2.4px;color:#666;white-space:nowrap;width:12px;text-align:right">1500.00</div><div style="position:absolute;left:30.0px;top:127.0px;font-size:2.4px;line-height:2.4px;color:#666;white-space:nowrap;width:12px;text-align:right">1000.00</div><div style="position:absolute;left:30.0px;top:137.5px;font-size:2.4px;line-height:2.4px;color:#666;white-space:nowrap;width:12px;text-align:right">500.00</div><div style="position:absolute;left:30.0px;top:148.0px;font-size:2.4px;line-height:2.4px;color:#666;white-space:nowrap;width:12px;text-align:right">0.00</div></div>
<div class="lbl" style="left:1210px">Google Finance Inves...</div>
<div class="flt" style="left:843px;color:#444746">Owned by anyone</div>
<svg style="left:1004px;top:432px" width="13" height="7" viewBox="0 0 13 7" ><path d="M0 0h13L6.500 7z" fill="#5f6368"/></svg>
<div class="flt" style="left:1064px;color:#202124;font-size:18.500px;-webkit-text-stroke:.2px #202124">Last opened by me</div>
<svg style="left:1264.5px;top:426px" width="25" height="17" viewBox="0 0 25 17" ><g fill="none" stroke="#5f6368" stroke-width="2.300"><rect x="1.150" y="1.150" width="22.700" height="14.700"/><path d="M8.700 1v15M16.300 1v15M1 8.500h23"/></g></svg>
<div class="a" style="left:1316px;top:424px;font-size:18.500px;line-height:22px;color:#5f6368;font-weight:700;letter-spacing:-.7px">AZ</div>
<svg style="left:1324.5px;top:421.5px" width="8" height="25.5" viewBox="0 0 8 25.5" ><path d="M0 4l4-4 4 4zM0 21.500l4 4 4-4z" fill="#5f6368"/></svg>
<svg style="left:1367px;top:423px" width="26" height="22" viewBox="0 0 26 22" ><path d="M1.300 2.300h8.500l2.600 2.800h12.300v15.600H1.300z" fill="none" stroke="#5f6368" stroke-width="2.600" stroke-linejoin="round"/></svg>
<svg style="left:1425.5px;top:469.5px" width="13" height="21" viewBox="0 0 13 21" ><path d="M.7 .7v16.200l3.700-3.500 2.600 6 2-.9-2.600-5.900h5.100z" fill="#fff" stroke="#000" stroke-width="1"/></svg>
<div class="a" style="left:861.500px;top:656.500px;width:23px;height:24px;border-radius:50%;background:linear-gradient(90deg,#ea1c24 0 48%,#c5161c 48% 64%,#fbc531 64%)"></div>
<div class="a bclip"><div class="a brain"><svg style="left:12.5px;top:10.5px" width="25" height="23.4" viewBox="0 0 23.500 22" ><defs><linearGradient id="lgB1" x1="0" y1="0" x2="1" y2="1"><stop offset="0" stop-color="#ff8a3c"/><stop offset=".25" stop-color="#ee3fb5"/><stop offset="1" stop-color="#8a52f0"/></linearGradient><linearGradient id="lgB2" x1="0" y1="0" x2="1" y2="1"><stop offset="0" stop-color="#9a50ee"/><stop offset=".6" stop-color="#6f63f7"/><stop offset="1" stop-color="#2f9bff"/></linearGradient></defs><path d="M11 1.500C9 .2 6.200 .8 5.300 3 3 3.200 1.600 5.500 2.500 7.600.4 8.800 .2 11.800 2.200 13.200 1.600 15.600 3.300 17.800 5.600 17.800 6.500 20.300 9.300 21.300 11 19.800z" fill="url(#lgB1)"/><path d="M12.500 1.500c2-1.300 4.800-.7 5.700 1.500 2.300.2 3.700 2.500 2.800 4.600 2.100 1.200 2.300 4.200.3 5.600.6 2.400-1.100 4.600-3.400 4.600-.9 2.500-3.700 3.500-5.400 2z" fill="url(#lgB2)"/><path d="M4 11h7M8 6.500c-2 0-3 1.500-3 3M8 16c-2 0-3-1.500-3-3M15.500 5v2.500l2 1.500M15.500 7.500l-2 1.500M19 11h-3l-1.500 2M16 16v-2" fill="none" stroke="#fff" stroke-width="1"/></svg></div></div>
</div>
<div class="a btm"></div>
</div>
<div id="tb" class="a">
<svg style="left:15.5px;top:12px" width="17" height="17" viewBox="0 0 17 17"><path d="M0 2.400l7-1v7.100H0zM8 1.300L17 0v8.500H8zM0 9.500h7v7.100l-7-1zM8 9.500h9V17l-9-1.300z" fill="#111"/></svg>
<div class="a srch"><svg style="left:9px;top:10px" width="18" height="19" viewBox="0 0 18 19"><g fill="none" stroke="#222" stroke-width="1.500"><circle cx="11" cy="7" r="5.500"/><path d="M7 11L.8 17.800"/></g></svg><span>Search web &amp; PC</span>
<svg style="left:208px;top:0px" width="78" height="40" viewBox="0 0 78 40"><defs><radialGradient id="shG" gradientUnits="userSpaceOnUse" cx="36" cy="25" r="36"><stop offset="0" stop-color="#3a86a8"/><stop offset=".4" stop-color="#1f3f8c"/><stop offset=".85" stop-color="#10104c"/><stop offset="1" stop-color="#0d0d45"/></radialGradient><linearGradient id="shD" x1="0" y1="0" x2="0" y2="1"><stop offset="0" stop-color="#f4f4fc"/><stop offset="1" stop-color="#a9addb"/></linearGradient></defs><g fill="url(#shG)"><ellipse cx="38.500" cy="20.500" rx="35.500" ry="17"/><circle cx="70.5" cy="20.5" r="5.2"/><circle cx="67.7" cy="26.0" r="5.2"/><circle cx="59.9" cy="30.5" r="5.2"/><circle cx="48.4" cy="33.3" r="5.2"/><circle cx="35.2" cy="33.9" r="5.2"/><circle cx="22.5" cy="32.2" r="5.2"/><circle cx="12.6" cy="28.4" r="5.2"/><circle cx="7.2" cy="23.3" r="5.2"/><circle cx="7.2" cy="17.7" r="5.2"/><circle cx="12.6" cy="12.6" r="5.2"/><circle cx="22.5" cy="8.8" r="5.2"/><circle cx="35.2" cy="7.1" r="5.2"/><circle cx="48.4" cy="7.7" r="5.2"/><circle cx="59.9" cy="10.5" r="5.2"/><circle cx="67.7" cy="15.0" r="5.2"/></g><ellipse cx="39" cy="9.500" rx="12.500" ry="7" fill="url(#shD)"/><path d="M26.500 10.500q12.500 4.500 25 0" fill="none" stroke="#d9a520" stroke-width="1.400"/><path d="M29 7.500q10 2.800 20 0" fill="none" stroke="#e6bd55" stroke-width=".9"/><path d="M3.500 21.500q22-2.500 36 0 16-3.500 28-5-8 6-28 7.800-18 1-36-2.800z" fill="#e8eafc"/><path d="M4 21q18-1.800 30 .2" fill="none" stroke="#d9a520" stroke-width=".8"/><path d="M50 18.500l16-2.800" stroke="#d9a520" stroke-width="1"/><rect x="30" y="14" width="12" height="8" rx="2" fill="#a87410"/><rect x="33" y="15.500" width="5" height="4" fill="#d9b45a"/><rect x="41" y="18" width="6" height="4" fill="#2f7fcf"/><path d="M32 23.500h15l-3 12q-4.500 1.500-9 0z" fill="url(#shD)"/><path d="M56 11l4.500-3 1.500 2.500zM60 9.500l8 8" stroke="#f0f0ff" stroke-width="1.200" fill="#f0f0ff"/><g fill="#fff"><circle cx="6.500" cy="17" r="1.800" opacity=".6"/><circle cx="15" cy="12.500" r="1.100"/><circle cx="22.500" cy="11.500" r="1.300" fill="#fff6c8"/><circle cx="17" cy="18" r="1"/><circle cx="15.500" cy="29" r="1.100"/><circle cx="23" cy="33.500" r="1.300" fill="#fff2b0"/><circle cx="66" cy="11" r="1" opacity=".8"/><circle cx="58" cy="31" r="1.600"/><circle cx="54" cy="31.500" r="1" opacity=".7"/></g></svg>
</div>
<svg style="left:350.0px;top:7px" width="26" height="26" viewBox="0 0 26 26"><defs><linearGradient id="cpA" x1="0" y1="0" x2=".6" y2="1"><stop offset="0" stop-color="#1f7cf0"/><stop offset=".45" stop-color="#2fb7a0"/><stop offset=".8" stop-color="#c9d63a"/><stop offset="1" stop-color="#f5b63c"/></linearGradient><linearGradient id="cpB" x1="0" y1="1" x2="1" y2="0"><stop offset="0" stop-color="#f5843c"/><stop offset=".45" stop-color="#ea4c9a"/><stop offset="1" stop-color="#8a5af5"/></linearGradient></defs><path d="M8.500 2.500h6.200c2 0 3.200 1.200 3.800 3l1 3.200h-4l-1-3.200-2.800 9.500c-.6 2-1.800 3-3.800 3H3.600c-2 0-2.800-1.500-2.200-3.500l2.600-8.500c.8-2.300 2.300-3.500 4.500-3.500z" fill="url(#cpA)"/><path d="M17.500 23.500h-6.200c-2 0-3.200-1.200-3.800-3l-1-3.200h4l1 3.200 2.800-9.500c.6-2 1.800-3 3.800-3h4.300c2 0 2.800 1.500 2.200 3.500l-2.600 8.500c-.8 2.300-2.300 3.500-4.500 3.500z" fill="url(#cpB)"/></svg>
<svg style="left:399.4px;top:7.5px" width="25" height="25" viewBox="0 0 25 25"><rect width="25" height="25" rx="1.500" fill="#a40c0c" stroke="#c33" stroke-width="1" stroke-dasharray="1.500 1.500"/><path d="M5 20L8 5h9l-.6 3H10.800l-.7 3.500h5l-.6 3h-5L8.400 20zM13 20l.3-2 6-6h-4.500l.5-2.500H24l-.4 2-6 6h5l-.5 2.500z" fill="#fff"/></svg>
<svg style="left:447.8px;top:8px" width="26" height="24" viewBox="0 0 26 24"><path d="M1 3a1.500 1.500 0 0 1 1.500-1.500H9l2 2.500h12.500A1.500 1.500 0 0 1 25 5.500V7H1z" fill="#e8a81c"/><rect x="1" y="6" width="24" height="15" rx="1.500" fill="#fcd668"/><rect x="5" y="14" width="16" height="7" fill="#3b87d8"/><rect x="10" y="17.500" width="6" height="3.500" fill="#fcd668"/></svg>
<svg style="left:496.7px;top:6px" width="26" height="28" viewBox="0 0 26 28"><defs><radialGradient id="ffA" cx=".6" cy=".2" r=".9"><stop offset="0" stop-color="#ffe34d"/><stop offset=".45" stop-color="#ff9a1f"/><stop offset="1" stop-color="#f0302f"/></radialGradient></defs><circle cx="13" cy="15" r="12" fill="url(#ffA)"/><circle cx="13.500" cy="15.500" r="6.500" fill="#7b3fd6"/><path d="M6 8c2-4 6-4 8-2-3 0-4 2-4 3 2 0 5 1 4 4-1-2-4-2-5 0-1 3 2 6 6 5-6 4-13-2-9-10z" fill="#ff8a1c"/><path d="M17 1c1 2 4 4 5 7-2-1-3-1-4 0z" fill="#ffcf3a"/></svg>
<svg style="left:546.6px;top:8px" width="24" height="24" viewBox="0 0 24 24"><circle cx="12" cy="12" r="11.5" fill="#fbc116"/><path d="M12 12L2.04 6.25A11.5 11.5 0 0 1 21.96 6.25z" fill="#e33b2e"/><path d="M12 12L2.04 6.25A11.5 11.5 0 0 0 12.00 23.50z" fill="#2da94f"/><circle cx="12" cy="12" r="5.75" fill="#fff"/><circle cx="12" cy="12" r="4.49" fill="#4285f4"/></svg>
<svg style="left:594.5px;top:7px" width="26" height="26" viewBox="0 0 26 26"><rect x="1" y="1" width="24" height="8" fill="#9c2a8a"/><rect x="1" y="9" width="24" height="8" fill="#2a5fb8"/><rect x="1" y="17" width="24" height="8" fill="#2e8a3c"/><rect x="1" y="1" width="24" height="2.500" fill="#c23a2e"/><rect x="9" y="0" width="8" height="26" fill="#d9a441"/><rect x="9.500" y="9" width="7" height="7" fill="#8a5a1c"/><rect x="11" y="11" width="4" height="4" fill="#f2d488"/></svg>
<svg style="left:643.4px;top:7px" width="26" height="26" viewBox="0 0 26 26"><circle cx="13" cy="13" r="12.500" fill="#fff" stroke="#d9dde3" stroke-width="1"/><g stroke-width="3.200" stroke-linecap="round"><path d="M10.500 6v5" stroke="#36c5f0"/><path d="M6 10.800h1" stroke="#36c5f0"/><path d="M15 10.500h5" stroke="#2eb67d"/><path d="M15.200 6v1" stroke="#2eb67d"/><path d="M15.500 15v5" stroke="#ecb22e"/><path d="M19 15.200h1" stroke="#ecb22e"/><path d="M6 15.500h5" stroke="#e01e5a"/><path d="M10.800 19v1" stroke="#e01e5a"/></g></svg>
<svg style="left:696.3px;top:8px" width="18" height="24" viewBox="0 0 18 24"><path d="M.5 .5h12l5 5v18H.5z" fill="#fbfbfb" stroke="#cfd4d8" stroke-width="1"/><path d="M12.500 .5v5h5" fill="#e8eaec" stroke="#cfd4d8" stroke-width="1"/></svg>
<svg style="left:741.2px;top:6px" width="26" height="28" viewBox="0 0 26 28"><path d="M11 8c6-1 11 2 11 8 0 5-4 3-6 5s0 5-5 5C5 26 1 21 1 16 1 11 5 9 11 8z" fill="#dfe6ee" stroke="#8a98a8" stroke-width="1"/><circle cx="6" cy="15" r="2" fill="#e74c3c"/><circle cx="10" cy="11.500" r="2" fill="#f1c40f"/><circle cx="15" cy="11" r="2" fill="#2ecc71"/><circle cx="7" cy="20" r="2" fill="#3498db"/><path d="M23 1l2 1.500L15 22l-3 2 .5-3.500z" fill="#d98a3a"/><path d="M22 1l3.500 2.500-1.500 3-3.500-2.500z" fill="#f0c27a"/></svg>
<svg style="left:790.0999999999999px;top:7px" width="26" height="26" viewBox="0 0 26 26"><path d="M18.500 1.500L8 11.500 3.600 8.200 1.500 9.200v7.600l2.100 1L8 14.500l10.500 10 6-2.800V4.300zM18.500 8.300v9.400L12.200 13z" fill="#0b7ac8" fill-rule="evenodd"/><path d="M18.500 1.500l6 2.800v17.400l-6 2.800z" fill="#2aa5f2"/></svg>
<svg style="left:842.0px;top:9px" width="20" height="24" viewBox="0 0 20 24"><path d="M8.500 1h3l5 16H3.500z" fill="#f48b1c"/><path d="M7.200 6h5.600l1.200 3.800H6zM5 12.800h10l1 3.400H4z" fill="#f2f2f2"/><path d="M1.800 17h16.400l1.300 5.500h-19z" fill="#f48b1c"/><path d="M1.800 17h16.400l.4 1.600H1.400z" fill="#ffb65a"/></svg>
<svg style="left:887.9px;top:7px" width="26" height="26" viewBox="0 0 26 26"><path d="M13 0l3 2 3.500-.5 1.500 3.200 3.200 1.500-.5 3.500 2 3-2 3 .5 3.500-3.200 1.500-1.500 3.200-3.500-.5-3 2-3-2-3.500.5-1.500-3.200-3.200-1.500.5-3.500-2-3 2-3-.5-3.500 3.200-1.500L6.500 1.500 10 2z" fill="#fff" transform="translate(0 .3)"/><path d="M13 5l-6 15h2.500l3.500-9.500 3.500 9.500H19z" fill="#3b78e7"/><path d="M8 14.500h10" stroke="#3b78e7" stroke-width="1.600"/><circle cx="13" cy="5.500" r="1.800" fill="#3b78e7"/><path d="M19 10l3 3-3 2z" fill="#37b36b"/></svg>
<div class="a" style="left:927px;top:0;width:44.500px;height:40px;background:rgba(255,255,255,.6)"></div>
<svg style="left:937.8px;top:7px" width="24" height="24" viewBox="0 0 24 24"><circle cx="12" cy="12" r="11.5" fill="#fbc116"/><path d="M12 12L2.04 6.25A11.5 11.5 0 0 1 21.96 6.25z" fill="#e33b2e"/><path d="M12 12L2.04 6.25A11.5 11.5 0 0 0 12.00 23.50z" fill="#2da94f"/><circle cx="12" cy="12" r="5.75" fill="#fff"/><circle cx="12" cy="12" r="4.49" fill="#4285f4"/></svg>
<div class="a" style="left:950.8px;top:20px;width:15px;height:15px;border-radius:50%;background:radial-gradient(circle at 50% 40%,#7a563f 0 25%,#2a2a28 26%);border:.5px solid #222"></div>
<div class="a" style="left:972px;top:0;width:1px;height:40px;background:#8fa3ae"></div>
<svg style="left:986.6999999999999px;top:10px" width="24" height="20" viewBox="0 0 24 20"><rect width="24" height="20" fill="#000"/><rect width="24" height="3" fill="#d0d0d0"/><rect x=".5" y=".5" width="23" height="19" fill="none" stroke="#9aa" stroke-width="1"/><path d="M3 7.500h2M3 9.500h2M6.500 7l1.500 1.500M9 9.500h8" stroke="#ddd" stroke-width="1.200"/></svg>
<svg style="left:1036.8px;top:8.5px" width="23" height="23" viewBox="0 0 23 23"><rect width="23" height="23" rx="3.500" fill="#f37f20" stroke="#f9a55e" stroke-width="1"/><path d="M4.500 7a2.700 2.700 0 0 1 4.900-1.400l2.100 2.100 2.100-2.100A2.700 2.700 0 0 1 18.500 7v1.800a2.700 2.700 0 0 1-1.800 2.500v.4a2.700 2.700 0 0 1 1.800 2.500V16a2.700 2.700 0 0 1-4.900 1.400l-2.100-2.100-2.100 2.100A2.700 2.700 0 0 1 4.500 16v-1.800a2.700 2.700 0 0 1 1.800-2.500v-.4A2.700 2.700 0 0 1 4.500 8.800z" fill="none" stroke="#fff" stroke-width="2.100"/></svg>
<svg style="left:1084.5px;top:7px" width="24" height="24" viewBox="0 0 24 24"><circle cx="12" cy="12" r="11.5" fill="#fbc116"/><path d="M12 12L2.04 6.25A11.5 11.5 0 0 1 21.96 6.25z" fill="#e33b2e"/><path d="M12 12L2.04 6.25A11.5 11.5 0 0 0 12.00 23.50z" fill="#2da94f"/><circle cx="12" cy="12" r="5.75" fill="#fff"/><circle cx="12" cy="12" r="4.49" fill="#4285f4"/></svg>
<div class="a" style="left:1097.5px;top:20px;width:15.500px;height:15.500px;border-radius:50%;background:#c2185b;color:#fff;font-size:9.500px;line-height:15.500px;text-align:center">S</div>
<svg style="left:1135px;top:8px" width="24" height="24" viewBox="0 0 24 24"><circle cx="12" cy="12" r="11.800" fill="#2b2e3a"/><g fill="none" stroke="#9feaf9" stroke-width="1"><ellipse cx="12" cy="12" rx="8.600" ry="3.200"/><ellipse cx="12" cy="12" rx="8.600" ry="3.200" transform="rotate(60 12 12)"/><ellipse cx="12" cy="12" rx="8.600" ry="3.200" transform="rotate(120 12 12)"/></g><circle cx="12" cy="12" r="1.500" fill="#9feaf9"/></svg>
<div class="ul" style="left:392px;width:40px"></div>
<div class="ul" style="left:784px;width:32px"></div>
<div class="ul" style="left:816px;width:8px;background:#7fb2e6"></div>
<div class="ul" style="left:927px;width:47.5px"></div>
<div class="ul" style="left:980px;width:32px"></div>
<div class="ul" style="left:1012px;width:8px;background:#7fb2e6"></div>
<div class="ul" style="left:1029px;width:40px"></div>
<div class="ul" style="left:1078px;width:40px"></div>
<div class="ul" style="left:1127px;width:40px"></div>
<svg style="left:3231.5px;top:15px" width="14" height="8" viewBox="0 0 14 8"><path d="M1 7.300L7 1.300l6 6" fill="none" stroke="#111" stroke-width="1.500"/></svg>
<svg style="left:3254px;top:12px" width="18" height="16" viewBox="0 0 18 16"><path d="M1 5.500h3l4-4v13l-4-4H1z" fill="none" stroke="#111" stroke-width="1.200" stroke-linejoin="round"/><path d="M10.500 5.500a3.500 3.500 0 0 1 0 5M12.500 3.500a6 6 0 0 1 0 9M14.800 1.800a8.500 8.500 0 0 1 0 12.400" fill="none" stroke="#111" stroke-width="1.100"/></svg>
<svg style="left:3281px;top:12px" width="14" height="17" viewBox="0 0 14 17"><rect x="1" y="2.500" width="8.500" height="8" rx="2" fill="none" stroke="#111" stroke-width="1.200"/><path d="M9.500 5.500l3-1.500v5l-3-1.500M3 13.500c2 1.500 5 1.500 7 0" fill="none" stroke="#111" stroke-width="1.200"/><circle cx="5.300" cy="6.500" r="1.500" fill="none" stroke="#111" stroke-width="1"/></svg>
<svg style="left:3305px;top:13px" width="16" height="15" viewBox="0 0 16 15"><g fill="none" stroke="#222" stroke-width="1.200"><path d="M1 8.500A13 13 0 0 1 14.500 1" /><path d="M4.500 10.500A9 9 0 0 1 14.500 5"/><path d="M8 12.500a5.500 5.500 0 0 1 6.500-3.500"/></g><path d="M10.500 14.500l4-3v3z" fill="#222"/></svg>
<div class="clk">2:51 PM<br>8/20/2025</div>
<svg style="left:3398px;top:9px" width="20" height="20" viewBox="0 0 20 20"><path d="M1 1h16v11.500H7.500l-3.500 3.500v-3.500H1z" fill="#111"/><path d="M4 4.500h10M4 7h10M4 9.500h7" stroke="#cfe0ea" stroke-width="1"/></svg>
<div class="a" style="left:3409px;top:20px;width:15px;height:15px;border-radius:50%;background:#dfe9ef;border:1px solid #444;color:#111;font-size:10.500px;line-height:13px;text-align:center">2</div>
<div class="a" style="left:3435px;top:0;width:1px;height:40px;background:#9fb0ba"></div>
</div>
</body></html>
